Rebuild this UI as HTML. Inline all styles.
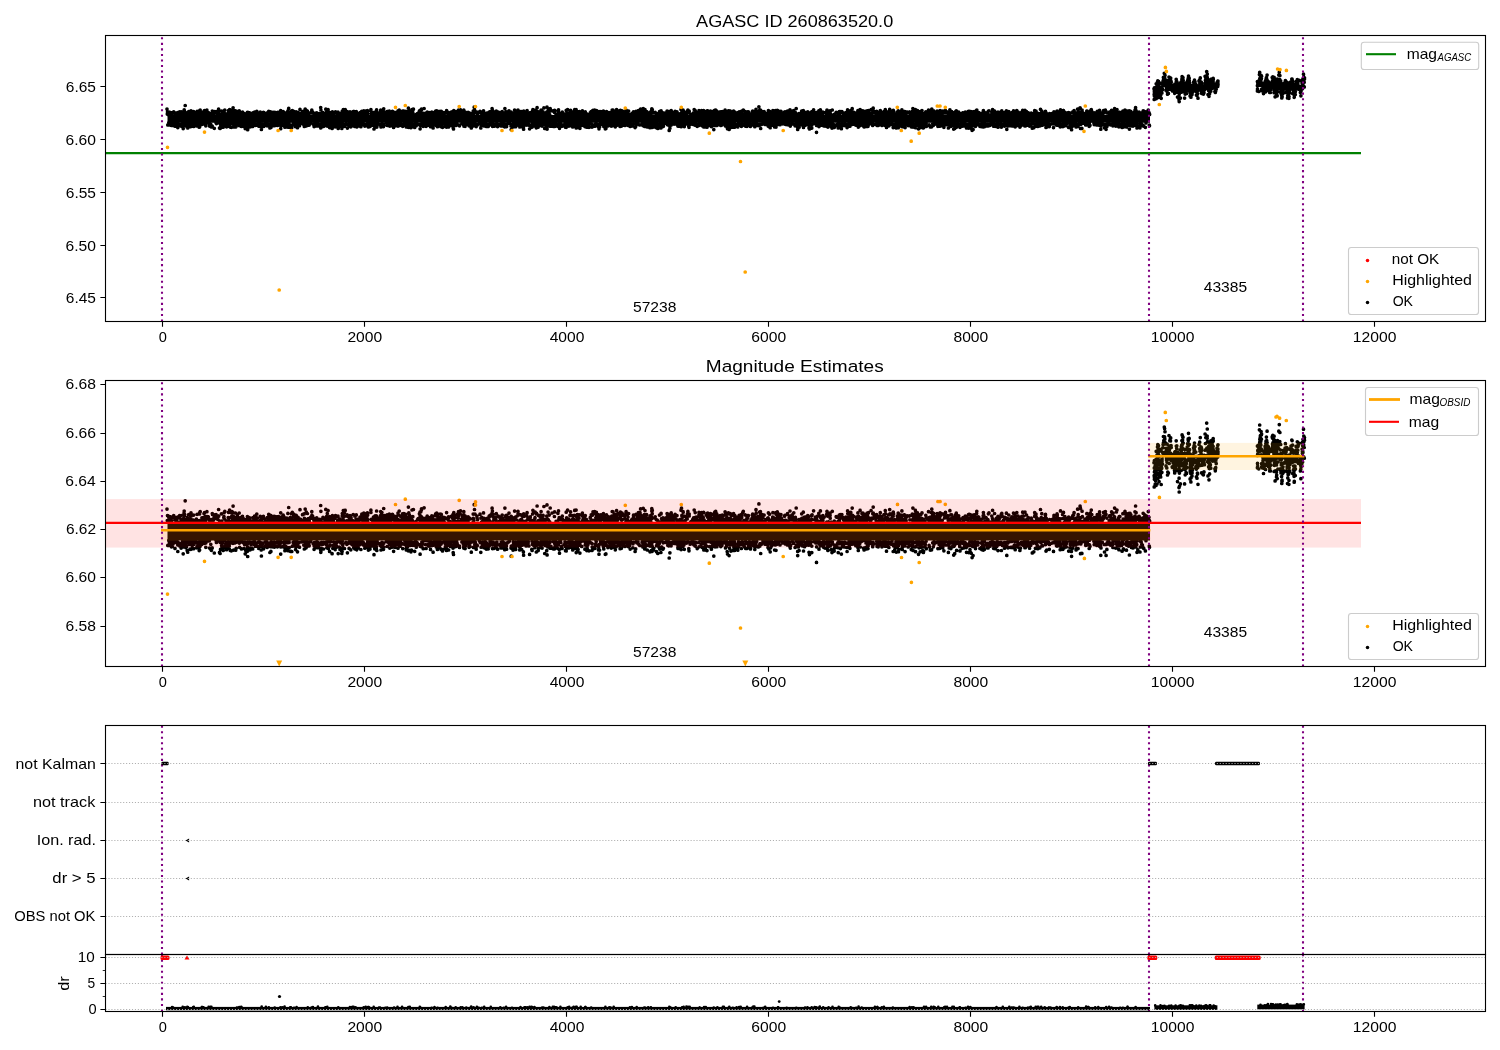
<!DOCTYPE html><html><head><meta charset="utf-8"><style>html,body{margin:0;padding:0;background:#fff;overflow:hidden}svg{display:block;will-change:transform}text{font-family:"Liberation Sans",sans-serif;fill:#000}</style></head><body>
<svg width="1500" height="1050" viewBox="0 0 1500 1050">
<rect width="1500" height="1050" fill="#fff"/>
<defs><clipPath id="c1"><rect x="105.5" y="35.5" width="1380" height="286"/></clipPath><clipPath id="c2"><rect x="105.5" y="380.5" width="1380" height="286"/></clipPath><clipPath id="c3"><rect x="105.5" y="725.5" width="1380" height="229"/></clipPath><clipPath id="c4"><rect x="105.5" y="954.5" width="1380" height="57"/></clipPath></defs>
<text x="794.64" y="26.50" font-size="17.40" text-anchor="middle" textLength="197.12" lengthAdjust="spacingAndGlyphs">AGASC ID 260863520.0</text>
<text x="794.76" y="372.00" font-size="17.40" text-anchor="middle" textLength="177.85" lengthAdjust="spacingAndGlyphs">Magnitude Estimates</text>
<g clip-path="url(#c1)">
<rect x="167.5" y="114.93" width="982.5" height="7.85" fill="#000"/>
<path d="M167.0 109.1h0m0.3 5h0m0.2-2.2h0m0.3 13h0m0.5-10.3h0m0.3-0.3h0m0.1-1.8h0m0.1 10.3h0m0 0h0m0.1-8.4h0m0.1-2.2h0m0.2 1.1h0m0 10h0m0-8.5h0m0.2 10.1h0m0-0.9h0m0.6-10.3h0m0.3 0h0m0.1-1.2h0m0.1 2.2h0m0.3-1.3h0m0.3 11.6h0m0.4 0.5h0m0.1-2.5h0m0.3-8.9h0m0 10.2h0m0 0.2h0m0.3 0.9h0m0.3-12.8h0m0 0h0m0.5 11.6h0m0.7-12.3h0m0.3 10.9h0m0.5-10.2h0m0.5 13.6h0m0.2-12.5h0m0.3 9.2h0m0.2 0.4h0m0.3-8.8h0m0 8.3h0m0.1 0.9h0m0.2-9.8h0m0.2 0.5h0m0.5 0.3h0m0.2-0.2h0m0.1 8.8h0m0-10.4h0m0.3-0.3h0m0.2 12.1h0m0 2.9h0m0.1-3.5h0m0.6-0.1h0m0.2-0.2h0m0.9-12h0m0 1.1h0m0.2 12.3h0m0.3-10.4h0m0.5-0.2h0m0.2 9.9h0m0.1-9.8h0m0-0.1h0m0.2 11.5h0m0.1-12.1h0m0 0.4h0m0.1-2.5h0m0.3 12h0m0.3-9.3h0m0 10.6h0m0.2-10.5h0m0.3-1.2h0m0.3 10.3h0m0-0.8h0m0.5 5.6h0m0.3-15.4h0m0 9.5h0m0 2.9h0m0.4-2.2h0m0.1-12.5h0m0 2.7h0m0 0.8h0m0-0.3h0m0.2 10.2h0m0-14.4h0m0 15h0m0.2-0.9h0m0.1-0.5h0m0-11.7h0m0.2-0.3h0m0 13.9h0m0.2-0.3h0m0.3-19.6h0m0.2 17.4h0m0.6-9h0m0 11h0m0.1 1h0m0.2-12.4h0m0.3 0.9h0m0 9.4h0m0 1.5h0m0.6-12.5h0m0 14.4h0m0.1-4.4h0m0 0.1h0m0.3 0.2h0m0.1 4.8h0m0.2-13.8h0m0 9.1h0m0.1-10h0m0.2 1.3h0m0.5-3h0m0.5 11.6h0m0.3 1.3h0m0.1-9.7h0m0.4 11.9h0m0.1-13.2h0m0 9.9h0m0.2-0.5h0m0.2-10.9h0m0.2 1.6h0m0.1 13.1h0m0.1-14.8h0m0.1 2.9h0m0-3.9h0m0.2 3.9h0m0-2.7h0m0.1 12.6h0m0.1-10.9h0m0.5 0.1h0m0.4 8.9h0m0 1h0m0.1 2.2h0m0.1-11.5h0m0.1 10.4h0m0.6-1.1h0m0.2-9.8h0m0.2-2.2h0m0.1 12.8h0m0 1.9h0m0.2-3.1h0m0.3 0.7h0m1.3-9.9h0m0.3 9.1h0m0.6-9.7h0m0.4 12.5h0m0.1-2.6h0m0.1 2h0m0.1-1.4h0m0-12.6h0m0.4 3.3h0m0.3 10.4h0m0.3-0.9h0m0.1 1.4h0m0.9 0.3h0m0.1-11.8h0m0 13.1h0m0.1-3h0m0.3-13h0m0 15.7h0m0.1-16.3h0m0.1 12.3h0m0.2 2.5h0m0.1-0.1h0m0.1-2.4h0m0-12.7h0m0.6 13.7h0m0.2-9.3h0m0 8.8h0m0.6-9h0m0.1 10.1h0m0.2-11.6h0m0.3 1h0m0.6 0.6h0m0.5-1.7h0m0.4 9.9h0m0-10h0m0.1 1.2h0m0.2-2.9h0m0.1 12.6h0m0.4-10.2h0m0-2.7h0m0.1 13.3h0m0.2-0.7h0m0-9.9h0m0.1 9.7h0m0.6-10.8h0m0.1 2.2h0m0.1-1.1h0m0.1 9.9h0m0 2.5h0m0-2h0m0.8-1.2h0m0.3-12.4h0m0.4 2.1h0m0 10.6h0m0.5-9.5h0m0.5-0.9h0m0.5 10.5h0m0.6-0.3h0m0.1 3.3h0m0.3-11.7h0m0.1-0.8h0m0.7 13h0m0.1-12.2h0m0.1 10.1h0m0-9.9h0m0.6 12.5h0m0.3-12.5h0m0.5 11.5h0m0.1-15h0m0.1 2.5h0m0.1-2.1h0m0.4 2.7h0m0.6-0.2h0m0.5-1h0m0.1-0.2h0m0.2 15.6h0m0-16.7h0m1.6 1.5h0m0.1-0.3h0m0 9.9h0m0-9.6h0m0.1-1.6h0m0.2 1.6h0m0.1 10h0m0 0.5h0m0.6-11.5h0m0.6 0.9h0m0.1 0.5h0m0.6-1.4h0m0.3-2.9h0m0.1 3h0m0.7 10.7h0m0.1 5.1h0m0.2-13.7h0m0.4 14.2h0m0.1-4.9h0m0.1-9.1h0m0.2 12.1h0m0.2-3.2h0m0.1-0.3h0m0.2 0.6h0m0.4-12.6h0m0 12h0m0.2 1.9h0m0.2-10.6h0m0.1 11.2h0m0-2.9h0m0.2 4h0m0.5-3.1h0m0.1 2.1h0m0-1.8h0m0.3 2.5h0m0.1-3.6h0m0.1 4.4h0m0.6-14.5h0m0.2-0.3h0m0.2-1.8h0m0 2.7h0m0.6-3.2h0m0 12.8h0m0.1 2.5h0m0.9-1h0m0.2-10.2h0m0.1 11.6h0m0.5 1h0m0.2-2.8h0m0.3 1.1h0m0.2-10.8h0m0.3 9.1h0m0 2.9h0m0.4-12.1h0m0.1 9.5h0m0.1-0.5h0m0-10.4h0m0.2 11.9h0m0.1-14.2h0m0.3 3.6h0m0.4 12.2h0m0.1-1.2h0m0.3-15.6h0m0.6 1h0m0.1 16.6h0m0.1-14.4h0m0.1 2h0m0.2 9.1h0m0.5-0.9h0m0.1 4.4h0m0.1-14.7h0m0.4-0.4h0m0.2-2h0m0.1 0.5h0m0.2-0.3h0m0.3 3.3h0m0.2-0.4h0m0.2 0.7h0m0 10h0m0.1-16.2h0m0.2 15.2h0m0.1-8.2h0m0.2-2.5h0m0 14.7h0m0-3.9h0m0.3-10.1h0m0.4 1.3h0m0.4-0.3h0m0.1-3.2h0m0 13h0m0.2-10.8h0m0.5 0.7h0m0-2.9h0m0.2 16.2h0m0.4-4.1h0m0.1 3.3h0m0.6-2.7h0m0-0.4h0m0.1-8.4h0m0 8.4h0m0.1-9.8h0m0.1-1h0m0.4-0.8h0m0.4 1.3h0m1.1 1.2h0m0.2-3.2h0m0 12.2h0m0.1 0.9h0m0.3 1.8h0m0.4-11.2h0m0.4-1.7h0m0.3 1.1h0m0 0.8h0m0.5-1h0m0 0.1h0m0.3 12.7h0m0-11.8h0m0.6 8.7h0m0.1-0.2h0m0 0.1h0m0.1-9.3h0m0.2-1.8h0m0.1 1.9h0m0.1 0.4h0m0.5-1h0m0.1 0.8h0m0.1 9.4h0m0.4-10.4h0m0.1 1.7h0m0.1-1.1h0m0.1 12.3h0m0.3-12.3h0m0.2 10.6h0m0.3-1.1h0m0 0h0m0.3 5.2h0m0.3-1.6h0m0.2-12.4h0m0.5 9.7h0m0.1 0.1h0m0.2-10.7h0m0.7 13.9h0m0.2-15.3h0m0 11.9h0m0.2 1.5h0m0.1-11.3h0m0 15.3h0m0.1-6.3h0m0.1 2.7h0m0.6-13.5h0m0.1 13.8h0m0.1-12.7h0m0.3-0.5h0m0.1 1.4h0m0.3-0.7h0m0 0.7h0m0 12.3h0m0.2-14h0m0.1 10.5h0m0.4 3.4h0m0.1-0.7h0m0.2-11.8h0m0.5 10.1h0m0.2-0.3h0m0.7-9h0m0.2 11h0m0.2-12h0m0 9.4h0m0.3-8.4h0m0.2 11.3h0m0.2-13.6h0m0.5 2h0m0.2 9.6h0m0.4-1h0m0.1 1.1h0m0.2-1.4h0m0-9.8h0m0.1 1.7h0m0.2-2.8h0m0-0.1h0m0 2.7h0m0.9 10.5h0m0.4-12h0m0.6 11.6h0m0.1-10.5h0m0-1.5h0m0.2-1.6h0m0.2 12.6h0m0.1-9.8h0m0.2-1.1h0m0.6 10.4h0m0.2 2h0m0.4 0.6h0m0.1 0.2h0m0.3-11.3h0m0.3 0h0m0.1 8.4h0m0.2 0.3h0m0.6-9.3h0m0 10.8h0m0.2-12.9h0m0.3 1.5h0m0.4 0.1h0m0.2 13.1h0m0.1-12.6h0m0.1 15.2h0m0.2-4.2h0m0.1-1.5h0m0.8 0.3h0m0.1-10.8h0m0.8-1h0m0.2 14.1h0m0.4-11.4h0m0.9 10.3h0m0.1-12h0m0 10.1h0m0.3-9.1h0m0.7 0.3h0m0.2 9.8h0m0.1-9.6h0m0 0.2h0m0.3 8.3h0m0 2h0m0.3 0.1h0m0.1-1.1h0m0-9.4h0m0.2 10.9h0m0.1-13h0m0.5 12.6h0m0.7-11.5h0m0 0.5h0m0.1 0.4h0m0.1-0.2h0m0-3.2h0m0.1 12.5h0m0.5-11.4h0m0.3-0.2h0m0.1 2.4h0m0-1.2h0m0.2 14.5h0m0.1-3h0m0.3-12.7h0m0.1-0.5h0m0.3 2.2h0m0 11.5h0m0.2 2h0m0-12.8h0m0.3-0.6h0m0 0.3h0m0.1 8.9h0m0.4-10.3h0m0.1 0.8h0m0.2 10.7h0m0.1-12.2h0m0.1 1.2h0m0.1-0.1h0m0.5-0.1h0m0.5 12.3h0m0.1-13.3h0m0.3 2.7h0m0.3 9.4h0m0.1-1.1h0m0.2 0.9h0m0 0h0m0.1 1.5h0m0.1-0.7h0m0-12.7h0m0.1 0.8h0m0.1 0h0m0 1.2h0m0.3 9.6h0m0.1-10.6h0m0.2 1.6h0m0 8.8h0m0-9.9h0m0.5-1.3h0m0 0.5h0m0.4 1.8h0m0.2-1.2h0m0.1 10h0m0.3-10.3h0m0.1 12h0m0.3-12.8h0m0.1 10.8h0m0.1 2.2h0m0.1-12.8h0m0 1.5h0m0.3 8.8h0m0.4 0.7h0m0.3-10h0m0.1-1.3h0m0.6 2h0m0.1 10.4h0m0.1-10.3h0m0.2-1.4h0m0.1 10.2h0m0.4 1h0m0.1-10.5h0m0.3 9.2h0m0.2-12.3h0m0 18h0m0.1-3.1h0m0.1-2.3h0m0.6 0.1h0m0.3-10.9h0m0 1.6h0m0.2 0.9h0m0.3-1.2h0m0 0.2h0m0.3-0.4h0m0.3-1.1h0m0.1 2.3h0m0.1 10.7h0m0.1-13.8h0m0.1 3.3h0m0.4-1.9h0m0.3-0.7h0m0.1 11.8h0m0.1-10.3h0m0.5 9.1h0m0.2 4.2h0m0.1-14.1h0m0.1 13.2h0m0-2.3h0m0.1-10.9h0m0 10.6h0m0-8.7h0m0.2 8h0m0.2 0.9h0m0.4 1.5h0m0.2-2.2h0m0.5-9.3h0m0 12.9h0m0.1-13.8h0m0.3 0.3h0m0 12.5h0m0-11.4h0m0.5-0.8h0m0.2 9.8h0m0.1-12.5h0m0 12.1h0m0-9h0m0.1 9.7h0m0.1 3.5h0m0.3-4.1h0m0 0.2h0m0.2-9.7h0m0 1.1h0m0.1-6.3h0m0.1 5.5h0m0 0.2h0m0.2 9.1h0m0.1 2.7h0m0-2.2h0m0.5-10.1h0m0.3-0.4h0m0.3-0.4h0m0.2-0.1h0m0.3 14.8h0m0.3-14.4h0m0.5-2h0m0 3.2h0m0-1.3h0m0.3 14.6h0m0.5-17.1h0m0 14.8h0m0.4-10.9h0m0.4 9.1h0m0-12.5h0m0.3 1.5h0m0.4 1.5h0m0 0.7h0m0.3 8.7h0m0 1.1h0m0.1-13h0m0.1 11.4h0m0.8-8h0m0-1.5h0m0.1 11.8h0m0.1-12.7h0m0.1 11.3h0m0.1 0h0m0.1 2.9h0m0.1-3.2h0m0.4-0.5h0m0.1-10.4h0m0-0.8h0m0.1 2.8h0m0.5-0.9h0m0 9.4h0m0 0.1h0m0.1 0.2h0m0.3-9.8h0m0.1 11.8h0m0.2 2.3h0m0.3-3.4h0m0.3-11.6h0m0.3 0.4h0m0.4 0.3h0m0.2 10.3h0m0.3-0.1h0m0.2 2.1h0m0.1-11.2h0m0.1-1h0m0.3-4.1h0m0.7 4.2h0m0.6 1.3h0m0.3 8.5h0m0.1-9.1h0m0.8-2.8h0m0.3 2.6h0m0.1 0h0m0.5 9.2h0m0-0.3h0m0.1-8.6h0m0.3 10.4h0m0.3-13.6h0m0.2 15.3h0m0.1-13.4h0m0.1 10.3h0m0.1 0.1h0m0.4-0.1h0m0.1 0.1h0m0.1-14.4h0m0 4.9h0m0 0.8h0m0.2-0.8h0m0 10.8h0m0.2-10.4h0m0.2-0.5h0m0.3 12.1h0m0.2-15.6h0m0.1 13.3h0m0.1-0.8h0m0.5 0.8h0m0.4-12.7h0m0.1 3.9h0m0.1-1.4h0m0.1 0.1h0m0.3 9.8h0m0.2 1.7h0m0.1-11.9h0m0.5 11.2h0m0.4 0.7h0m0-10.6h0m0.2-0.9h0m0.2-0.4h0m0.5 10.1h0m0.7-0.3h0m0-10.5h0m1-2.3h0m0.1 1.6h0m0.2 1.2h0m0.5-0.9h0m0.6 12.1h0m0.3-11.2h0m0.4 1.1h0m0.2 12.5h0m0.1-1.4h0m0.1-1.5h0m0.3 1.1h0m0.1-11h0m0.3-0.5h0m0.1 0.5h0m0 0.4h0m0.3-0.5h0m0 1.4h0m0-1.1h0m0.6 10.3h0m0.3-10.8h0m0.1 0.4h0m0-0.5h0m0.3-0.5h0m0.1 1.3h0m0 11.7h0m0-2.6h0m0.1 0.3h0m0.5 1.7h0m0-0.5h0m0.2 1.1h0m0.1-2.3h0m0 1.6h0m0.2-10.2h0m0.6 8.8h0m0.1 0.3h0m0.1 1.7h0m0.2-0.8h0m0.3-11.5h0m1.1 1.1h0m0.2 12.2h0m0.2-19.3h0m0.1 20.4h0m0.1-0.2h0m0-17.7h0m0.4 4.7h0m0-1.2h0m0.1 12.7h0m0.1-11.2h0m0.1 8.6h0m0 0.5h0m0.6 0.4h0m0.5-0.1h0m0.3-11.7h0m0.4 13.8h0m0.1-2.2h0m0.1-0.8h0m0.6-8.6h0m0.3-1.4h0m0.1 10.4h0m0.5-10h0m0-0.6h0m0.1 1.3h0m0.6-5.4h0m0 14.6h0m0.4-9.6h0m0.2 9.2h0m0-10.6h0m0.1-0.4h0m0.1 12.2h0m0.2 1.4h0m0.4-0.6h0m0.1-14.5h0m0.1 12.4h0m0.2-8.5h0m0.1-2.5h0m0.1 10.8h0m0.1 0.3h0m0.1-10.9h0m0.1 1.4h0m0-4.2h0m0.3 16.6h0m0.9-1h0m0.2-11h0m0-1.9h0m0.1 15.2h0m0.1-13.1h0m0.2 0.4h0m0.2 9.8h0m0.5-10.3h0m0.1-0.3h0m0.1 9.1h0m0-10.3h0m0.4 0.1h0m0.1 2h0m0.2-1.8h0m0.6 1.8h0m0 13.5h0m0.1-14.7h0m0.2 0.4h0m0-1h0m0-1.3h0m0.4 14.3h0m0.2-1.2h0m0.3-11h0m0.4 9.4h0m0-8.7h0m0.2 8.7h0m0.7 0.9h0m0.2-0.4h0m0.2-10.9h0m0.2 13.8h0m0.1-3.4h0m0.1 0.6h0m0.1 1.8h0m0-13.9h0m0.7 13h0m0.1 0.4h0m0-0.3h0m0.7-1.4h0m0.1 1.9h0m0.3-2.2h0m0 2.3h0m0.2-11.3h0m0.4-2.1h0m0 2.5h0m0.2 13.8h0m0-14.7h0m0.2 9.4h0m1 2.5h0m0-12.4h0m0.3 9.8h0m0.3 3.6h0m0-13.1h0m0.2 1.1h0m0.6 9.2h0m0-9.9h0m0.5 0.4h0m0.1 12.8h0m0.4 1.3h0m0-14.2h0m0.3 13.3h0m0.1-15.5h0m0 14.2h0m0.1-3.3h0m0-11.9h0m0.4 13.7h0m0.1-0.5h0m0 0h0m0.1 1.5h0m0.1-12.5h0m0.3-3.6h0m0.2 4.4h0m0.1 0h0m0.5 0.9h0m0-4.4h0m0.4 15.7h0m0.1-16h0m0.3 1.8h0m0.3-2.5h0m0.7 14h0m0 0.2h0m0.7-9.6h0m0.2 10.2h0m0.3-12.8h0m0.1 12.4h0m0-12.1h0m0.2 16.2h0m0.2-15.9h0m0.2 11.9h0m0.8-10h0m0.5 12.1h0m0.1-13.5h0m0 0.8h0m0.1 9.8h0m0.3-8.5h0m0.4-2.9h0m0.3 0.5h0m0.5 10.9h0m0 3.5h0m0.2-2.7h0m0.1-11.1h0m0.4 1.8h0m0.1-0.7h0m0.5 10.5h0m0.2-9.9h0m0 9.4h0m0.3-9.9h0m0.3 8.9h0m0.3-11.6h0m0.6 0.1h0m0 14.2h0m0.4-14.1h0m0.2 2.8h0m0.2-2.5h0m0.1 14.4h0m0.1-1.7h0m0.1-1.2h0m0-0.7h0m0.4-10.9h0m0 14.2h0m0.3-1h0m0.2 0.6h0m0.2-12.3h0m0.3-1.8h0m0.3 15.1h0m0.1 0.2h0m0-13.4h0m0.5 9.3h0m0.3 1.4h0m0-10.5h0m0.3 0.6h0m0.2 0.3h0m0.3 11.4h0m0-11.3h0m0 9.8h0m0.4-10.3h0m0.2 9h0m0 0.5h0m0.2-0.1h0m0.1 1.1h0m0.6-11.6h0m0.1 10h0m0.1-10.4h0m0-0.1h0m0.5 10.3h0m0.2 0.2h0m0 1.3h0m0.2 2.3h0m0.6-12.9h0m0.1 9.4h0m0.2-11.9h0m0.4 2.6h0m0.1-1.3h0m0 10.6h0m0.2-11.1h0m0.2-0.7h0m0.3 0.5h0m0.2 2.8h0m0.1-1.5h0m0.1 10.5h0m0 1h0m0.2-11.4h0m0.2-2.5h0m0.5 3h0m0.3-0.3h0m0.2 0.4h0m0 12.2h0m0.2-0.6h0m0.1-12.8h0m0.3-0.4h0m0-1.1h0m0.1 13.6h0m0.7-0.1h0m0.1-10.1h0m0-1.5h0m0.1 11.2h0m0.1-10.6h0m0.2-0.1h0m0.1-1.9h0m0.1 0.9h0m0.2 13.1h0m0.1-12.2h0m0.2-1.5h0m0-1.3h0m0 3h0m0.1 10.8h0m0-0.9h0m0.1-9h0m0.1-1h0m0-2h0m0 11.5h0m0.4-0.2h0m0 2.2h0m0-1h0m0.1 1h0m0.2 1.9h0m0.9-0.3h0m0.5-1.8h0m0.1 0.7h0m0.1-2.7h0m0 3.6h0m0.9-16.9h0m0 14.4h0m0-13.4h0m0.1 12.6h0m0.1 0.3h0m0.1-9.9h0m0.3 11.4h0m0.3 0.2h0m0.5-11.2h0m0.3-0.5h0m0.4 11h0m0.5-11.9h0m0.1 10.1h0m0.4 6.3h0m0.2-4.9h0m0-0.1h0m0.2 0.2h0m0.2 1.1h0m0-12.9h0m0 0.8h0m0.1 13.2h0m0.3-11.9h0m0.2-2.4h0m0.3 0.4h0m0.1 0.6h0m0 0.8h0m0.5 10.8h0m0.2-12.7h0m0 11.7h0m0 0.8h0m0 1h0m0 0.7h0m0.3-16.3h0m0.1 2.8h0m0.1 14.4h0m0.2-4.4h0m0-8.9h0m0.1 9.3h0m0.1-9.7h0m0.7-0.4h0m0 1.6h0m0.3-1.5h0m0.3 1.5h0m0.2 9.4h0m0.4-10.1h0m0.2 0.8h0m0.1-0.3h0m0.3 0h0m0.3 10.5h0m0.3-12.8h0m0.1 2.4h0m0-2.2h0m0.1-0.3h0m0 2.5h0m0.2-4.3h0m0.3 16.7h0m0.1-13.4h0m0.1 11.8h0m0.3-11.8h0m0 1.1h0m0-3.4h0m0.1 13.4h0m0.1-11.1h0m0.2 10.1h0m0-13h0m0.4 2h0m0.1 12.3h0m1 1.5h0m0-14h0m0 0.4h0m0.1 13.8h0m0.2-17.8h0m0 5.6h0m0.1 9.6h0m0.2 1.6h0m0.1-11.1h0m0-0.3h0m0.3-2.2h0m0.4 2.2h0m0.6-0.3h0m0-0.8h0m0.7 1.2h0m0.1-0.8h0m0.2 9.6h0m0-10.1h0m0.7-1.4h0m0.1 1.5h0m0.1-1.4h0m0.1 13.7h0m0.1-11.5h0m0.2 9.6h0m1.3 0h0m0.1-9.7h0m0.1 0.2h0m0.1-2.8h0m0.1 12.3h0m0.1-0.6h0m0.2-9.8h0m0 11h0m0 0.2h0m0.1 1.8h0m0.2-14.1h0m0.1 12.4h0m0.1-1.4h0m0-10h0m0 0.6h0m0 10.6h0m0.1-9.7h0m0.2 8.7h0m0.1-9.3h0m0.2 0.1h0m0.2 10.6h0m0-12.2h0m0.3 12.6h0m0.2-12.9h0m0.3 13.6h0m0.6-14.4h0m0.2 11.3h0m0-11.1h0m0.1 11.2h0m0.1 1.6h0m0.1-11h0m0.2 12.3h0m0.3-1.9h0m0.2 3.8h0m0.1-13.9h0m0.2-0.6h0m0.1 0.8h0m0.3 9.5h0m0.1-9.1h0m0.1 0.5h0m0.1-0.9h0m0.1 8.9h0m0-10h0m0.1-0.4h0m0 2h0m0.1 9.7h0m0.2 0.3h0m0.1 1.5h0m0.5-3h0m0.2-8.5h0m0.1-0.8h0m0.1 1h0m0.5 9.5h0m0-10h0m0-1.5h0m0.2 0.9h0m0 10.3h0m0.3-9.9h0m0.2 10.7h0m0.3-1.1h0m0.1 0.4h0m0.3 2.3h0m0-14.4h0m0-0.9h0m0.2 0.8h0m0.2 12.3h0m0.2-10.1h0m0.2 9.2h0m0.2-9.1h0m0.2-3.9h0m0.7 14.4h0m0.2 0.9h0m0.2-10.7h0m0.3-2.4h0m0.3 10.5h0m0.3 1.6h0m0-0.3h0m0.1-10.2h0m0.2 0.2h0m0.2-0.1h0m0.7-0.6h0m0.1-2.1h0m0.1 0.9h0m0.1 14.2h0m0.2-13.3h0m0.1-0.6h0m0.1 11.9h0m0.3-10.2h0m0.4-0.3h0m0.1 0.8h0m0-3.5h0m0.1 3.7h0m0.2-2.9h0m0.5 10.8h0m0.1-8.1h0m0.1-0.6h0m0-0.2h0m0.1 10.7h0m0-1.5h0m0.2 0.6h0m0-0.5h0m0.3-9.7h0m0.2 1h0m0.1-3.1h0m0.3 1.8h0m0 11.2h0m0.1 2.1h0m0.1-13.6h0m0 14.1h0m0.2-1.4h0m0.2-0.6h0m0.3-12.3h0m0.3 1.3h0m0 0.2h0m0.1 11.5h0m0.5-2.4h0m0-9.2h0m0 9.8h0m0.2-9.5h0m0.2 13h0m0.1-12.5h0m0-6.6h0m0.3 16.6h0m0.1-14.1h0m0 3.1h0m0.2 0.3h0m0.1 10.2h0m0 2.8h0m0-2.3h0m0.1-2.1h0m0.1-9.2h0m0.1-1.6h0m0.1-0.2h0m0.5 12.4h0m0 0.9h0m0.1-12.8h0m0.1 2.1h0m0.3 8.7h0m0.1-0.2h0m0-8.9h0m0.3 10.4h0m0.1 3.4h0m0.2-0.2h0m0.2-4.1h0m0.1 3.5h0m0.1-13.3h0m0.1 10.7h0m0.1-0.9h0m0.2-13.9h0m0 15.3h0m0.3-1.2h0m0-9.6h0m0.5-1.6h0m0.2 12.5h0m0.4-15.7h0m0.4 15.5h0m0.4-0.6h0m0.3 0h0m0.1-0.6h0m0.1 4h0m0.6-12.7h0m0.1 8.1h0m0.2 1.3h0m0.2-9.6h0m0 10.4h0m0.4 0.7h0m0-10.8h0m0.1 10h0m0.2-0.1h0m0.3-1.3h0m0.4 0.4h0m0.3-10.3h0m0.7-0.3h0m0.9 11.3h0m0.3-13.5h0m0.4 2.3h0m0.2-3h0m0.1 18.4h0m0-16.2h0m0.1 12.7h0m0-13.4h0m0 2.8h0m0 9.9h0m0.1-11.7h0m0.1 1.9h0m0.1-2.3h0m0.3-2.3h0m0.4 15.3h0m0.3-13h0m0-3.5h0m0 0.4h0m0.2 5.1h0m0.1 9h0m0.2 1.6h0m0.1-11.5h0m0.4 10.7h0m0.2-11.3h0m0 0h0m0.4 9.9h0m0.1 3.4h0m0.3-3.3h0m0.6-14.5h0m0.3 6.4h0m0.9-1.2h0m0.2 10.9h0m0.2-11.5h0m0.4 13.2h0m0.5-3.4h0m0.6-10.7h0m0 2.2h0m0.1-0.4h0m0.2-1h0m0.3 0.8h0m0.1 10.7h0m0.1 0.4h0m0.5-1.9h0m0.2-9.8h0m0 0.9h0m0.2 11.1h0m0.3-12.5h0m0.3 0.8h0m0.1 0.1h0m0.3 10.7h0m0.1-9.6h0m0 8h0m0.1 2.3h0m0.1-1.9h0m0.3-0.3h0m0 3.9h0m0.3-14h0m0.2 11h0m0.5 0.1h0m0.3-11.8h0m0 0.9h0m0.1 12.1h0m0.1-11.5h0m0.2 1.3h0m0.2-0.7h0m0.1-0.9h0m0 1.6h0m0.1-0.1h0m0.5 13.2h0m0-3.2h0m0.1-10.2h0m0.4 8.9h0m0 1.4h0m0.1-10.7h0m0.3 0.4h0m0.2 8.4h0m0.1 0.9h0m0 0.3h0m0.5-1.2h0m0.1-10.9h0m0.2 1.8h0m0.6-2.7h0m0.4 0.3h0m0 3.3h0m0.2 10.9h0m0.3-1.4h0m0.1-13.4h0m0.1 12.6h0m0.1-9.1h0m0.5 9.9h0m0 2.5h0m0.1-3.6h0m0-9.4h0m0 10.8h0m0.3-13.1h0m0 1.2h0m0.1 11.1h0m0.1-0.1h0m0.2-0.8h0m0.1 0.2h0m0.1-10.3h0m0.1 10.3h0m0.2-8.4h0m0.1 10.6h0m0.1-12.3h0m0.1 10.8h0m0.6-9.8h0m0.1 11.9h0m0.1-2.9h0m0.1-10.1h0m0.2 10.3h0m0-11.8h0m0.2 3.3h0m0.8 9.7h0m0 2.4h0m0.2-15.3h0m0.4 3.2h0m0.1 12h0m0.1-13.4h0m0.1 0.3h0m0.5 13.8h0m0-13.4h0m0-1h0m0.5 10.5h0m0.1-10.3h0m0.2 0h0m0-0.4h0m0 1.5h0m0.1-0.8h0m0.1-0.5h0m0.3 1.4h0m0.2-0.6h0m0.1 0.9h0m0.4-1.7h0m0.1 9.8h0m0.3 3.7h0m0.3-2.2h0m0.2 1.2h0m0.3-2.3h0m0.2 1.3h0m0.3 1.3h0m0 0h0m0.1-1.9h0m0.2 3.3h0m0.1-16.5h0m0.3 13.8h0m0.2-1.7h0m0-9.7h0m0.1 0.1h0m0.2-0.1h0m0.1 13.8h0m0.1-1.8h0m0.5-11.1h0m0.1 9.4h0m0.1 0.2h0m0.2-11h0m0.1 14.4h0m0.1-3.5h0m0-0.3h0m0-10.2h0m1 10.8h0m0.5-9.1h0m0.2 10.8h0m0.3-1h0m0.5-12.2h0m0.1 12.7h0m0.5-1.8h0m0.6-0.3h0m0.1 2.5h0m0.3-12.1h0m0.2 12.9h0m0.1-14.7h0m0 2.7h0m0.1 14h0m0.1-14.2h0m0.1 8.8h0m0.1 6.2h0m0.3-4.3h0m0-14h0m0.1 12.8h0m0.1-10.7h0m0.1 11.8h0m0.1-11.2h0m0 12.3h0m0.1-2.8h0m0.2-0.1h0m0.4 2.3h0m0-12.1h0m0 11.8h0m0.3-1.4h0m0.3-8.8h0m0.5 10.9h0m0.2-13.7h0m0.2 11.9h0m0.2-0.6h0m0.4-8.4h0m0.1 9.8h0m0-0.4h0m0.3 0.6h0m0.1-13.3h0m0.3 3.2h0m0.3-1.6h0m0.1 1.6h0m0.3-4.3h0m0.1 2h0m0 2.5h0m0.9 11.1h0m0-0.6h0m0.2-10.7h0m0.4 0.3h0m0-3.7h0m0.4-1.2h0m0.8 3.6h0m0.2 0.6h0m0.4 9.3h0m0.5-11.7h0m0.1 0.7h0m0.3 1.2h0m0.1 0.3h0m0.2 9.3h0m0-0.5h0m0.2-8.4h0m0-2h0m0 12.1h0m0.1-10.3h0m0 8.7h0m0.2 0.3h0m0.1 2.5h0m0.1-14.2h0m0-1.2h0m0 15.9h0m0.7-14h0m0.1 2.5h0m0.1-0.9h0m0 10h0m0.1-10.8h0m0 1.9h0m0.1-0.9h0m0.2 12.4h0m0.1-12.8h0m0-1.4h0m0.1 12.8h0m0.2-10.5h0m0.1 8.7h0m0.2 1.9h0m0.1-1.8h0m0.2-10.3h0m0.5 1.5h0m0.2 9.5h0m0.1-0.9h0m0 0h0m0 1.2h0m1.1-9.8h0m0.1 8.4h0m0-10.4h0m0 0.7h0m0.4 10.6h0m0.3 0.3h0m0.3-11.1h0m0 12.9h0m0.5-12.7h0m0 12h0m0.1-0.8h0m0.4 1.1h0m0-1.6h0m0.1-10.4h0m0.8 9.4h0m0.3 5.1h0m0.9-4.5h0m0.7-0.2h0m0.3-12h0m0.1 3.3h0m0-1.4h0m0.2 12.7h0m0.3-11.7h0m0 8.7h0m0.2 2.7h0m0.2-18.3h0m0.3 2.1h0m0.3 13.9h0m0 1.4h0m0.2-13.3h0m0.3 12.2h0m0.9 3.1h0m0.7-14.5h0m0.1 0.7h0m0.1 12.3h0m0-0.3h0m0.2 0.1h0m0.2-11.2h0m1.8 9.2h0m0.7 0.6h0m0-12.2h0m0.5 12.5h0m0.3 4.1h0m0.1-14.9h0m0.2 12.7h0m0.5-12.8h0m0 1.8h0m0.1-2h0m0.6 10.7h0m0-8.8h0m0.1 9.7h0m0.2 0.1h0m0.5-9.4h0m0.4-4.2h0m0.1 3h0m0.4 11.2h0m0.1 0.9h0m0-12.8h0m0.7 0.8h0m0.2 9.1h0m0 0.1h0m0.4 3h0m0.4-2.1h0m0.4-0.3h0m0-10.3h0m0.1 13.1h0m0.1-2.6h0m0.7 0.9h0m0-9.7h0m0-1.1h0m0.1-0.9h0m0 0.2h0m0.4 12.4h0m0.4-0.8h0m0.1-10.1h0m0.2 11.6h0m0-1.4h0m0.2-0.5h0m0.2-9.9h0m0 10.8h0m0.5-11.4h0m0-1.9h0m0 13h0m0.1-12.6h0m0.6 2.4h0m0.1 8.2h0m0-11.3h0m0.7 12.8h0m0.2-9.8h0m0.2 9.6h0m0.2-1.1h0m0.5-11.3h0m0.2-1h0m0.1-2.3h0m0.3 16h0m0-14.7h0m0 4.6h0m0.1 11.7h0m0.3-11.4h0m0.2-3.5h0m0.1 12.1h0m0.1-11.1h0m0.3 12.2h0m0.4-10.9h0m0.3 12.5h0m0.3-13.7h0m0.7 13.3h0m0.2-1.3h0m0.2-11.8h0m0.3 11.1h0m0.2-9.8h0m0.2-2.9h0m0.3 14h0m0-1.1h0m0.3-0.6h0m0 1.4h0m0.7 1.8h0m0.7-14.4h0m0.4 0.3h0m0.4 2.5h0m0.2 9.7h0m0.3-10.4h0m0.2 0.1h0m0 0.5h0m0.9-1.2h0m0 11.6h0m0.2-10.3h0m0.1-2.6h0m0 13.6h0m0.2-2.5h0m0.1-11.1h0m0 1.1h0m0.1 10.7h0m0.1-9h0m0.4-2.6h0m0.3-0.9h0m0.3 11.9h0m0.2-9.3h0m0-1.1h0m0 10.1h0m0.1 2h0m0.6 0.8h0m0.3-12h0m0 11.1h0m0.7-1.1h0m0.1-9.8h0m0.1 9.6h0m0.1 2.9h0m0.2-18.2h0m0.5 5.9h0m0.1-1.9h0m0.1 1.4h0m0.2-2.1h0m0.4 0.4h0m0.2 12.9h0m0.2-11h0m0 12.4h0m0.1-14.8h0m0.1 0.3h0m0.2 2.6h0m0.2 9.1h0m0.9-0.3h0m0.1-10.3h0m0.2 0.3h0m0.4 9.7h0m0-10.4h0m0.2-2h0m0.4 12.2h0m0.1-8.6h0m0-0.9h0m0.3 0.9h0m0.2-1.3h0m0.3 1.2h0m0.3 0.1h0m0.1-0.9h0m0.1 0.4h0m0.2 12.2h0m0.2 3.5h0m0-17.4h0m0.1 13h0m0.4 0.3h0m0.9-11.6h0m0.4 13.1h0m0-13.6h0m0.3 9.9h0m0 2.8h0m0.1-1.6h0m0.2-0.8h0m0.1-8.6h0m0-0.6h0m0.1 11.3h0m0.1-12.9h0m0.1 10.6h0m0.6-13.5h0m0.2 3.9h0m0.3 10.3h0m0.4 0.5h0m0 0.7h0m0.1-11.6h0m0.1 12.9h0m0.1-3.3h0m0-11h0m0.2 12.2h0m0.4-1.1h0m0-9.7h0m0.9-1.8h0m0 12.6h0m0.6-0.9h0m0.1-13.6h0m0.1 0.9h0m0.4 12.2h0m0.2 0.4h0m0.3-9h0m0.1 10.8h0m0.2-1.9h0m0.1-12h0m0.3 15.4h0m0.2-1.1h0m0 0.1h0m0.2-12h0m0.4-2.3h0m0.3 13.1h0m0.2-1.7h0m0.1 1h0m0.1 0.9h0m0.1-11.1h0m0.1 10.2h0m0-12.3h0m0 1.9h0m0.2 10.9h0m0.1 2.2h0m0.2-3.7h0m0.1-9h0m0.4 0.5h0m0 9.6h0m0 0.7h0m0.1-1.6h0m0.4-11h0m0.5 0.1h0m0 15.4h0m0.2 1.5h0m0.1-18.1h0m0.2 1.1h0m0.3 12h0m0.1-9.6h0m0.3 8.6h0m0.6 1.5h0m0.7-1.3h0m0.1 0.1h0m0-9.2h0m0.1 10.8h0m0.1-1h0m0.2 0.9h0m0.1-1.2h0m0.1-11.9h0m0.2 0.2h0m0.3-1.4h0m0 13.1h0m0 0.8h0m0.3-1.7h0m0.3 0.4h0m0.1-9.9h0m0.3 0.1h0m0 9.5h0m0 1.2h0m0.1-1.1h0m0 0.4h0m0.3-10.5h0m0.4 12.2h0m0.7 3.6h0m0.3-15.7h0m0.1 1.8h0m0.3-2.4h0m0.4 1.4h0m1.1 12.8h0m0.2-3.6h0m0.1 4h0m0.2-12.9h0m0 10.2h0m0.3-13.2h0m0.3-1.6h0m0.1 13.8h0m0.4-8.6h0m0.1-0.8h0m0-3.5h0m0.4 14.5h0m0.3-10.9h0m0.7 11.8h0m0-12.7h0m0 11.7h0m0.1-12.1h0m0.2-2.4h0m0.1 12.9h0m0.1 1.4h0m0.8-10h0m0 8.3h0m0.1 4.8h0m0-2.8h0m0.1-13.8h0m0.1-0.2h0m0.4 12.2h0m0.2-15.5h0m1.1 19.5h0m0-13h0m0.1 9.9h0m0.2 2.3h0m0-12.3h0m0 0.3h0m0.1-2.6h0m0.1 12h0m0.2 2.2h0m0.6-1.4h0m0.1-9.9h0m0-0.5h0m0.6-1.7h0m0.1 11.2h0m0.2 0.7h0m0.1-12.7h0m0.2 1.9h0m0.2-1h0m0 0.8h0m0.1-3.3h0m0.1 12.9h0m0.2 1.9h0m0.2-12.9h0m0 12.5h0m0.1-0.4h0m0.1-0.8h0m0-8.3h0m0.3-1.5h0m0 12.6h0m0-2.1h0m0-0.1h0m0.1-11.2h0m0.1 10.9h0m0.1-9.5h0m0.2 0.3h0m0 8.9h0m0.2-0.3h0m0 0h0m0.3-11.2h0m0.5 12.7h0m0.1-1.7h0m0.2-14.9h0m0 6.6h0m0.4-0.9h0m0.3 11.2h0m0-0.5h0m0.1 4.2h0m0.1-4.3h0m0.2 0.1h0m0.3-0.9h0m0 1.6h0m0.1-11.2h0m0.3 10.9h0m0.2-0.7h0m0.1-10.1h0m0.7-1.8h0m0 15.1h0m0.2-3.9h0m0.1-16.1h0m0 15.9h0m0.1 6h0m0-15.9h0m0.3 0.5h0m0.3-0.2h0m0.1 12.1h0m0-1.1h0m0.2 0.6h0m0.1-14.7h0m0.3 3.4h0m0.8-2.1h0m0.3 11.8h0m0.2 1.7h0m0-10.5h0m0.1 9h0m0-0.4h0m0.1 0.1h0m0.1 2.8h0m0.2-17.6h0m0.8 16.7h0m1.1-14.5h0m0.5 15.4h0m0.4-3.1h0m0.1 3.2h0m0.4 0.2h0m0.9-2.6h0m0-11.6h0m0.1 13.6h0m0.1-2.9h0m0 3.4h0m0-16.1h0m0.3 13.7h0m0.2 0.6h0m0.8-1.4h0m0.2-8.8h0m0 10.5h0m0.1 0.4h0m0.2-1.6h0m0.4 1.1h0m0.5 1.3h0m0.4-11.4h0m0.1-0.4h0m0.1-3.4h0m0.3 13.7h0m0.3-14.7h0m0.4 3.5h0m0.3 13.4h0m0-14h0m0.2 10.4h0m0.1 5.1h0m0.8-5.4h0m0.5 0.7h0m0.2-10h0m0.2-0.2h0m0.1 12.1h0m0 0.2h0m0-11.9h0m0.2-0.5h0m0.1 12.1h0m0.5 0.8h0m0.2-14h0m0.2 1.3h0m0.3 0.2h0m0.1 0.2h0m1 0.7h0m0 0h0m0.1 0.2h0m0.1 9.8h0m0.5-10.4h0m0.1 10.3h0m0.3-1.1h0m0.5 3.8h0m0-1.7h0m0.5-11.2h0m0.2-3.9h0m0 16.9h0m0.1-13.1h0m0.2 11h0m0 0.8h0m0.1-13.1h0m0.1 12.3h0m0.1-11.6h0m0 11.9h0m0.7-1.8h0m0.1-14.2h0m0.2 4.2h0m0.6 10h0m0.3-10.2h0m0.1 12.6h0m0-11.2h0m0.3 8.1h0m0.5-8.9h0m0.3 10.5h0m0.1 0.8h0m0-13.6h0m0.3 13.9h0m0.2-11.6h0m0 9.9h0m0.1-13.7h0m0.6 14.8h0m0.2-2h0m0.1-0.1h0m0 0h0m0.6-11.1h0m0.6 1.5h0m0 13.5h0m0.3-3.1h0m0.2 2.4h0m0-2.7h0m0.3-8.5h0m0-0.9h0m0.1-2h0m0 11.5h0m0.1 1h0m0.4 1.3h0m0.1-14.1h0m0.1 12h0m0.3-10h0m0.1-4.1h0m0.3 14h0m0.9 2.6h0m0.2-16.8h0m0.1 18.5h0m0.3-5.1h0m0 1.5h0m0.1-12.1h0m0 1.9h0m0.1-0.8h0m0 11.6h0m0.6-10.1h0m0-3.4h0m0.2 14h0m0.2-12.1h0m0 14h0m0-3.4h0m0.2-9.2h0m0.2 11.9h0m0.1-12.5h0m0.2 9.7h0m0.3 0.4h0m0.3-11.3h0m0.4-1.4h0m0.2 11.5h0m0.3 1.2h0m0-1h0m0 5h0m0.2-3.5h0m0.2-9.9h0m1.1 8.2h0m0.3 2.3h0m0.1-2.4h0m0.5-8.7h0m0.1-3.4h0m0.1 1.1h0m0.5 1.6h0m0.3 9.3h0m0.2-10.4h0m0.2 2h0m0.7-0.7h0m0.2 1.1h0m0.1-2.3h0m0.2 14h0m0.3-1.9h0m0.1-12.8h0m0.2 12.5h0m0-0.9h0m0.1 1.1h0m0.4-1.3h0m0.2-0.1h0m0.1-9.7h0m0.4 0.6h0m0 9.1h0m0 0.2h0m0.1-9h0m0 12.8h0m0.1-12.7h0m0 10.7h0m0.2-2.1h0m0 0.5h0m0.1 2.5h0m0.5-11.3h0m0.1-0.3h0m0 10.3h0m0.9-1.3h0m0.3 3.8h0m0.1-4.4h0m0.4-8.2h0m0.5 9.1h0m0.2-10.8h0m0.1-0.3h0m0.7 11.1h0m0.1-9.7h0m0.1-2.5h0m0.6 2.5h0m0.2 10h0m0 3h0m0.2-1.4h0m0.1-11.7h0m0-2.3h0m0.5 14.8h0m0.2-16.2h0m0.1 3.6h0m1.2 1h0m0.3-4.7h0m0 3.9h0m0.4 12.1h0m0.4-15.2h0m0 14h0m0-0.7h0m0.4-11.4h0m0.2 9.9h0m0-8.4h0m0.2 8.9h0m0.1-11.6h0m0.1-1.2h0m0 14.3h0m1.3-13.3h0m0.3 2.1h0m0-1.9h0m0.4 1.3h0m0.1 13.9h0m0.1-14.6h0m0 0.5h0m0.1 12.8h0m0-0.7h0m0.2-0.3h0m0.1 4.2h0m0.1-17.1h0m0.4 2.9h0m0.1 12.4h0m0.1-14.2h0m0.5 0.8h0m0.1 0.7h0m0.1 8.5h0m0.2 0.5h0m0-10.3h0m0.2-1.4h0m0.1 11.5h0m0.2-10.8h0m0.1-0.2h0m0.1 12.1h0m0-1h0m0.1-10.2h0m0.3-0.2h0m0 10.2h0m0.1-9.3h0m0.5 9.1h0m0.4-9.8h0m0.3 10.8h0m0.2-0.8h0m0.1-9.6h0m0 11.9h0m0.1-14.3h0m0.1 14.6h0m0.1-11.9h0m0.1-1.8h0m0.1 12.5h0m0-1h0m0 3h0m0.6-2h0m0.1-10.3h0m0.1-1.1h0m0.2-0.2h0m0.1 1.4h0m0.2 9.5h0m0-9.4h0m0.2 14.5h0m0.6-0.2h0m0.3-14.1h0m0.1-1.2h0m0.1 11.6h0m0.1-13.3h0m0.3 3h0m0.2-1.1h0m0 10h0m0.5-0.2h0m0.4 2.6h0m0-12.5h0m0.1 1h0m0.3-1.9h0m0.1 2.1h0m0.1-0.7h0m0 8.8h0m0.6 0.7h0m0.4-9.9h0m0 10h0m0.1 1.6h0m0.1-11.7h0m0.1 10.7h0m0.1-11.5h0m0.8 10.9h0m0.1-8.8h0m0.2-0.7h0m0.1 10.9h0m0.1 0.7h0m0-13h0m0.1 13.5h0m0.3-3h0m0.1 2.8h0m0.1-13.7h0m0.3 12.8h0m0-0.4h0m0.1-14.5h0m0.4 13.2h0m0.3-9.6h0m0.1-3.5h0m0.2 1.8h0m0.2 12.6h0m0-10h0m0.1 0h0m0.4 10h0m0.1-12.9h0m0.2 2h0m0 0.3h0m0-0.8h0m0.4 0.4h0m0-0.7h0m0.1 12.9h0m0.3-2.9h0m0.1-10.8h0m0.1 11.4h0m0-9.2h0m0.1-2.9h0m0 15.4h0m0.1-3.4h0m0.4-10.1h0m0.3 1.3h0m0.2 10.9h0m0.3-15.8h0m0.2 15.4h0m0.1-2.5h0m0.3-10.8h0m0.1-0.4h0m0 12.2h0m0.2-1h0m0.1-8.6h0m0-0.1h0m0.3-0.8h0m0.1 10.1h0m0 1.1h0m0.1-13.4h0m0.2 2.3h0m0.1-0.2h0m0.3 10.2h0m0.1 1.2h0m0.7 0.5h0m0.6 1.5h0m0.1-13.2h0m0.2-2.8h0m0.2 1.2h0m0 12.2h0m0.1-10.9h0m0-0.5h0m0.4 11.6h0m0 0.4h0m0.3 1.7h0m0.2-14.2h0m0.1 2h0m0.2 9.1h0m0.2-12.1h0m0.2 2.7h0m0.4-2.2h0m0.1 12.1h0m0.5 1.6h0m0.2-0.6h0m0.2-0.1h0m0.8-12.4h0m0.1 1.3h0m0.2 9.5h0m0.2 2.6h0m0.1-2.5h0m0.6 0.3h0m0.3-12.6h0m0 3.9h0m0-3.3h0m0.1-1h0m0.7 12.5h0m0.2-8.3h0m0.1 9.8h0m0.2-10.6h0m0 9.7h0m0-11.8h0m0 11.5h0m0.1 0h0m0.4 1.7h0m0-1.1h0m0.2-11.1h0m0.2 2h0m0.1 10.9h0m0.3-14.4h0m0.2 3.4h0m0.1 9.5h0m0.1 1.2h0m0.6-0.2h0m0.3-1.6h0m0.2 0.4h0m0.1-0.7h0m0 3.5h0m0.1-3.6h0m1.1-8.9h0m0.3 0h0m0.4-0.6h0m0.7 0.7h0m0.1 11.9h0m0.1-1.8h0m0-10.5h0m0.4 9.9h0m0.1-11.8h0m0.1 0.6h0m0.1 2.1h0m0-0.4h0m0.2 0.4h0m0.2-0.2h0m0.9-0.1h0m0.1 13.4h0m0.1-14.1h0m0.2 1.1h0m0.3-0.4h0m0 12.3h0m0.3-15.1h0m0.2 11.9h0m0.1-11.7h0m0.5 12.2h0m0.8-11.1h0m0.1 11.2h0m0.1-9.8h0m0.1 0h0m0.1 9.3h0m0.4-10.1h0m0-2.7h0m0.2 1.9h0m0-0.8h0m0.3 12.8h0m0-12.4h0m0.7 2.5h0m0.1 10.4h0m0.2-13.2h0m0.1-1.2h0m0.6-1.6h0m0.1 2.6h0m0 1.4h0m0.6 0.4h0m0.7 0.3h0m0.1 0.5h0m0 9.3h0m0.1-10.6h0m0.3 0.7h0m0.1 11.4h0m0.1 0h0m0-1.9h0m0.2 2.5h0m0.3-16.9h0m0.3 16.9h0m0.1-13.7h0m0.3 11.1h0m0.1 0.9h0m0.2-11h0m0.2-1.5h0m0 1.5h0m0.2-0.3h0m0.1 13.9h0m0.1-12.7h0m0.1 9.9h0m0.1 1.6h0m0-15.6h0m0.1 16.1h0m0-11.6h0m0.2 10.1h0m0.2-1.4h0m0.1-8.2h0m0-1.9h0m0.3 0.8h0m0.2-0.3h0m0.5-1.8h0m0 11.3h0m0.4-9.8h0m0 0.5h0m0 0.9h0m0.3 12.5h0m0.4-13.8h0m0.2-0.1h0m0.3 11.9h0m0.6-11.5h0m0.2 0.4h0m0 10.5h0m0.1-1.2h0m0.1-8.5h0m0.8 13.1h0m0.1-15.6h0m0 13.1h0m0.2-10.9h0m0.3 10.7h0m0.1-1.8h0m0-8.8h0m0.4 9h0m0.1 3.9h0m0.1-4.2h0m0.1-10.7h0m0.1 11h0m0.1-10.3h0m0.1 11h0m0.1-15.2h0m0 1.1h0m0 3.2h0m0.2 14.3h0m0.1-2.4h0m0-15.2h0m0.1 1.2h0m0.1-1.5h0m0.6 13.4h0m0.2 3.2h0m0.5 0.7h0m0.2-3.8h0m0 3.1h0m0.6-13.3h0m0.8-0.5h0m0.4 10.5h0m0.7 0.4h0m0-9.7h0m0.2 11.5h0m0-1.7h0m0 4.3h0m0.1-4.6h0m0.2 0h0m0.4-9.2h0m0.1 10.8h0m0.5 3.7h0m0-14.3h0m0.2 11h0m0.7-0.4h0m0.3 1.1h0m0.3-1.8h0m0.2-12.3h0m0 11.9h0m0.2 2.9h0m0.1-0.6h0m0.2 0.3h0m0.2-3.3h0m0.7 5.1h0m0.1-13.3h0m0-3.5h0m0.1-0.3h0m0.5 2.3h0m0.1 12.5h0m0.1-2.9h0m0 2.9h0m0.2 0.5h0m0.4-11.9h0m0.4 12.3h0m0-12.1h0m0-1.2h0m0.2-0.4h0m0.2 10.9h0m0.2 2.4h0m0.2-12.5h0m0.1 0.4h0m0.5 9.5h0m0.4-8.8h0m0.2-0.6h0m0.1-1.1h0m0.1 1.5h0m0.5-1.2h0m0.2 0.5h0m0 0.4h0m0.4-1.2h0m0 1.5h0m0.5-0.6h0m0.1 9.4h0m0-0.3h0m0.2-8.3h0m0-1.3h0m0-0.9h0m0.2 0.6h0m0 10.4h0m0-12.5h0m0.4 13.3h0m0-13.1h0m0.2 2.2h0m0.1 11.4h0m0.5-12.5h0m0 10.7h0m0.1-8.7h0m0.2 10.7h0m0.4-13.6h0m0 3.3h0m0.2 15.6h0m0.1-15.7h0m0 0h0m0.1-0.1h0m0 9.9h0m0-11.7h0m0.1 1.6h0m0.4 13.8h0m0.4-15.8h0m0.1-1h0m0.1 1.8h0m0.1 1.3h0m0.2 9.7h0m0.1-12.5h0m0.2 1.2h0m0 12.2h0m0.1-14.4h0m0.1 13h0m0.3-12h0m0.1 0.5h0m0.5 0.2h0m0.3 1.1h0m1.1-0.6h0m0 1.6h0m0.3 9.2h0m0-0.8h0m0.2 1.2h0m0.4-10.7h0m0 0h0m0.2-0.9h0m0.3-0.1h0m0.1-1h0m0.5 12.6h0m0.2-10.6h0m0.1 9.8h0m1.1-11.3h0m0.1 12.4h0m0-10.2h0m0.4 0.2h0m0.3 9h0m0.1-9.3h0m0 11.9h0m0-1.4h0m0 0.5h0m0-0.8h0m0.1-9.5h0m0 11.5h0m0.2-12.3h0m0.4 0.6h0m0.2 8.6h0m0.2-0.3h0m0.3-8.4h0m0.2 0.3h0m0 8.5h0m0.2 1.1h0m0.3 0.8h0m0.5-11h0m0.1-0.6h0m0.1 13h0m0.1-12.8h0m0.2-4.2h0m0.1 17.2h0m0.4-18h0m0.1 6.1h0m0.2 7.9h0m0.1-10.6h0m0-0.3h0m0.3 1.3h0m0.1 10.9h0m0 1.1h0m0.4 0.1h0m0-12.9h0m0 11.7h0m0.4-9.5h0m0-4.3h0m0.1 0.2h0m0 14.8h0m0.2-0.5h0m0.5 0h0m0.1-12.5h0m0.3 10.9h0m0 3.5h0m0.9-12.5h0m0.4-1.7h0m0-0.1h0m0.7 0.5h0m0.2 11.1h0m0.7-10.5h0m0.3 9.8h0m0-12.1h0m0.4-1h0m0.5 13.3h0m0.4 3h0m0.2 0.9h0m0.2-15.2h0m0-0.9h0m0.9 13.2h0m0.5-0.8h0m0.2-9h0m0.3 9.3h0m0.1-0.6h0m0.4-8.8h0m0.3 0.1h0m0.6-0.3h0m0 0.4h0m0.1 8.1h0m0.1-9h0m0.1-0.2h0m0.3 10.1h0m0-9.4h0m0.3 10.1h0m0.2-11.5h0m0.6 11.8h0m0-15.2h0m0.7 5.2h0m0 8.8h0m0 1.6h0m0.1-1.4h0m0.1 1.2h0m0.1 0.3h0m0-12.3h0m0-2.3h0m0.1 14.5h0m0.2-12.4h0m0.3 1.5h0m0.4 0.5h0m0 9h0m0.2-10.6h0m0.2-0.5h0m0.6 13.7h0m1.2-11.8h0m0.5 9.2h0m0.1-12.3h0m0-0.9h0m0 15h0m0-13.6h0m0.4 0.3h0m0.1 1.4h0m0.4 0.6h0m0.3 8.6h0m0.2-10.9h0m0.5 1.5h0m0.3 11.1h0m0.4-13.9h0m0.4 1.3h0m0.2 1.3h0m0 1.1h0m0.1 11.5h0m0.5-2.9h0m0.1 1h0m0.1 0.1h0m0.2-11.2h0m0 1.7h0m0.4-4h0m0.1 12.4h0m0.1 4h0m0.3-1.1h0m0-12h0m0.4 13.1h0m0.4-1.3h0m0.1-1.9h0m0.2 0.6h0m0.2 2.1h0m0.1-3.2h0m0.6-11.5h0m0.1 3h0m0.5 10.5h0m0-13.7h0m0.3 15.7h0m0.1-12.7h0m0-3.6h0m0.4 1.7h0m0.1 10.4h0m0.1-12.2h0m0 12.5h0m0.9-12h0m0.2 2h0m0.2 9.6h0m0.2-9.6h0m0-1.7h0m0.5 11.5h0m0 2.4h0m0-11.9h0m0-1.7h0m0.1 11.4h0m0-9.8h0m0.3 0h0m0.1-1.2h0m0.2 2h0m0.1-3.2h0m0.1 12.3h0m0.1-10.4h0m0 9.9h0m0.3-11.6h0m0.4 15.3h0m0-13.4h0m0.1 10.2h0m0.2 0.4h0m0.5-0.4h0m0.1-9.9h0m0.2 0.3h0m0.1 11.3h0m0.6-11.9h0m0-1.9h0m0.2 13.4h0m0-0.7h0m0.1-12.6h0m0.1 11.5h0m0.1-0.1h0m0.1 6.8h0m0.1-5.5h0m0 1.3h0m0.2-13.2h0m0.1 1.5h0m0 9.6h0m0.1-9.7h0m0.5-3.3h0m0.2 14.8h0m0.1-1.4h0m0 1.8h0m0-10.8h0m0.1 9.7h0m0-10.7h0m0.3 10.4h0m0.1-11.8h0m0 2.3h0m0.1-4.5h0m0.5 1.1h0m0.2 0.9h0m0.1 1h0m0.1 1.3h0m0 9.8h0m0.1-13.1h0m0.1 1.8h0m0.1 12.6h0m0-13.8h0m0 2.5h0m0.2 8.9h0m0.3-11.2h0m0.1 11.7h0m0.8-10.6h0m0.2 11.3h0m0.1-11.5h0m0 1.9h0m0.2 8.2h0m0.1 1.3h0m0.8-11.3h0m0.1 10.7h0m0-10.3h0m0.1 11.3h0m0.1-9.7h0m0.1-0.6h0m0 9.6h0m0-1h0m0.1-11h0m0.2 2.7h0m0.4 10.8h0m0-2.2h0m0.3-11h0m0 12.1h0m0-10.3h0m0.1 9.2h0m0.1 0.4h0m0-0.2h0m0.4 1h0m0.1-12.5h0m0.1 13h0m0.4-13.2h0m0.1 3h0m0.1 8.6h0m0.2-10h0m0.3 10.4h0m0.1-9h0m0-1.4h0m0.1-1.4h0m0.1 12h0m0.3-10.2h0m0.2-0.1h0m1.1 0.3h0m0.1 9.1h0m0.1-12.8h0m0 13.6h0m0.1-12.2h0m0.3 14.4h0m0.9-1.7h0m0-11h0m0 1.4h0m0 9h0m0.3 1.4h0m0-2h0m0 1.9h0m0.2-12.3h0m0.2-1.4h0m0.1 16.3h0m0.3 1.1h0m0-4.2h0m0.1-0.5h0m0.8-13.2h0m0.2 4h0m0.3-3.8h0m0.1 3.4h0m0-0.2h0m0.1 15.2h0m0.1-18.4h0m0.1 12.7h0m0.2-10.6h0m0.1 13.1h0m0.3-11.1h0m0.1-4h0m0 0.2h0m0.1 13.5h0m0.2-13.8h0m0.2 2.4h0m0 10.6h0m0.1-0.9h0m0.3 4.3h0m0.6-15.5h0m0.2 2.4h0m0-0.1h0m0.5 0.5h0m0-0.7h0m0.6 13.1h0m0.1-2.4h0m0.1-10.9h0m0.2 9.4h0m0.4-12.2h0m0 0.2h0m0.2 14.3h0m0.1-13.5h0m0 13.8h0m0.4-2.7h0m0.1-9.1h0m0.1 13.2h0m0.2-3.5h0m0.1-11.3h0m0.1-0.4h0m0.1 13.3h0m0 0.7h0m0.2-1.6h0m0-10.7h0m0.1 1.1h0m0.6 11.3h0m1.1-0.1h0m0.3-11.9h0m0-0.3h0m0.1 11.9h0m0.2-10.5h0m0 11.6h0m0.2 0.2h0m0.2-13.9h0m0.1-0.6h0m0.2 13h0m0.1-10.7h0m0 9.4h0m0.1-0.9h0m0.2-9.2h0m0.1-1.2h0m0.4-1.1h0m0.2 0.5h0m0.1 12.5h0m0-10.7h0m0 10.4h0m0.3-10.9h0m0.3 0.1h0m0.3 10.4h0m0.4 0.3h0m0.5-13h0m0.1 12.2h0m0 2.7h0m0-2h0m0.2 0h0m0.1-12.2h0m0 0.7h0m0.3 2.1h0m0.2 8.7h0m0.1-0.3h0m0.4-12.7h0m0.1 14h0m0.5-14.5h0m0 14.7h0m0.1-9.8h0m0.6-0.9h0m0.7 11.5h0m0.2-1.3h0m0.2-10.3h0m0.1-2.4h0m0.4 11.5h0m0.1 3.1h0m0.1-11h0m0.6 8.2h0m0.3 0.6h0m0.1-9.7h0m0.1-1.2h0m0 1.2h0m0.1 12h0m0.1-13.8h0m0 11.5h0m0.1-10.8h0m0.4-1.3h0m0.2 1h0m0.6-1h0m0.3 13.3h0m0.7-2h0m0.1 1.2h0m0.1-1.1h0m0.4-8.5h0m0-0.2h0m0.5 11.8h0m0-0.4h0m0.1 0.2h0m0.2-2.4h0m0.3-9.4h0m0.1-0.6h0m0.2 10.7h0m0.6-11.4h0m0.3-1.4h0m0.1 12.2h0m0.3-12.7h0m0.1 12.1h0m0.1 1.1h0m0-11.6h0m0.2 1.8h0m0.1-0.1h0m0.1 10.5h0m0.3-11.9h0m0.2 1.6h0m0 8.5h0m0.1-8.3h0m0-2.3h0m0.2 0h0m0.2-0.5h0m0.1 12.4h0m0.4 2.2h0m0.1-1h0m0-0.5h0m0.2-11.2h0m0 10.7h0m0.1-0.4h0m0.2 0.9h0m0.3-12.6h0m0.2 1h0m0.1-4.3h0m0 15h0m0.2-13.4h0m0.5 12.2h0m0.4-10.3h0m0.5-0.3h0m0 12.9h0m0-13.1h0m0 2.8h0m0.3-1.3h0m0-0.5h0m0.4 0.1h0m0 12.2h0m0.1-12.5h0m0.5-6.3h0m0.2 7.6h0m0.3-0.1h0m0.2-3.9h0m0.2 14h0m0.1 0.8h0m0.1-12.8h0m0 1.6h0m0.2 10.1h0m0.2-12.7h0m0-1.3h0m0.3 18.4h0m0-4h0m0.5-10.3h0m0-0.6h0m0.2 10.8h0m0.3-10.2h0m0-0.2h0m0.4-2.4h0m0.2-0.1h0m0.2 3h0m0.2-1.5h0m0.2 10h0m0.1-10h0m0.3 1.6h0m0 8.9h0m0.2 0.2h0m0.5-0.2h0m0.1-11.8h0m0.9 12.7h0m0.6-9.3h0m0.2 8.1h0m0.2-9.5h0m0.4 9.7h0m0.6 1.2h0m0.6 0h0m0.1-11.5h0m0.1 10.3h0m0.1 0.2h0m0.1 2.2h0m0.1-12.9h0m0.3-2.2h0m0.1 2.9h0m0.3 9.5h0m0 3.4h0m0.1-3.2h0m0.1 3h0m0.1-11.4h0m0.4-3.6h0m0.7 16.4h0m0.3-3.4h0m0.1 1.7h0m0.5-12.1h0m0.1 9.6h0m0.4 1.7h0m0-10.7h0m0 8.7h0m0.2-8.7h0m0.1 10.4h0m0.4-10.1h0m0.4-2.2h0m0.2 0.5h0m0-2.5h0m0.3 3.7h0m0.1-1.3h0m0.1 10.9h0m0.4-10h0m0.1-1h0m0.4 0.4h0m0 10.7h0m0.2-10.5h0m0.1 13.4h0m0.1-13.8h0m0.1 10.9h0m0.5 0.7h0m0.1-14h0m0.1 12.2h0m0.2-9.4h0m0 9.5h0m0.3 4.1h0m0-4h0m0.1-11.8h0m0.2 2.1h0m0 10.2h0m0-9.8h0m0.1 10.7h0m0-10.1h0m0-3.5h0m0.4 2.6h0m0.1 9.5h0m0-11.9h0m0.1 12.2h0m0.3-13h0m0.2 2.3h0m0.5 10.4h0m0-10.2h0m0.4-0.4h0m0.2 1.7h0m0.3-2.8h0m0 3.1h0m0.2 10h0m0.1-10.9h0m0 1.4h0m0.1-1h0m0.1 0.6h0m0.1 8.3h0m0.3-8.1h0m0.2-3h0m0 13h0m0.2-1.8h0m0.1-8.8h0m0.1-0.9h0m0.1 0.2h0m0.3-0.6h0m0.2-1.4h0m0.2 11.4h0m0.2-9.7h0m0 0.9h0m0.1 9h0m0.1-8.1h0m1.2 8.9h0m0.1-9.8h0m0.5 9.7h0m0.3-9.3h0m0.1 0.4h0m0.5 9h0m0.1-0.2h0m0.1-11.4h0m0.3 10.9h0m0.1-0.2h0m0-11.1h0m0.1 12h0m0.1-9.8h0m0.3 9.6h0m0 0.7h0m0.2-1.4h0m0.1-8.9h0m0.2 8.9h0m0.1-8.5h0m0.4 9.7h0m0.4-9.8h0m0.2-2.9h0m0.2 11.7h0m0.2 1.6h0m0.1-13.6h0m0.3 11.9h0m0.4-8.7h0m0.7 10.1h0m0.3-11.6h0m0.3 10.7h0m0.1 0.4h0m0.3-11.7h0m0.1 13.4h0m0-15.7h0m0.1 3.4h0m0.2 12.8h0m0.2-13.5h0m0.1 0.8h0m0 0.4h0m0 11.2h0m1.4-13.4h0m0.1 1.1h0m0.1-1.1h0m0.1 11.4h0m0.2-10.1h0m0.4-0.3h0m0.1 1.2h0m0.3 10.2h0m0.5-13.3h0m0.7 3.9h0m0.1-0.8h0m0.5 12h0m0.3-13.1h0m0.4 1h0m0.2 9.3h0m0.2 1.9h0m0-16.3h0m0.3 16.1h0m0.4-1.6h0m0.6-8.2h0m0.2 12.7h0m0 1.8h0m0.4-5.1h0m0.3 1.3h0m0.1-2.5h0m0.4-9.4h0m0.2 13.5h0m0.4-13.3h0m0.2-0.2h0m0.1 10.1h0m0.3-8.9h0m0.1 9.8h0m0.3-1.8h0m0.1-8.1h0m0.3-1.1h0m0.1 0h0m0 9.9h0m0.2-0.8h0m0.5-11.7h0m0 13.1h0m0.1-11h0m0.6 1h0m0.2 11h0m0.4-2.1h0m0.3-12.6h0m0.2 16.9h0m0-4.3h0m0.5-10.4h0m0.1 1.2h0m0.1 9.5h0m0.3 1.6h0m0.1 0.5h0m0.5-12.9h0m0 0.7h0m0.3 11.6h0m0.2-12.3h0m0.1 2.2h0m0 9.3h0m0.1 0.8h0m0.5-10.8h0m0.4-1h0m0.1 0.3h0m0.2-0.1h0m0.5-1.1h0m0 11h0m0.3-11.3h0m0.3 2.3h0m0.3-1.5h0m0.3 12.2h0m0-1h0m0.3-10.1h0m0 14.1h0m0.5 1h0m0.1-14.1h0m0.6 8.1h0m0.3 0.9h0m0.5-8.8h0m0.4-3h0m0.2 1.6h0m0.1-1.7h0m0.1 16.2h0m0-2.9h0m0.3-13.6h0m1.5-1.8h0m0.1 13.4h0m0.9-9.5h0m0 9.3h0m0.3 0.4h0m0.4-10.8h0m0.5 11.3h0m0.3-0.2h0m0.2-9h0m0.2 17.6h0m0-18.8h0m0.1 12h0m0-2.4h0m0.1-9.6h0m0.1 10.3h0m0.4-8.8h0m0.5-2.9h0m0.3 2.4h0m0.5 8.8h0m0.3-12.4h0m0.2 12.3h0m0 3.4h0m0.6-12.1h0m0.2 10h0m0.2 0.3h0m0.2-0.8h0m0.1 1.1h0m0.1-15.2h0m0.3 2.8h0m0-0.5h0m0.1 11.5h0m0.3-9.3h0m0.1-0.4h0m0.3 11.1h0m0-10.9h0m0.2-1.2h0m0.7 11.2h0m0.5-12.2h0m0 2.2h0m0.4 10.3h0m0.1-11.6h0m0.2 10.3h0m0.1 2.6h0m0.1-1.1h0m0.4-12.2h0m0.9 13.6h0m0.5-2.3h0m0.6-0.5h0m0.3 0.5h0m0.1-0.2h0m0.1-12.2h0m0.1 3.3h0m0 0.2h0m0.2-4.8h0m0.2 14.3h0m0.2-1.3h0m0.2 3.6h0m0-14.6h0m0.2 13.3h0m0.1-2.5h0m0 4.2h0m0.2-15.9h0m0.1 12.7h0m0.1 0.3h0m0.1-9.3h0m0 10.5h0m0.1-10.8h0m0.7 10.2h0m0-12.8h0m0.3 11.4h0m0-0.1h0m0.1-11.5h0m0.4-0.9h0m0.1 0.8h0m0.1 13.5h0m0-12.2h0m0.9 10.1h0m0-8.4h0m0.2 12.1h0m0.1-3.3h0m0.6 4.6h0m0.3-18.1h0m0.1 13.4h0m0.1 0.9h0m1.7 3.1h0m0.1-13.1h0m0 10.5h0m0.1 1.4h0m1.8-13.8h0m0.4 0.2h0m0.1 12.2h0m0.2 0.9h0m0.2-1.1h0m0.1-0.2h0m0.3 1.5h0m0.3-2h0m0.1-9.4h0m0 9.2h0m0.3 4.3h0m0.5-4.2h0m0.2-0.9h0m0.1 1.3h0m0.2-11.4h0m0.1 0.8h0m0-1.9h0m0.2 2h0m0.1 1.1h0m0.2-2.4h0m0.1 13.7h0m0.2-2.3h0m0.1-12.3h0m0 12.7h0m0.2 2.1h0m0.4-13.5h0m0.6 15.9h0m0.5-5.2h0m0-12h0m0.7 14h0m0.3 0h0m0.1-0.8h0m0-11.9h0m0.5 0.9h0m0.2 0.2h0m0.3 10.4h0m0.1 1.3h0m0-1.6h0m0.6 0.1h0m0-0.7h0m0.6-8.7h0m0.4-1.1h0m0.2-1h0m0.8 2h0m0.1 11.2h0m0.3 1.8h0m0-3.6h0m0.2-10.4h0m0.3-3.7h0m0.2 2.6h0m0-1.6h0m0.2 1.8h0m0 11.5h0m0.1-11.4h0m0.4 0.8h0m0.7 9.3h0m0.2-10.3h0m0 12.6h0m0.3-0.6h0m0.1-11.9h0m0.1 13.5h0m0.2-11.6h0m0.2-3.4h0m0.3 1.4h0m0.2-1.5h0m0-0.6h0m0.1 3.2h0m0.1 0.9h0m0.2 0h0m0 9h0m0.1-10.2h0m0.4 0.2h0m0.3 10.8h0m0.1-1.5h0m0.1-14.2h0m0.3 3.1h0m0.1 11.4h0m0.1-9.8h0m0.1-1.5h0m0.1 2.7h0m0.3-0.4h0m0.4 9.2h0m0.3-11.1h0m0.4 2.4h0m0.3 9.6h0m1-0.8h0m0 0.3h0m0.1-9.4h0m0 8.5h0m0.1 2.2h0m0.9-11.9h0m0.2 0.6h0m0.2-1.3h0m0.6 1.3h0m0.1-0.6h0m0.1 12.6h0m0-15.1h0m0 12.5h0m0.4 1.2h0m0 2.7h0m0-4.1h0m0 1.7h0m0-0.9h0m0.3-10.2h0m0.1-1.3h0m1 10.7h0m0 0.1h0m0-10.5h0m0.1 11.5h0m0-10h0m0.3-4.5h0m0.2 5h0m0-0.6h0m0 11.6h0m0.6-12.1h0m0.2-0.6h0m0.2 10h0m0 0.3h0m0.3-9.2h0m0.4-3h0m0.5 3.6h0m0.2 8.3h0m0.2-12.1h0m0.2 1.1h0m0.2-0.7h0m0 3.1h0m0.3 11.8h0m0.1-13.5h0m0.1 13.8h0m0.3 0.5h0m0-14h0m0.1 9.6h0m0.1-8.8h0m0.1-1.1h0m0.3 10h0m0.1-9h0m0.1-1.2h0m0.8-1.1h0m0.1 14.4h0m0.2-1.8h0m0.2-10.9h0m0.1 1.4h0m0.2-1.4h0m0 13.5h0m0.1-11.9h0m0.5-0.8h0m0.1-1.1h0m0-1.9h0m0.2 1.2h0m0 11h0m0.3-11.5h0m0.1 13.3h0m0.2-12.2h0m0 13.7h0m0.1-12.5h0m0.2 11.2h0m0.1-1.9h0m0.1-12.5h0m0.5 13.5h0m0.4-11.1h0m0.4 0.6h0m0.6 9.7h0m0.2 0.1h0m0.1-9.1h0m0.4-4.6h0m0.8 3.7h0m0.1-0.4h0m0.1 11.3h0m0.5-11.1h0m0.1 12.3h0m0.1-14.4h0m0.3 12.4h0m0.1-15.3h0m0.1 2.7h0m0.4 0.4h0m0.2 13h0m0.1 0h0m0.1-11.4h0m0.4-0.8h0m1.4 1.2h0m0.2 0.7h0m0.5-2.6h0m0.2 11.8h0m0-0.1h0m0.1-8.6h0m0.1-2.6h0m0.1 13.5h0m0.1-1.4h0m0.1 1.4h0m0.2-12.6h0m0.3 10.4h0m0.4 2.3h0m0-1.3h0m0.2 0.5h0m0.7-12.2h0m0.4 0.6h0m0.2 9.7h0m0-9h0m0.1 0.7h0m0.2-1.5h0m0-0.9h0m0.1 11.9h0m0.2-13.3h0m0.1 2.9h0m0.1 9.8h0m0.6 1.1h0m0.1-0.9h0m0.4 1.2h0m0.3-10.5h0m0 11.2h0m0.1-13.2h0m0.2 11.2h0m0-10.3h0m0.3 10.6h0m0.1-10h0m0.4 10h0m0.2-0.1h0m0-9.2h0m0.7 9.4h0m0.1-12.4h0m0.2 11.3h0m0.1 1.4h0m0.1-1.1h0m0.3-9.4h0m0.3 9.1h0m0 2.5h0m0.3-15.6h0m0.1 3.3h0m0.1-1.9h0m0.4 1.6h0m0.2 11.7h0m0-0.8h0m0.2-9.7h0m0.1-0.1h0m0 10.3h0m0.1 3.4h0m0.4-14.3h0m0.3 10.3h0m0.5-9.1h0m0 10.8h0m0.2-12h0m0.1 1.4h0m0.4 9.8h0m0.1-1.1h0m0.2-11.7h0m0.1 2.9h0m0.1 11.3h0m0.7-2h0m0.1-14.5h0m0.2 1.9h0m0 3.3h0m0.1-0.3h0m0.2 0.1h0m0.3-0.8h0m0.7 10.9h0m0.3-11.2h0m0.2-1.7h0m0.1 3.1h0m0.1-3.5h0m0.1 3.4h0m0 8.5h0m0.1-11.6h0m0.1 13.1h0m0.2-12.2h0m0.3 12.2h0m0.5 3.1h0m0-13.4h0m0-2.1h0m0.1-1.7h0m0.2 14.7h0m0.1-13.9h0m0 3.4h0m0.8 9.7h0m0.1-10.7h0m0.2 11.3h0m0.1 1.8h0m0.7-0.8h0m0-12h0m0.1 10.9h0m0.2 0h0m0.2-1.6h0m0.3 4.7h0m0.3-4.6h0m0.4 2.5h0m0.1-2.7h0m0.2-11h0m0.2 1.3h0m0.5 0.7h0m0.2-3.3h0m0.1 3.6h0m0.2 13.3h0m0.1-3.1h0m0-1.5h0m0.2 1.1h0m0 0.7h0m0-13.6h0m0.1 15.4h0m0-0.1h0m0.5-12.6h0m0.1 9.6h0m0-10.8h0m0.5 2h0m0.3 9h0m0.1-10.2h0m0-0.8h0m0.2 0.9h0m0.3-2h0m0.1 0.5h0m0.4 11.1h0m0-10.4h0m0.3 11.1h0m0.1-1h0m0.1 0.8h0m0-13.9h0m0.2 16.2h0m0-14.3h0m0.2 14.9h0m0.4-1.6h0m0.1-1.9h0m0.1 0.4h0m0-8.8h0m0.3-1h0m0 10.8h0m0.1-10.7h0m0.2 10.7h0m0.4-10.9h0m0.2 9.9h0m0.1-12h0m0.3 12.9h0m0-10.6h0m0.3 9.6h0m0-11.6h0m0 13.3h0m0.1-13.5h0m0 1.6h0m0.1 9.6h0m0.1 4.7h0m0.3-12.8h0m0.1 8.2h0m0.4-10h0m0.1 10.1h0m0.1-9h0m0 0.2h0m0.2 8.8h0m0.2 0.3h0m0-11h0m0.5 11.7h0m0.5-0.8h0m0-11.3h0m0.7 13.6h0m0.5-1.4h0m0.1-0.7h0m0.3 0.4h0m0-0.7h0m0.3-11.1h0m0.2-0.1h0m0.3 1.8h0m0.1 9.4h0m0.5 1.9h0m0.5-1.7h0m0.2 0h0m0.1 3.4h0m0-3.7h0m0.3 2h0m0.1-2.3h0m0.1 0.4h0m0.4-0.1h0m0-11.3h0m0.1-0.5h0m0.2 11.7h0m0 2.3h0m0-2.3h0m0-11.1h0m0.3 2.2h0m0.1 10.2h0m0-15.7h0m0.1 4.9h0m0.1 0.6h0m0 13h0m0.1-3.5h0m0.2-9.9h0m0.6-0.5h0m0.3 1.1h0m0.1 11.2h0m0.1-13.6h0m0 2.3h0m0-1.8h0m0.2 2.3h0m0.7-2.5h0m0-1.1h0m0-1.5h0m0.1 4h0m0 9.9h0m0.1 4.2h0m0-2.2h0m0.1-11.6h0m0.3 11.6h0m0.3-11.8h0m0.2 10h0m0.2-8.8h0m0.2 8.4h0m0.1-8.8h0m0 9.8h0m0.4-10.1h0m0.1-3.5h0m0 13.2h0m0.1-10.5h0m0 10.3h0m0.1 0.6h0m0.2-9.9h0m0.1 10h0m0.2 0h0m0.2-12.1h0m0.1 16.5h0m0-16.1h0m0.1-1.2h0m0.3 11.7h0m0.2 2.7h0m0.1-2.4h0m0.4 0.5h0m0.1-9.7h0m0.4 11.1h0m0.1 2.3h0m0.2-13.4h0m0-0.5h0m0-0.9h0m0.2 10.7h0m0.1-9.6h0m0.3-2.6h0m0 13.5h0m0.2 0.8h0m0.2-11.1h0m0-1.4h0m0.6-2.5h0m0.1 2.6h0m0.1 9.8h0m0-8.3h0m0 9.1h0m0.1-10.6h0m0.1 10h0m0.2 3.9h0m0.1-12.7h0m0.7 13.5h0m0.1-2.5h0m0-12h0m0.1 0.7h0m0 13.3h0m0.2-3.6h0m0.1-9.3h0m0.5 9.5h0m0.6-9.7h0m0.1 10.7h0m0.2-0.6h0m0-0.8h0m0.5-11.9h0m0.3 11.3h0m0.2 3.3h0m0-13.6h0m1.1 0.5h0m1.1-3.1h0m0.3 3.7h0m0.2 1h0m0.1-0.1h0m0 10.1h0m0.1-12.1h0m0.1 1.5h0m0.1 11.2h0m0.3-12.3h0m0.3 1.3h0m0.1-0.1h0m0.2 12.6h0m0.3-12.3h0m0-1.3h0m0.1-0.8h0m0.1 1.7h0m0.6-3.7h0m0.2 16.2h0m0.2-17.7h0m0 0h0m0.1 5.4h0m0-1.1h0m0.4-0.4h0m0.1-2.5h0m0 3.2h0m0.3 10.1h0m0.1-12.2h0m0.2 1.9h0m0.1-1.7h0m0.2 13.7h0m0.1-13.4h0m0.1-0.9h0m0.1-0.3h0m0.4 13.5h0m0-1.1h0m0-9.1h0m0.1-1.6h0m1.1 1.3h0m0.5 9.9h0m0.2-0.1h0m0.4-11.3h0m0.3 2.4h0m0.1-1.4h0m0.4-2.4h0m0.1 3.5h0m0.2-2.4h0m0.1 11.2h0m0.1-11.8h0m0.1 11.8h0m0-10.5h0m0.2 13.5h0m0.3-12.6h0m0.1 0.2h0m0.3 0.5h0m0.5 10.2h0m0.3-0.2h0m0-1.5h0m0.1-8.3h0m0-0.7h0m0.2-0.3h0m0-1h0m0.1 13.6h0m0.3-15.5h0m0.1 13.7h0m0.3-10.6h0m0 0.8h0m0.2 10.5h0m0-1.6h0m0.2-11.7h0m0.1 13.5h0m0.3-14.2h0m0.1 11.9h0m0.1 1.7h0m0.2 0h0m0.5-10.7h0m0.5 11.1h0m0.1 0.9h0m0.3-14.8h0m0.2 13.1h0m0.4-1.3h0m0.2 4.3h0m0-3.5h0m0.3 0h0m0.4-10.9h0m0.3-0.9h0m0 0.1h0m0.1 12.6h0m0.5-14.2h0m0.1 12.6h0m1.3-10.2h0m0.7 11.8h0m0-12.7h0m0.1 0.4h0m0.4 11.1h0m0.1 0h0m0.1-9.5h0m0.1 14h0m0.4-14.3h0m0 11.2h0m0.1-1.7h0m0.1 0.3h0m0.2 2.5h0m0.6-2.2h0m0.1-14h0m0.1 13.7h0m0.4 2.4h0m0.1-12.6h0m0.2 9.5h0m0.1-11.2h0m0.1 14.7h0m0-12.4h0m0.3-0.3h0m0.4 10.3h0m0.1-12.3h0m0.3 2.4h0m0.2 0.2h0m0.1 11.3h0m0.5-2h0m0.1-0.4h0m0.1-0.2h0m0.1-10.4h0m0 11.3h0m0.3-10.1h0m0.3 15.4h0m0.2-3.8h0m0.2-10.7h0m0.2 10.5h0m0.1-11.3h0m0.3 14.7h0m0-5.4h0m0-0.1h0m0.2 0h0m0.1-9.4h0m0-1.1h0m0.4 11.8h0m0.2-12.7h0m0.1 0.3h0m0 0.2h0m0.6-1.2h0m0.3 16.2h0m0.1-14.9h0m0 0.8h0m0.6 10.9h0m0.1-10h0m0.1 0.5h0m0.6 8.7h0m0.6-11.1h0m0.3 1h0m0.2 1h0m0.1 10h0m0.1-10.6h0m0.1 11.2h0m0.3 0.7h0m0 0.2h0m0-10.8h0m0.2 12.6h0m1.5-4.1h0m0.4 0.5h0m0.2 0.2h0m0.1 2.3h0m0.2-13h0m0.1 0h0m0.3 1.3h0m0.3-1.7h0m0.1 10.5h0m0.3-8.4h0m0.1-1.2h0m0 12.3h0m0.1-12.9h0m0.4 0.6h0m0.4 11.1h0m0-0.8h0m0.6-0.3h0m0.2-11.5h0m1 13.7h0m0.2 2h0m0-14.3h0m0.1 11.6h0m0.2-11.5h0m0-0.8h0m0 12.4h0m0-12.9h0m0.1 12.9h0m0-0.7h0m0.2-11.3h0m0.6-0.4h0m0.8-1.5h0m0.2 2.8h0m0 13.9h0m0.2-14.9h0m0 10.9h0m0.5-12.7h0m0.2 1.6h0m0.1 11.9h0m0-10.3h0m0.2 8.7h0m0.1-0.1h0m0 3.6h0m0.4 1.1h0m0-4.5h0m0.1-10.4h0m0.4-1.3h0m0.1 2.9h0m0.2 13.7h0m0.6-5.1h0m0.1-9h0m0-2.4h0m0.1 11.3h0m0.1 7.2h0m0.2-6.7h0m0.2-11.1h0m0.2 12.9h0m0.1-12.7h0m0.3 16.7h0m0-4.8h0m0.1 0h0m0.2-0.5h0m0.4-0.3h0m0.2-9.2h0m0-0.1h0m0.1 9.2h0m0-12.1h0m0.6 13.8h0m0-11.9h0m0.3-1.8h0m0.1 0.9h0m0 10.6h0m0.1 2.3h0m0.2-10.5h0m0-0.2h0m0.1 11.5h0m0.2-13h0m0.7 11.2h0m0.2-13.6h0m0.1 2.5h0m0.1-3.3h0m0.4 3.9h0m0.5 9.9h0m0-9.3h0m0.1 10.1h0m0-1.2h0m0.2-10.3h0m0.1 1.3h0m0.1-2h0m0 11.2h0m0.6-11.1h0m0.1 1.1h0m1 12.6h0m0.6-11.5h0m0.4-1.2h0m0.4 10.3h0m0.1 1.9h0m0.4 0.9h0m0.3-3.4h0m0 0.2h0m0.6 1.4h0m0.2 1.9h0m0.2-13.8h0m0 11.4h0m0.1 0.5h0m0-10.2h0m0-2.8h0m0.1 15.1h0m0.1-16.4h0m0.1 15.5h0m0.1-14.1h0m0 13.9h0m0.1-14.2h0m0 0.8h0m0.5 0.1h0m0.1 14.1h0m0.1-1.9h0m0.1-9.8h0m0 8.1h0m0.7-8.7h0m0.8-1.6h0m0.1 11.9h0m0.8-0.5h0m0.4 1.8h0m0.1-1.9h0m0.4-10.4h0m0.2 0.1h0m0 1.2h0m0.1 11h0m0.1-11.6h0m0.1 0.4h0m0 0.2h0m0.1 9.4h0m0-13.3h0m0.2 13.8h0m0-10.1h0m0.3 10.5h0m0.1-14.5h0m1.1 13h0m0 1.5h0m0.1-10.1h0m0.1 9.1h0m0.9-0.6h0m0.3-9.1h0m0.3-2.5h0m0.1 2.9h0m0.3 8.1h0m0.3-9.9h0m0 11.1h0m0-0.4h0m0.1-14.3h0m1 15.4h0m0 1.2h0m0.1-11.7h0m0.6 9.2h0m0 1h0m0.3-13.7h0m0.1 3.2h0m0 9.7h0m0.2 1.9h0m0.1-1.5h0m0.2 2h0m0.2-11.2h0m0.8-1.8h0m0.1 1.6h0m0.4-1.9h0m0 12.5h0m0.1-11.6h0m0.3-0.8h0m0 1.5h0m0.2 8.7h0m0.1-9.9h0m0.2-0.7h0m0 1.9h0m0.1 0.1h0m0.3 12.5h0m0-15h0m0 12.6h0m0.4-0.9h0m0.2-0.2h0m0.3 0.4h0m0.4-10.8h0m0.7 11h0m0.1 0.1h0m0-9.7h0m0.4 0.1h0m0.5 8.8h0m0.2-12.1h0m0 12.2h0m0.2 3.4h0m0-14.8h0m0.2 11.9h0m0.2-13.3h0m0.3 1.1h0m0.3 12.9h0m0.8-10.7h0m0.4 0.6h0m0-0.9h0m0.4 11.3h0m0.4-1.6h0m0.1 2.5h0m0.1-13.4h0m0.1 0.5h0m0.5 10.6h0m0.1 0.1h0m0.1-11.2h0m0 12.3h0m0.5-11.9h0m0.3 0h0m0.2-2.2h0m0.2 2.5h0m0.2 15.9h0m0.2-14.3h0m0.1 8.8h0m0.1 1.7h0m0.1-2h0m0.3-10.3h0m0.1 10.2h0m0.1 0.5h0m0-9.9h0m0.2 12h0m0.7-12.3h0m0.1-2h0m0.4 2.8h0m0.1-0.1h0m0.6 8.8h0m0.2-9.3h0m0.3 0.7h0m0 11.1h0m0.3-11.1h0m0.3-1.6h0m0.6 1.3h0m0.3 8.9h0m0.1-10.7h0m0.1 13.4h0m0-0.2h0m0.7-12.1h0m0.1 9.4h0m0-9.9h0m0.6-2.3h0m0.3 12.1h0m0.1-11.8h0m0.1 2.7h0m0.3 11.6h0m0.1-0.6h0m0 1.2h0m0.1-0.1h0m0-11.9h0m0.1-1h0m0.1 1.6h0m0.1-2.3h0m0.3 13.3h0m0-10.9h0m0.1 12.1h0m0-14.7h0m0.2 11.2h0m0.1-11.2h0m0.6 13h0m0.1-2.1h0m0.6-12.4h0m0.2 2.9h0m0.6 9.3h0m0.1 2.2h0m0.2-11h0m0 10.3h0m0 1.1h0m0.2-13.3h0m0.2 12.4h0m0.5 1.3h0m0.2-12.6h0m0 1.1h0m0.7-0.5h0m0 10.4h0m0.2 2.9h0m0-2.8h0m0.1-0.2h0m0.4-0.1h0m0.1 2.1h0m0.2-13.3h0m0.3 0.9h0m0.1-0.2h0m0.2 10.4h0m0.2 0.2h0m0-0.5h0m0.1-9.6h0m0.2-1.8h0m0.5 12.3h0m0.4-14.1h0m0.2 13.2h0m0.1-9.1h0m0.2-3.9h0m0.2 3.8h0m0 10.5h0m0-11.2h0m0.2-1.6h0m0.2 12.5h0m0.4-10.3h0m0.1 9h0m0.1-0.3h0m0 0.3h0m0.1 0.7h0m0-0.8h0m0.1-8.5h0m0.3 11.2h0m0.1-15.6h0m0 15.4h0m0.2-11.6h0m0.1 11.8h0m0.2-2.7h0m0.4 2h0m0.1-2h0m0.5-11.6h0m0.5 1.9h0m0.1 9.4h0m0.1-9.2h0m0.4 9.2h0m0.1 1.7h0m0.1-0.5h0m0.2-10h0m0.1-0.8h0m0.2-0.5h0m0.2 12.4h0m1.1 0.9h0m0.2-1.4h0m0.3-10.1h0m0 9.2h0m0.7 1.1h0m0-0.8h0m0.5-9.4h0m0-0.3h0m0-1.4h0m0.1 0.3h0m0.2 0.2h0m0.3 10h0m0.1-9.3h0m0.2 9.5h0m0.1-9.4h0m0 13.9h0m0.2-5.2h0m0.8 0.1h0m0.2 0.8h0m0.3 3.8h0m0.5-12.9h0m0.4-4.2h0m0 1.7h0m0.2-0.5h0m0.3 3h0m0.1-0.4h0m0.1 11.8h0m0.3-13.9h0m0.3-1.1h0m0.2 1.3h0m0 1.8h0m0.2-1.4h0m0.2 11.3h0m0.1-1h0m0.5 1.7h0m0.4-10.6h0m0.1 12.1h0m0-12.4h0m0.4-0.5h0m0.6 9.7h0m0.1-9.7h0m0 9.3h0m0.3-8.8h0m0.8 11.9h0m0.2-0.2h0m0.1-2.7h0m0.1-0.1h0m0.2-13.6h0m0.2 4.6h0m0.1-0.2h0m0.2 10h0m0.3-10.9h0m0.2 10.4h0m0.3-12.1h0m0.4 14h0m0.4 0h0m0.5-11.2h0m0.1 0.7h0m0.2 8.6h0m0.6-10h0m0.4 0.1h0m0.2 9.9h0m0.8-11.4h0m0.1-0.4h0m0 13.2h0m0.1-11.1h0m0.2 0.8h0m0.2 8.7h0m0 4.4h0m0.2-13.9h0m0.1-0.3h0m0.2 10.8h0m0.2 3h0m0.2-3.9h0m0.1-8.5h0m0.2 9.1h0m0.6 0.3h0m0.6-0.6h0m0.9 3.2h0m0.2-2.1h0m0.1-10.9h0m2.2 10.3h0m0.1-10.2h0m0 1.1h0m0.5-1h0m0.5 0.2h0m0.3-0.7h0m0.3 14.3h0m0.3-4.1h0m0.2-11.7h0m0 0.5h0m0.3 0.8h0m0.2 10.7h0m0.6-9.2h0m0.1 8.4h0m0.7 1h0m0.5-10.1h0m0 0.7h0m0.1 10.5h0m0.5 0.1h0m0.1-14h0m0.1 2.9h0m0.1-2.5h0m0.1 1.1h0m0.2 10.1h0m0.1-9.2h0m0.1 9.6h0m0.3-8.9h0m0.2 10.2h0m0.2-10.3h0m0.2 0.5h0m0-1.5h0m0 1.5h0m0.6 9.1h0m0.1-0.5h0m0.2 1.8h0m0-2.2h0m0 1h0m0.3-9h0m0.3-1.5h0m0 13.4h0m0.3-16.9h0m0.4 15.6h0m0.8-1.2h0m0.9-12.9h0m0 1.8h0m0.2 13.2h0m0.1-0.3h0m0 0.5h0m0.2-3.7h0m0.1-12.2h0m0.2 12.6h0m0.1-12.8h0m0.4 12.7h0m0.1 2.9h0m0.3-11.2h0m0.2 9.1h0m0.2-11h0m0 11.8h0m0.2-12.4h0m0 0.5h0m0 12.1h0m0.4-1.9h0m0-9.5h0m0.1 11.1h0m0-10.3h0m0.2 0.3h0m0-1.6h0m0.1 10.2h0m0 1.6h0m0.2-10.6h0m0.2-0.6h0m0.2 11.9h0m0.2-11.6h0m0.1 10h0m0.1-9.3h0m0.1 8.7h0m0.5-9.2h0m0-1h0m0.7 1.6h0m0.2-1.5h0m0.5-0.7h0m0 14.8h0m0.4-14.2h0m0.5 0.7h0m0.3 9.2h0m0-9.8h0m0 12.6h0m0.4-1.4h0m0.4-11.5h0m0.6 0h0m0.1 10.5h0m0 4h0m0.2 2.2h0m0.2-3.5h0m0-2.9h0m0.1 1.1h0m0 2h0m0.2-2h0m0.5 1.7h0m0.2-14.2h0m0 14.1h0m0.3-2.6h0m0.3-10.2h0m0.2-1.6h0m0.1 11.8h0m0.4-12.8h0m0.2 4.2h0m0.2-1.4h0m0.1 11.4h0m0.1-0.9h0m0-1h0m0.3 0.2h0m0.6-0.1h0m0.1 1.7h0m0.2-11.6h0m0 1.2h0m0-0.6h0m0.2 13.2h0m0.6-0.7h0m0.1-11.7h0m0.1 9.6h0m0.2-9.9h0m0.5-5.1h0m0.2 15.2h0m0.3-9.6h0m0 11.6h0m0-14.1h0m0.1-0.8h0m0.1 2.5h0m0.1 10.1h0m0.2-9.9h0m0.4 9.4h0m0.2-8.8h0m0.3-0.4h0m0.3 0.2h0m0.2-1.4h0m0.1-5.3h0m0 15.3h0m0.1-0.1h0m0.2 0.5h0m0.1 5h0m0-19.7h0m0.3 15.5h0m0.1-11.6h0m0.2 1.8h0m0.8 13.9h0m0.2-18.4h0m0.2 13.3h0m0.1-10.9h0m0.8 2h0m1.2-0.2h0m0.1 9h0m0.6-9.8h0m0.6 11.5h0m0.1-0.6h0m0.6-10.2h0m0 9h0m0.3 1.7h0m0.1-13.7h0m0.1 3.5h0m0.2-3.6h0m0.2 1.8h0m0.2 11.1h0m0.2-9.3h0m1.3-1.5h0m0.1-1.1h0m0.1 14.3h0m0.3-3.7h0m0 2h0m0.5 0.7h0m0.4-14.4h0m0.3 1.8h0m0.1 2h0m0.2-1.1h0m0.3-4.1h0m0.3 4.4h0m0 0.5h0m0.2-3h0m0.7 2.2h0m0.4 0.7h0m0.6 0h0m0.4 8.8h0m0.3-10.3h0m0 11.8h0m0.1-1.8h0m0.2-9.2h0m0.3 1h0m1.2-0.3h0m0-0.5h0m0.2 10.5h0m0.3-1.2h0m0-0.4h0m0.1-10.2h0m0 1.2h0m0.1 11.2h0m0.2-10.3h0m0.1-2.3h0m0.2 10.8h0m0.1-11.7h0m1 1.7h0m0.3 10.5h0m0.5-9.8h0m0.2 10.7h0m0 0.7h0m0.3-11.3h0m0-3.6h0m0.1 13.4h0m0-11.2h0m0.1 12.2h0m0 0.3h0m0-13.4h0m0.1 11.2h0m0.4 1.5h0m0.2 0.9h0m0.2-10.8h0m0.1 14.8h0m0.2-3.2h0m0.4-11.7h0m0.9-1h0m0.1 10.3h0m0-9.6h0m0.2-1.2h0m0.7 0.5h0m0.3-2.8h0m0.1 1.6h0m0 0.5h0m0.5 11.9h0m0.3 3.3h0m0.4-15.9h0m0.5-1.7h0m0.6 1.1h0m0.1 18h0m0.1-4.8h0m0.7-11.5h0m0 13.6h0m0.2-2.8h0m0.7-0.3h0m0.4 0.7h0m0-1.5h0m0.1 0.5h0m0.1-0.2h0m0.1 1.3h0m0.7 0.1h0m0-10.2h0m0.1 9.4h0m0.2-11.5h0m0.4 12.2h0m0.3-0.3h0m0.1 0h0m0.2-9.6h0m0 10.4h0m0.2-12.9h0m0.2 1h0m0.7-2.6h0m0.1 3h0m0.1 0.4h0m0.3-0.6h0m0 10.7h0m0.3 0.8h0m0.2-0.1h0m0.1-10.5h0m0.2 11.8h0m0-14.7h0m0.1-0.3h0m0.1 11.8h0m0.3 0.2h0m0.1 0.2h0m0.4-8.4h0m0.3-1.6h0m0.1 1.6h0m0.1-2h0m0.2 0.6h0m0-4.6h0m0 3.9h0m1.2 13.6h0m0.2-2h0m0 1.9h0m0-3.2h0m0-8.9h0m0.1 10.4h0m0.3-10h0m0-4h0m0.6 4.3h0m0-5.1h0m0.1 4.3h0m0.1 0.4h0m0 8.8h0m0.3 1.8h0m0.1-10.3h0m0.1 9.4h0m0.2-0.1h0m0.2 1.4h0m0.4-1.8h0m0.2-10.5h0m0 0.7h0m0.1 9h0m0.1 4.2h0m0.2-12.8h0m0.2-1.7h0m0.1 12.8h0m0.2-1.3h0m0.3-11.5h0m1.1 12.4h0m0.5 0.2h0m0.4-0.7h0m0.2 3.3h0m0.1-13.2h0m0.3 8.8h0m0.2-8.8h0m0.2-3.2h0m0.3 2.4h0m0.2 9.1h0m0 3.8h0m0-2.1h0m0.4 2.5h0m0-12.4h0m0.2-0.2h0m1-4.1h0m0.8 1h0m0.1 2.2h0m0 0.5h0m0.2-1.3h0m0 1.4h0m0.1-1.9h0m0.1 0h0m0 1.3h0m0.2 10.6h0m0 3.1h0m0-3.4h0m0.1-11.3h0m0 12.5h0m0.1-10.5h0m0.3-3.1h0m0 11.9h0m0-8.4h0m0.1 10h0m0.2-11.7h0m0.4 1.3h0m0.5-1.7h0m0.1 1.6h0m0.1 9.4h0m0.2 1.6h0m0.1-13.9h0m0 2.4h0m0.1 10.6h0m0-11.3h0m0.3-2.1h0m0.2 2.6h0m0.1 15.6h0m0.5-16h0m0.2-2.1h0m0.1 12.7h0m0 0.3h0m0.1-9.6h0m0 9.5h0m0.4 0.8h0m0.2-13.1h0m0.2 1.3h0m0.4 1.1h0m0-1.4h0m0 13.2h0m0.2-0.3h0m0.1-11.2h0m0.1 8.9h0m0.2 2.6h0m0.3-2.9h0m0.1 0.9h0m0.3-10.8h0m0.1 9.8h0m0-9.3h0m0.1 12.6h0m0.3-2.2h0m0.7-11.3h0m0.1 10.2h0m0-9.7h0m0.1 11.9h0m0-10.5h0m0.3 8.4h0m0.5-10.7h0m0-2h0m0.1 4h0m0-0.4h0m0.4 0.3h0m0.1-6.4h0m0.2 16.6h0m0.2 1.3h0m0.1-14.9h0m0.5 12.4h0m0.2 1.4h0m0.2 3.4h0m0.3-14.4h0m0 0.1h0m0.5 13.3h0m0.1-14.3h0m1.2-0.4h0m0.2 1.7h0m0.3 0.7h0m0.4 13.2h0m0-4.8h0m0.3 2.6h0m0.5-2.5h0m0.3-10h0m0.1 10.3h0m0.1-9h0m0.4 9.9h0m0.3 0.9h0m0.3-10.3h0m0.1 9.9h0m0.1-11h0m0.1 11.8h0m0.3 0h0m0.2-10.9h0m0.1-1.4h0m0-2.4h0m0.4 2.8h0m0.2 12.5h0m0.1-13.1h0m0 1.4h0m0-1.8h0m0.1 1.1h0m0.7-2.2h0m0.3 1.5h0m0.4 14.2h0m0.6-4.4h0m0.3-10.1h0m0.2-0.6h0m0 2.4h0m0.3-1h0m0.2-0.1h0m0.2-0.7h0m0.2 0h0m0.9-2.7h0m0.1 3.2h0m0.6-0.7h0m0.2 1.4h0m0.1 11.2h0m0.2 0.5h0m0.1-11.3h0m0-0.2h0" stroke="#000" stroke-width="3.7" stroke-linecap="round" fill="none"/>
<path d="M1154.0 88.8h0m0.2 10.6h0m0-5h0m0.1 0.5h0m0-3.8h0m0.1 4.9h0m0-8.1h0m0 5h0m0.3 2.1h0m0.2-2.9h0m0.1-0.8h0m0.1-1h0m0.1 7.9h0m0.2-4h0m0 1.7h0m0.1 0.7h0m0.2-3.5h0m0.2 1.3h0m0.1 0.2h0m0-5.4h0m0 9.5h0m0.2-14.9h0m0 9.4h0m0-0.9h0m0.1-5h0m0.1 3.3h0m0.1 0.4h0m0.3 0.3h0m0.1 0.5h0m0.1 6.3h0m0.1-12.7h0m0.1 8.5h0m0.2-6.1h0m0 3.3h0m0.1-9.2h0m0 2.2h0m0.3-3.2h0m0.1 6.6h0m0 8.2h0m0.1-13.2h0m0.1 3.8h0m0.1 2.3h0m0.1 3.2h0m0-7.4h0m0-1.6h0m0.2 1.3h0m0-2.7h0m0.1 8.3h0m0.2-4.1h0m0.1 0.7h0m0.1 1.7h0m0.1 1.1h0m0 4.2h0m0-3.9h0m0 7.7h0m0.1-5.6h0m0.2-7.7h0m0.1 10.8h0m0-11.7h0m0.2 10.6h0m0.1 1.1h0m0.2-3.3h0m0.3 0.9h0m0.1-2.5h0m0.1 4.2h0m0.1-1.8h0m0.1 0.2h0m0 2.8h0m0.1-11.7h0m0 7.4h0m0.1-1.3h0m0.3 8.8h0m0.2-9.3h0m0.2 1.9h0m0.1 0.4h0m0.2 1.7h0m0-5.1h0m0.1 0.1h0m0 0.3h0m0.1-1.1h0m0.4 2.2h0m0.2-5.1h0m0.1 1.6h0m0-3.6h0m0.1-0.1h0m0.2 3.5h0m0-4.8h0m0.1 4.2h0m0.2-7.7h0m0 2.8h0m0.4-1.1h0m0.1 0.8h0m0.4-1h0m0-5.6h0m0.3 4.3h0m0-3.7h0m0.1 5.8h0m0.1-1.3h0m0.1 2.2h0m0.1-5.3h0m0.1 4.7h0m0.2 4.9h0m0.5-0.5h0m0.2-0.5h0m0 6.3h0m0.1-7.6h0m0.3 2.9h0m0.1 0.9h0m0 0.5h0m0-2.9h0m0 3.7h0m0.3 3.4h0m0.1-4.4h0m0.1-2h0m0 1.3h0m0 2.6h0m0.1-7.9h0m0 2h0m0.1 4.7h0m0-1.8h0m0.1 0h0m0.1-0.7h0m0.1 9.3h0m0.2-11.7h0m0 0.3h0m0.1 10.1h0m0.5-6.5h0m0.1 7h0m0-10.1h0m0-0.5h0m0.1 0.3h0m0.1 2.8h0m0 1.2h0m0.1 0.1h0m0.1-2.5h0m0.1 0.4h0m0.1-8.1h0m0 7.7h0m0.1-2.1h0m0.1 6.6h0m0-3h0m0.1-4.5h0m0.1-0.1h0m0.1 1.5h0m0 3h0m0.3-6.9h0m0.3 5.3h0m0.1 0.2h0m0.1-6.2h0m0.1 8.5h0m0-1.9h0m0.1-5.8h0m0.2-1.3h0m0 6.7h0m0.1 0.3h0m0.1-3h0m0.1 5.8h0m0.1-6.4h0m0.1 0.8h0m0.1 2.8h0m0.2 0.1h0m0.7 5.5h0m0.2-4h0m0 4.3h0m0.1 0h0m0.6-2h0m0.1-0.5h0m0.1 2h0m0.1-2.1h0m0.5 2.6h0m0-4h0m0.1-1.2h0m0.5 6.5h0m0.1 0.1h0m0.1-7.4h0m0 8.4h0m0.1-6.6h0m0 6.2h0m0-8.7h0m0.3 4.3h0m0.1 1.2h0m0.1-5.7h0m0.1 6.2h0m0-6h0m0.1 7.1h0m0.2-3.8h0m0-3.4h0m0.1 4h0m0-0.7h0m0-0.5h0m0.2-2.7h0m0.2-4.9h0m0.1 2.3h0m0.3 3.1h0m0.1-2h0m0.1 7.1h0m0-8.3h0m0.4 2.8h0m0.1 4.6h0m0.2 8.2h0m0-4.9h0m0-8h0m0.1 1.7h0m0.4-1.1h0m0.3 7.6h0m0.3-3h0m0.4 0.9h0m0-3.7h0m0 13.1h0m0.1-4.1h0m0-4.9h0m0-3.2h0m0 3.9h0m0.1 10.2h0m0-9.9h0m0.2 1.7h0m0-1.5h0m0.1 7.2h0m0.1-9.6h0m0.5-6.3h0m0.2 7h0m0.1-2.2h0m0 10.1h0m0.1-13.2h0m0.5 2.8h0m0.1-0.6h0m0 1.6h0m0.2 3.5h0m0-10.4h0m0 1.8h0m0 3.2h0m0 1.8h0m0.2-1.2h0m0.1 2.2h0m0-4.9h0m0.1-3.3h0m0.1-0.4h0m0.1-1.8h0m0 7.3h0m0.1-4.5h0m0.1-5.3h0m0.1 4.3h0m0.4-3.6h0m0 1.5h0m0.1 3.7h0m0.1-2.4h0m0.1 2.4h0m0 7.5h0m0.1-12.4h0m0.2 7.4h0m0-4.8h0m0 6.3h0m0.4 0.6h0m0.1 4.4h0m0-5h0m0 0.6h0m0.2-0.1h0m0.3-1.4h0m0 3.1h0m0.2-1.7h0m0.1 2.6h0m0.1 2.1h0m0-4.6h0m0 10.9h0m0.1-15h0m0 1.6h0m0.2 4.1h0m0.2 2.8h0m0.1 2.5h0m0.1-4.7h0m0.1 1h0m0.1-2.5h0m0.1-2.3h0m0.1-0.3h0m0 6.3h0m0-3.9h0m0.2 1.5h0m0.1-0.7h0m0.1 4.6h0m0-4.7h0m0.2 0.9h0m0.1 1.9h0m0.1-2.8h0m0 5.1h0m0.3-8.7h0m0 0.4h0m0 5.7h0m0.1-7.8h0m0.1 7.8h0m0.2-2.9h0m0-5.9h0m0.4-1.6h0m0.2 5.2h0m0.1-0.4h0m0 2.3h0m0.2-7.1h0m0 0.7h0m0 2.2h0m0.1 1.1h0m0-6.1h0m0 0.4h0m0.1 2.7h0m0-2.4h0m0.1 6.9h0m0.1-10h0m0.1 7.6h0m0.1-3h0m0.2 5.1h0m0 1.3h0m0.2-1.2h0m0 0.6h0m0-2.6h0m0.1-5.6h0m0.1 2.6h0m0.1 6.7h0m0.2-4.4h0m0.5 12.8h0m0.1-10.9h0m0 6.1h0m0 1.7h0m0-0.8h0m0.1-6h0m0 3.5h0m0.1 0.6h0m0.2-0.9h0m0-0.5h0m0.2 2.6h0m0 2.2h0m0.1 3.7h0m0.1-4.5h0m0.1 2.7h0m0.1-3h0m0-4.8h0m0.1-0.4h0m0.1 3.4h0m0.1 0.9h0m0 0.7h0m0.1-3.4h0m0.2 3.4h0m0.2 2.4h0m0.1-1.3h0m0.1-4.3h0m0 2.6h0m0-4.1h0m0.1 1h0m0 2.9h0m0-2.4h0m0.1 0.6h0m0 0.2h0m0 2.3h0m0.3-5h0m0.1-1.5h0m0.2 1.1h0m0.2-0.5h0m0.1-0.5h0m0.2-3.4h0m0.4 2.1h0m0.1 2.5h0m0-0.6h0m0 1.9h0m0.1-6.8h0m0 1.9h0m0.3-0.3h0m0.1-2.8h0m0.3 5.8h0m0.1-2h0m0.1 4.2h0m0-6.4h0m0.3 4.4h0m0.1 2.6h0m0.3 2.4h0m0.1-7h0m0.1 6.3h0m0.1-4.4h0m0.4 5.5h0m0 3.4h0m0.1-7.1h0m0.3 0.4h0m0.2 7.3h0m0.1-5.4h0m0.3 3.2h0m0.1-3.2h0m0.1 3.5h0m0.1-2.7h0m0.3 7.2h0m0-10h0m0.2-0.8h0m0-0.5h0m0.2 2.3h0m0-3.3h0m0.2 2.6h0m0.4-7.6h0m0.3 4.9h0m0 0.1h0m0.4-6h0m0 2.7h0m0.2 1.1h0m0.4-5.8h0m0.2 8.4h0m0 3.7h0m0.1-7.2h0m0.1 0.5h0m0.1 2h0m0-3.2h0m0 3.8h0m0 1.6h0m0-1.9h0m0.1-2.9h0m0.1 1.8h0m0 0.9h0m0.1 0.4h0m0.1 1.4h0m0-5.1h0m0.1 5.5h0m0.1-4.1h0m0 1.8h0m0.1 7.9h0m0-10.7h0m0.1 3.7h0m0 1.6h0m0.2-1.3h0m0.2 0.3h0m0.1 3.1h0m0.2-0.5h0m0.1-3.6h0m0 2.3h0m0.1 1.4h0m0.1 4.2h0m0.4-7.4h0m0.3 2h0m0.1 5.8h0m0-8.1h0m0.2 3.2h0m0.3-1.7h0m0.1 5.3h0m0-7.2h0m0 3.1h0m0.2-3.1h0m0.1 3.9h0m0.2 0.2h0m0.1-2.3h0m0.4-4h0m0.1-7.1h0m0.3 4.1h0m0.3 5.9h0m0.1-8.4h0m0.1 8.2h0m0.4-8.3h0m0.4-6.3h0m0 14.3h0m0.1-8.4h0m0 8.9h0m0.1-3.9h0m0.3-5.2h0m0 0.9h0m0.1-4h0m0.1 9h0m0.1-3.5h0m0.1 8.8h0m0-2.4h0m0.1 0.1h0m0.3 8.5h0m0-8.2h0m0.1 0.5h0m0.1-2.8h0m0.3 4.6h0m0.1-3.1h0m0 5h0m0.1-4.1h0m0-4.8h0m0.2-1.6h0m0 7.5h0m0.1-1.1h0m0 9.8h0m0-8.5h0m0.3 3.5h0m0.1-3.8h0m0-3.3h0m0 5.6h0m0-4.2h0m0.1 3.4h0m0 2.4h0m0.1 2.3h0m0.1-3.4h0m0-8.5h0m0.1 1.1h0m0.3 2.1h0m0.1 2h0m0 0.6h0m0.1-3.6h0m0 1.8h0m0.1 3.9h0m0.3-3.6h0m0-0.2h0m0-0.3h0m0.1-5.5h0m0 11.1h0m0-11.9h0m0.2 0.3h0m0.1 3.2h0m0 1.1h0m0-1.4h0m0-1.6h0m0.1 1h0m0.3-1.3h0m0.2 4.3h0m0-1.4h0m0.2-4.4h0m0.2 0.6h0m0.2 6.2h0m0.1 1.1h0m0-5.8h0m0.1-1.3h0m0.1 8.3h0m0-5.7h0m0.1-0.2h0m0.3-3.1h0m0 3.5h0m0.1-1h0m0.1-3.3h0m0.1 1h0m0.1 4h0m0.3 1h0m0.1 0.9h0m0.1 1.3h0m0.2-0.7h0m0.1 1h0m0.4 0.2h0m0.1-2.8h0m0.2 3.7h0m0 3.5h0m0.4 0.9h0m0.2-0.9h0m0.2-0.6h0m0.1-2.4h0m0-2.4h0m0.1 0.2h0m0.1 1.1h0m0.2 1.8h0m0.1-5.2h0m0.3 2h0m0.1-1h0m0.1 0.6h0m0.1-0.6h0m0-0.1h0m0.1 0.1h0m0-2.4h0m0.1-0.1h0m0.1 2h0m0.1-1.3h0m0.1 1.7h0m0.3-1.4h0m0 2.9h0m0.1-3.6h0m0-1.6h0m0.1 1.6h0m0 2.5h0m0.1-1.2h0m0-3.1h0m0 3.6h0" stroke="#000" stroke-width="3.7" stroke-linecap="round" fill="none"/>
<path d="M1257.4 85.7h0m0 5.3h0m0-9.4h0m0.1 7.5h0m0.1 1.2h0m0-4.6h0m0.1-0.6h0m0.1-1.5h0m0.1-0.2h0m0.2-2.1h0m0.2 2.9h0m0 1.3h0m0.3-2.2h0m0.1-1.1h0m0.1 9.3h0m0.6-17h0m0 6.8h0m0.3-8.9h0m0 7.5h0m0.1-0.1h0m0-1.2h0m0.2 1.4h0m0.2-2.3h0m0.1 4.8h0m0 1.3h0m0.1-6.7h0m0.1 3.6h0m0.1 2.6h0m0-3.3h0m0.1 1.4h0m0.2-0.3h0m0.1-2h0m0.1 6.3h0m0-10.1h0m0.2 7.6h0m0.1-4.3h0m0-2h0m0 6.5h0m0.2-6.8h0m0 13h0m0.1 1.3h0m0.7-4.7h0m0.1-2.3h0m0.1 7.5h0m0.4-1.4h0m0-1.7h0m0-1.3h0m0.1 1h0m0.2 3.5h0m0.2 2.4h0m0.4-4.1h0m0.1-0.1h0m0.2-4.5h0m0 6.4h0m0.1-1.9h0m0-3.8h0m0.3 4.7h0m0.5-8.6h0m0 3.1h0m0.1-2.4h0m0.2 4.3h0m0 0.6h0m0-5.4h0m0.1 1.8h0m0.1 8.1h0m0.1-5.8h0m0.1-1.5h0m0-2.7h0m0-1.3h0m0.1 9.6h0m0-6.4h0m0.1 0.1h0m0-4.4h0m0.1 6.9h0m0-1.4h0m0-4.5h0m0.2 0.1h0m0 3.1h0m0 1.6h0m0.1-7.6h0m0 7.8h0m0.1-5.1h0m0.2-1.1h0m0.1 1.6h0m0 0.7h0m0 5.4h0m0.1 1.1h0m0-2.1h0m0.2 1.5h0m0-12.3h0m0 7.8h0m0-2.8h0m0.1 3.1h0m0.1 2.1h0m0.1 3.4h0m0-5.2h0m0.2-1.9h0m0 4.8h0m0.2-0.4h0m0 3.6h0m0.1-4.1h0m0.2 0.9h0m0-3.7h0m0.2-1h0m0.1 1.7h0m0.1 7h0m0.1-5.8h0m0 0.2h0m0 2.9h0m0.2 0.7h0m0.1 0.4h0m0.3 2h0m0-0.4h0m0.5 2h0m0-4.5h0m0.1 3.7h0m0.2-8.6h0m0.3 5.2h0m0-0.5h0m0.1 4.8h0m0.1-2.6h0m0 0.2h0m0.4-0.3h0m0.1-6.7h0m0 4.7h0m0.1 0.2h0m0-0.5h0m0.1-4.6h0m0 4.4h0m0.1-3.5h0m0.2 3h0m0.1 0.5h0m0.6-9.7h0m0 4.9h0m0.2-4.5h0m0 4.2h0m0 5.1h0m0.1-6.6h0m0.1 0.3h0m0.1-0.2h0m0.1 0h0m0 2.4h0m0 4h0m0-10.3h0m0.1 9.7h0m0.1-6.5h0m0 1.3h0m0-3.1h0m0.3-0.7h0m0.1 6.1h0m0 0.6h0m0.1-2.2h0m0-0.6h0m0.2-3h0m0 0.5h0m0.2 6h0m0 1.9h0m0.2 5.8h0m0-15.4h0m0 10.2h0m0-4.9h0m0.1 3.2h0m0.1-2.4h0m0.1 6.6h0m0.1-7.9h0m0 0.9h0m0-3.9h0m0.1 9.8h0m0.1-8h0m0 0.9h0m0.1 0.5h0m0 10.2h0m0.1-6.7h0m0-6.1h0m0 3.2h0m0.1-3.6h0m0 8h0m0-0.6h0m0.1 10.1h0m0-14h0m0.2 5h0m0-5.1h0m0.3 5.6h0m0.1-2h0m0 0.5h0m0.1 5.6h0m0.1-5.2h0m0-4h0m0.1-0.6h0m0.1-2.4h0m0.3-0.8h0m0.1 15.6h0m0-2.1h0m0-3.1h0m0.2 4.4h0m0-10.3h0m0-0.1h0m0.1 1.6h0m0.3-4.5h0m0 4.2h0m0.1 10.7h0m0-15.5h0m0.2 6.4h0m0.1-7.5h0m0.4 12.4h0m0-9.7h0m0.1 6.6h0m0.2-8h0m0.2 6.3h0m0.3-4.1h0m0 2.6h0m0.1 0.6h0m0-10.8h0m0.5-2.9h0m0 7.8h0m0.2 0h0m0.3-0.3h0m0.1-4.1h0m0.3 11.9h0m0.2-0.2h0m0 4.2h0m0.1-8.2h0m0.2-2.4h0m0.1 4h0m0.1 7.5h0m0.1 0.9h0m0.3-3.5h0m0-2.4h0m0.1 4.7h0m0.1-3.1h0m0.1 5.9h0m0-8.1h0m0.2 11.1h0m0.1-1.2h0m0-11.8h0m0 11.9h0m0.1-3.6h0m0.1 3.7h0m0-0.5h0m0.1-3.6h0m0.4-0.4h0m0.1 1.2h0m0.1-1.8h0m0.2-1.2h0m0 2.5h0m0.2 0h0m0.3-9.6h0m0.1 0.7h0m0.3 4.9h0m0-0.2h0m0.3-4.4h0m0.7 2.4h0m0.2-4.4h0m0 2.1h0m0.1 2.6h0m0.1-2.5h0m0.1 0.8h0m0-4.9h0m0.2 8.1h0m0-6.1h0m0.1-0.1h0m0.1 5.3h0m0 1.1h0m0.1 3.6h0m0.2-6.8h0m0-1.7h0m0.1 2.5h0m0-2.7h0m0.4-0.6h0m0.1-0.2h0m0-0.8h0m0.4 8.4h0m0-3.9h0m0 6h0m0.1-1.7h0m0-1.8h0m0 1.9h0m0.2-1.9h0m0.1 8.7h0m0.3-2.4h0m0-2.8h0m0.2-4h0m0 0h0m0-3.1h0m0.1 8.4h0m0.1-2.8h0m0.2-1.5h0m0.1 0.3h0m0.1-0.6h0m0 0.5h0m0.1 3.9h0m0.1-3.2h0m0.1-1.6h0m0 2h0m0 7.3h0m0.1-11h0m0 9.2h0m0.1-5.5h0m0.2-2.9h0m0-5.2h0m0.2 3.2h0m0.1 1h0m0.1 5.7h0m0-0.4h0m0-6h0m0.1-1h0m0.2 1h0m0 3.2h0m0-3.2h0m0.2 0.7h0m0 0.4h0m0.7 0.4h0m0.1-6.3h0m0.2 6.7h0m0.1-4h0m0.1 4.5h0m0-7.3h0m0.2 2.2h0m0.2-4.7h0m0.1 4.8h0m0.1-0.6h0m0-0.2h0m0.1-3.8h0m0.2 4.9h0m0.1 4.5h0m0.1-1.7h0m0-2.5h0m0.1-3.3h0m0.1 2.4h0m0 10h0m0-9.3h0m0.4 4.2h0m0.5 1.9h0m0 1.5h0m0.1-5h0m0-2.4h0m0 1.6h0m0.1 6.9h0m0.1 0.6h0m0.2 1.1h0m0 0.2h0m0.1 2.5h0m0-9h0m0.1 5.7h0m0 3h0m0.2-5h0m0.2-3.9h0m0.1 2.8h0m0-2.8h0m0.1 3.2h0m0.1-1h0m0.2-5.8h0m0.1 9.9h0m0.1-2.8h0m0.5-4h0m0.1-3.1h0m0 2.1h0m0-3.2h0m0.1-1.7h0m0.2 5.1h0m0.4 0.1h0m0.2 1.5h0m0-3.2h0m0.1-1.6h0m0-1.9h0m0.1 6.2h0m0.2-8.2h0m0 4.8h0m0.2 1.6h0m0.3-2.7h0m0.3-1.7h0m0-0.5h0m0.3-0.3h0m0.2 8.3h0m0.2-3.2h0m0.4-5.6h0m0.2 8.3h0m0.5-0.4h0m0-0.4h0m0-0.4h0m0.1 1.1h0m0-0.2h0m0.2-0.7h0m0.2 4.7h0m0-3.7h0m0-0.4h0m0.2 0.5h0m0.2 1.4h0m0 1.5h0m0.1 4.1h0m0.2-9.3h0m0 1.1h0m0 3.2h0m0.8-1.6h0m0-1.7h0m0-0.8h0m0.2-3.8h0m0.3-2.9h0m0 4.7h0m0-0.7h0m0.1 2.9h0m0.1 1.6h0m0-7.2h0m0.2 2.6h0m0.1-2.8h0m0 3.3h0m0.1-5.7h0m0.1 2.4h0m0.1 0.3h0m0.3-7.2h0m0.2 6.9h0m0-1.2h0m0 6.4h0m0.1-9.1h0m0 2.6h0m0.1-0.8h0m0.3 3.2h0m0.1 4.7h0m0.2-7.9h0m0-1.2h0" stroke="#000" stroke-width="3.7" stroke-linecap="round" fill="none"/>
</g>
<path d="M167.5 147.3h0m37-15.2h0m73.6-1.6h0m13.1 0h0m104.3-23.2h0m9.8-1.8h0m53.9 1h0m16.3 0h0m26.5 24h0m10 0h0m113.3-22.5h0m56-0.7h0m28 25.9h0m31.2 28.3h0m42.7-31h0m114.1-23.2h0m4 23.2h0m9.9 10.7h0m8-8h0m18.1-27.2h0m2.7 0h0m5.3 1.3h0m140-1.3h0m-1.3 25.3h0m75.3-26.8h0m6.1-37.1h0m1 4h0m111.2-2.4h0m2.4 0.6h0m6.4 0.8h0m-1007.2 219.6h0m466-18h0" stroke="#ffa500" stroke-width="3.7" stroke-linecap="round" fill="none"/>
<path d="M105.5 153.1H1361" stroke="#008000" stroke-width="2.1"/>
<path d="M162.0 321.5V35.5" stroke="#800080" stroke-width="2.08" stroke-dasharray="2.08 3.452"/>
<path d="M1149.0 321.5V35.5" stroke="#800080" stroke-width="2.08" stroke-dasharray="2.08 3.452"/>
<path d="M1303.0 321.5V35.5" stroke="#800080" stroke-width="2.08" stroke-dasharray="2.08 3.452"/>
<text x="654.73" y="311.90" font-size="14.50" text-anchor="middle" textLength="43.47" lengthAdjust="spacingAndGlyphs">57238</text>
<text x="1225.45" y="291.90" font-size="14.50" text-anchor="middle" textLength="43.30" lengthAdjust="spacingAndGlyphs">43385</text>
<g clip-path="url(#c2)">
<rect x="167.5" y="522.50" width="982.5" height="18.00" fill="#000"/>
<path d="M167.0 509.1h0m0.3 11.4h0m0.2-4.9h0m0.3 29.8h0m0.5-23.6h0m0.3-0.6h0m0.1-4.2h0m0.1 23.6h0m0-0.1h0m0.1-19.1h0m0.1-5.1h0m0.2 2.4h0m0 23.1h0m0-19.5h0m0.2 23h0m0-2h0m0.6-23.6h0m0.3 0.1h0m0.1-2.9h0m0.1 5.2h0m0.3-3.1h0m0.3 26.5h0m0.4 1.3h0m0.1-5.8h0m0.3-20.4h0m0 23.3h0m0 0.5h0m0.3 2.1h0m0.3-29.4h0m0 0h0m0.5 26.8h0m0.7-28.3h0m0.3 24.8h0m0.5-23.2h0m0.5 31.2h0m0.2-28.8h0m0.3 21.1h0m0.2 1h0m0.3-20.2h0m0 19h0m0.1 2h0m0.2-22.3h0m0.2 1.1h0m0.5 0.7h0m0.2-0.5h0m0.1 20.1h0m0-23.7h0m0.3-0.8h0m0.2 27.8h0m0 6.6h0m0.1-7.9h0m0.6-0.2h0m0.2-0.5h0m0.9-27.4h0m0 2.4h0m0.2 28.2h0m0.3-23.9h0m0.5-0.4h0m0.2 22.6h0m0.1-22.4h0m0-0.3h0m0.2 26.4h0m0.1-27.6h0m0 0.7h0m0.1-5.7h0m0.3 27.6h0m0.3-21.5h0m0 24.4h0m0.2-24h0m0.3-2.7h0m0.3 23.5h0m0-1.9h0m0.5 12.9h0m0.3-35.2h0m0 21.8h0m0 6.5h0m0.4-5.1h0m0.1-28.6h0m0 6.3h0m0 1.8h0m0-0.7h0m0.2 23.3h0m0-32.9h0m0 34.3h0m0.2-2.1h0m0.1-1h0m0-26.8h0m0.2-0.7h0m0 31.8h0m0.2-0.7h0m0.3-45h0m0.2 40.1h0m0.6-20.7h0m0 25.3h0m0.1 2.2h0m0.2-28.4h0m0.3 2.1h0m0 21.6h0m0 3.4h0m0.6-28.8h0m0 33h0m0.1-10h0m0 0.1h0m0.3 0.5h0m0.1 11h0m0.2-31.6h0m0 20.9h0m0.1-23h0m0.2 3h0m0.5-6.9h0m0.5 26.7h0m0.3 3h0m0.1-22.2h0m0.4 27.1h0m0.1-30.3h0m0 22.8h0m0.2-1.3h0m0.2-24.8h0m0.2 3.7h0m0.1 30h0m0.1-33.9h0m0.1 6.6h0m0-9.1h0m0.2 9h0m0-6h0m0.1 28.8h0m0.1-25h0m0.5 0.3h0m0.4 20.2h0m0 2.3h0m0.1 5.1h0m0.1-26.2h0m0.1 23.8h0m0.6-2.6h0m0.2-22.5h0m0.2-5h0m0.1 29.3h0m0 4.3h0m0.2-7h0m0.3 1.5h0m1.3-22.6h0m0.3 20.8h0m0.6-22.2h0m0.4 28.6h0m0.1-5.9h0m0.1 4.6h0m0.1-3.3h0m0-28.9h0m0.4 7.7h0m0.3 23.7h0m0.3-1.9h0m0.1 3.1h0m0.9 0.8h0m0.1-27h0m0 29.9h0m0.1-6.9h0m0.3-29.8h0m0 36.1h0m0.1-37.5h0m0.1 28.4h0m0.2 5.5h0m0.1-0.1h0m0.1-5.6h0m0-29h0m0.6 31.4h0m0.2-21.4h0m0 20.3h0m0.6-20.8h0m0.1 23.3h0m0.2-26.6h0m0.3 2.3h0m0.6 1.3h0m0.5-3.9h0m0.4 22.8h0m0-22.9h0m0.1 2.7h0m0.2-6.7h0m0.1 28.9h0m0.4-23.5h0m0-6.2h0m0.1 30.6h0m0.2-1.6h0m0-22.7h0m0.1 22.3h0m0.6-24.9h0m0.1 5.2h0m0.1-2.5h0m0.1 22.6h0m0 5.6h0m0-4.4h0m0.8-2.8h0m0.3-28.4h0m0.4 4.8h0m0 24.3h0m0.5-21.9h0m0.5-2.1h0m0.5 24.2h0m0.6-0.6h0m0.1 7.6h0m0.3-27h0m0.1-1.7h0m0.7 29.8h0m0.1-27.9h0m0.1 23.1h0m0-22.9h0m0.6 28.9h0m0.3-28.9h0m0.5 26.5h0m0.1-34.3h0m0.1 5.7h0m0.1-4.8h0m0.4 6h0m0.6-0.4h0m0.5-2.2h0m0.1-0.5h0m0.2 35.6h0m0-38.2h0m1.6 3.6h0m0.1-0.8h0m0 22.7h0m0-22h0m0.1-3.6h0m0.2 3.6h0m0.1 22.8h0m0 1.3h0m0.6-26.3h0m0.6 2.1h0m0.1 1.1h0m0.6-3.3h0m0.3-6.5h0m0.1 6.7h0m0.7 24.7h0m0.1 11.5h0m0.2-31.3h0m0.4 32.4h0m0.1-11h0m0.1-20.9h0m0.2 27.7h0m0.2-7.5h0m0.1-0.5h0m0.2 1.4h0m0.4-28.9h0m0 27.4h0m0.2 4.4h0m0.2-24.4h0m0.1 25.8h0m0-6.8h0m0.2 9.3h0m0.5-7.2h0m0.1 4.9h0m0-4.2h0m0.3 5.8h0m0.1-8.3h0m0.1 10h0m0.6-33h0m0.2-0.9h0m0.2-3.9h0m0 6h0m0.6-7.3h0m0 29.3h0m0.1 5.7h0m0.9-2.2h0m0.2-23.3h0m0.1 26.6h0m0.5 2.2h0m0.2-6.4h0m0.3 2.4h0m0.2-24.7h0m0.3 20.9h0m0 6.7h0m0.4-27.7h0m0.1 21.6h0m0.1-0.9h0m0-23.9h0m0.2 27.3h0m0.1-32.7h0m0.3 8.4h0m0.4 27.9h0m0.1-2.7h0m0.3-35.8h0m0.6 2.2h0m0.1 38.1h0m0.1-32.9h0m0.1 4.4h0m0.2 21h0m0.5-2.2h0m0.1 10.1h0m0.1-33.7h0m0.4-0.9h0m0.2-4.6h0m0.1 1.1h0m0.2-0.7h0m0.3 7.8h0m0.2-0.9h0m0.2 1.5h0m0 22.9h0m0.1-37.2h0m0.2 34.8h0m0.1-18.8h0m0.2-5.5h0m0 33.5h0m0-8.9h0m0.3-23.1h0m0.4 3h0m0.4-0.8h0m0.1-7.3h0m0 29.9h0m0.2-24.8h0m0.5 1.6h0m0-6.7h0m0.2 37.2h0m0.4-9.4h0m0.1 7.5h0m0.6-6.2h0m0-0.8h0m0.1-19.4h0m0 19.3h0m0.1-22.4h0m0.1-2.3h0m0.4-1.8h0m0.4 2.9h0m1.1 2.7h0m0.2-7.3h0m0 28h0m0.1 2.1h0m0.3 4.2h0m0.4-25.7h0m0.4-4.1h0m0.3 2.7h0m0 1.8h0m0.5-2.2h0m0 0.2h0m0.3 28.9h0m0-26.9h0m0.6 19.9h0m0.1-0.5h0m0 0.3h0m0.1-21.4h0m0.2-4h0m0.1 4.4h0m0.1 0.9h0m0.5-2.3h0m0.1 1.7h0m0.1 21.7h0m0.4-23.9h0m0.1 3.9h0m0.1-2.5h0m0.1 28.1h0m0.3-28.1h0m0.2 24.3h0m0.3-2.5h0m0-0.1h0m0.3 11.9h0m0.3-3.6h0m0.2-28.4h0m0.5 22.2h0m0.1 0.3h0m0.2-24.6h0m0.7 31.8h0m0.2-34.9h0m0 27.3h0m0.2 3.2h0m0.1-25.8h0m0 35.2h0m0.1-14.6h0m0.1 6.1h0m0.6-30.7h0m0.1 31.4h0m0.1-29.1h0m0.3-1h0m0.1 3.2h0m0.3-1.6h0m0 1.5h0m0 28.2h0m0.2-32h0m0.1 24h0m0.4 7.9h0m0.1-1.7h0m0.2-27h0m0.5 23.2h0m0.2-0.8h0m0.7-20.6h0m0.2 25.1h0m0.2-27.4h0m0 21.6h0m0.3-19.2h0m0.2 25.9h0m0.2-31.4h0m0.5 4.6h0m0.2 22h0m0.4-2.1h0m0.1 2.4h0m0.2-3.3h0m0-22.2h0m0.1 3.7h0m0.2-6.5h0m0-0.1h0m0 6.1h0m0.9 24.1h0m0.4-27.4h0m0.6 26.4h0m0.1-24h0m0-3.3h0m0.2-3.8h0m0.2 28.9h0m0.1-22.4h0m0.2-2.4h0m0.6 23.8h0m0.2 4.5h0m0.4 1.3h0m0.1 0.5h0m0.3-25.8h0m0.3 0h0m0.1 19.2h0m0.2 0.7h0m0.6-21.2h0m0 24.6h0m0.2-29.5h0m0.3 3.4h0m0.4 0.2h0m0.2 30.1h0m0.1-28.8h0m0.1 34.8h0m0.2-9.7h0m0.1-3.5h0m0.8 0.7h0m0.1-24.7h0m0.8-2.4h0m0.2 32.4h0m0.4-26.1h0m0.9 23.5h0m0.1-27.4h0m0 23.1h0m0.3-20.9h0m0.7 0.7h0m0.2 22.6h0m0.1-22h0m0 0.4h0m0.3 19h0m0 4.5h0m0.3 0.3h0m0.1-2.6h0m0-21.5h0m0.2 25.1h0m0.1-29.8h0m0.5 28.8h0m0.7-26.4h0m0 1.2h0m0.1 1h0m0.1-0.6h0m0-7.3h0m0.1 28.7h0m0.5-26.2h0m0.3-0.4h0m0.1 5.4h0m0-2.7h0m0.2 33.3h0m0.1-7h0m0.3-29.1h0m0.1-1h0m0.3 5h0m0 26.3h0m0.2 4.7h0m0-29.4h0m0.3-1.4h0m0 0.7h0m0.1 20.4h0m0.4-23.5h0m0.1 1.6h0m0.2 24.7h0m0.1-28.1h0m0.1 2.8h0m0.1-0.2h0m0.5-0.2h0m0.5 28.1h0m0.1-30.3h0m0.3 6h0m0.3 21.6h0m0.1-2.4h0m0.2 2h0m0 0.1h0m0.1 3.2h0m0.1-1.5h0m0-29.2h0m0.1 2h0m0.1-0.2h0m0 2.9h0m0.3 22h0m0.1-24.4h0m0.2 3.7h0m0 20.3h0m0-22.8h0m0.5-3.1h0m0 1.4h0m0.4 3.9h0m0.2-2.6h0m0.1 22.8h0m0.3-23.5h0m0.1 27.4h0m0.3-29.4h0m0.1 24.9h0m0.1 5.1h0m0.1-29.3h0m0 3.2h0m0.3 20.4h0m0.4 1.5h0m0.3-22.8h0m0.1-3.2h0m0.6 4.7h0m0.1 23.8h0m0.1-23.6h0m0.2-3.2h0m0.1 23.4h0m0.4 2.3h0m0.1-24.1h0m0.3 21.2h0m0.2-28.3h0m0 41.3h0m0.1-7.1h0m0.1-5.4h0m0.6 0.4h0m0.3-25.2h0m0 3.9h0m0.2 1.9h0m0.3-2.6h0m0 0.3h0m0.3-0.8h0m0.3-2.6h0m0.1 5.2h0m0.1 24.6h0m0.1-31.5h0m0.1 7.5h0m0.4-4.3h0m0.3-1.6h0m0.1 27h0m0.1-23.5h0m0.5 20.6h0m0.2 9.8h0m0.1-32.4h0m0.1 30.2h0m0-5.3h0m0.1-24.9h0m0 24.2h0m0-19.9h0m0.2 18.5h0m0.2 1.9h0m0.4 3.6h0m0.2-5.1h0m0.5-21.3h0m0 29.4h0m0.1-31.6h0m0.3 0.8h0m0 28.7h0m0-26.2h0m0.5-1.9h0m0.2 22.4h0m0.1-28.4h0m0 27.5h0m0-20.4h0m0.1 22.2h0m0.1 8h0m0.3-9.4h0m0 0.5h0m0.2-22.3h0m0 2.5h0m0.1-14.5h0m0.1 12.7h0m0 0.5h0m0.2 20.6h0m0.1 6.4h0m0-5.2h0m0.5-23.1h0m0.3-0.7h0m0.3-1h0m0.2-0.2h0m0.3 33.9h0m0.3-33h0m0.5-4.7h0m0 7.4h0m0-2.9h0m0.3 33.3h0m0.5-39.1h0m0 33.8h0m0.4-25h0m0.4 21.1h0m0-28.8h0m0.3 3.4h0m0.4 3.6h0m0 1.6h0m0.3 19.7h0m0 2.7h0m0.1-29.8h0m0.1 26h0m0.8-18.3h0m0-3.4h0m0.1 27.2h0m0.1-29.3h0m0.1 26h0m0.1 0h0m0.1 6.7h0m0.1-7.4h0m0.4-1.1h0m0.1-23.9h0m0-1.8h0m0.1 6.4h0m0.5-2.1h0m0 21.5h0m0 0.3h0m0.1 0.4h0m0.3-22.3h0m0.1 26.9h0m0.2 5.3h0m0.3-7.8h0m0.3-26.6h0m0.3 0.9h0m0.4 0.7h0m0.2 23.7h0m0.3-0.4h0m0.2 4.9h0m0.1-25.7h0m0.1-2.4h0m0.3-9.4h0m0.7 9.7h0m0.6 3h0m0.3 19.4h0m0.1-20.8h0m0.8-6.3h0m0.3 5.8h0m0.1 0.2h0m0.5 21h0m0-0.7h0m0.1-19.6h0m0.3 23.7h0m0.3-31.2h0m0.2 35.1h0m0.1-30.7h0m0.1 23.6h0m0.1 0.3h0m0.4-0.4h0m0.1 0.4h0m0.1-33.1h0m0 11.3h0m0 1.9h0m0.2-1.9h0m0 24.8h0m0.2-23.8h0m0.2-1.4h0m0.3 27.8h0m0.2-35.7h0m0.1 30.4h0m0.1-1.8h0m0.5 1.8h0m0.4-29h0m0.1 9h0m0.1-3.3h0m0.1 0.4h0m0.3 22.2h0m0.2 4.1h0m0.1-27.3h0m0.5 25.7h0m0.4 1.5h0m0-24.3h0m0.2-2h0m0.2-0.9h0m0.5 23.1h0m0.7-0.6h0m0-24h0m1-5.4h0m0.1 3.7h0m0.2 2.8h0m0.5-2.1h0m0.6 27.7h0m0.3-25.8h0m0.4 2.5h0m0.2 28.8h0m0.1-3.3h0m0.1-3.4h0m0.3 2.5h0m0.1-25.2h0m0.3-1h0m0.1 0.9h0m0 1.1h0m0.3-1.1h0m0 3h0m0-2.4h0m0.6 23.5h0m0.3-24.8h0m0.1 1.1h0m0-1.2h0m0.3-1.2h0m0.1 2.9h0m0 26.9h0m0-6h0m0.1 0.9h0m0.5 3.8h0m0-1.3h0m0.2 2.6h0m0.1-5.3h0m0 3.7h0m0.2-23.4h0m0.6 20.3h0m0.1 0.7h0m0.1 3.8h0m0.2-1.9h0m0.3-26.2h0m1.1 2.5h0m0.2 27.8h0m0.2-44.1h0m0.1 46.8h0m0.1-0.5h0m0-40.5h0m0.4 10.6h0m0-2.6h0m0.1 29.1h0m0.1-25.8h0m0.1 19.8h0m0 1.2h0m0.6 0.9h0m0.5-0.2h0m0.3-27h0m0.4 31.7h0m0.1-5h0m0.1-1.7h0m0.6-19.8h0m0.3-3.2h0m0.1 23.8h0m0.5-23h0m0-1.3h0m0.1 3h0m0.6-12.4h0m0 33.4h0m0.4-21.9h0m0.2 21h0m0-24.3h0m0.1-1h0m0.1 28.1h0m0.2 3.1h0m0.4-1.2h0m0.1-33.2h0m0.1 28.3h0m0.2-19.5h0m0.1-5.7h0m0.1 24.7h0m0.1 0.7h0m0.1-24.9h0m0.1 3.1h0m0-9.5h0m0.3 38h0m0.9-2.4h0m0.2-25.1h0m0-4.5h0m0.1 34.8h0m0.1-29.8h0m0.2 0.8h0m0.2 22.6h0m0.5-23.8h0m0.1-0.7h0m0.1 20.9h0m0-23.5h0m0.4 0.2h0m0.1 4.5h0m0.2-4h0m0.6 4h0m0 31.1h0m0.1-33.8h0m0.2 0.9h0m0-2.3h0m0-3h0m0.4 32.8h0m0.2-2.8h0m0.3-25.2h0m0.4 21.6h0m0-19.9h0m0.2 20h0m0.7 2h0m0.2-0.9h0m0.2-24.9h0m0.2 31.4h0m0.1-7.6h0m0.1 1.3h0m0.1 4.1h0m0-31.9h0m0.7 29.8h0m0.1 0.9h0m0-0.6h0m0.7-3.2h0m0.1 4.4h0m0.3-5.1h0m0 5.2h0m0.2-25.8h0m0.4-4.9h0m0 5.7h0m0.2 31.7h0m0-33.7h0m0.2 21.6h0m1 5.7h0m0-28.4h0m0.3 22.5h0m0.3 8.2h0m0-30h0m0.2 2.4h0m0.6 21.1h0m0-22.6h0m0.5 0.9h0m0.1 29.3h0m0.4 2.9h0m0-32.5h0m0.3 30.6h0m0.1-35.5h0m0 32.5h0m0.1-7.6h0m0-27.4h0m0.4 31.5h0m0.1-1.1h0m0-0.1h0m0.1 3.5h0m0.1-28.7h0m0.3-8.2h0m0.2 10.1h0m0.1 0h0m0.5 2h0m0-10h0m0.4 35.9h0m0.1-36.6h0m0.3 4.2h0m0.3-5.7h0m0.7 31.9h0m0 0.6h0m0.7-22.1h0m0.2 23.5h0m0.3-29.4h0m0.1 28.5h0m0-27.9h0m0.2 37.3h0m0.2-36.6h0m0.2 27.4h0m0.8-22.9h0m0.5 27.7h0m0.1-31.1h0m0 2h0m0.1 22.4h0m0.3-19.4h0m0.4-6.7h0m0.3 1h0m0.5 25h0m0 8.2h0m0.2-6.2h0m0.1-25.6h0m0.4 4.2h0m0.1-1.7h0m0.5 24.2h0m0.2-22.7h0m0 21.4h0m0.3-22.7h0m0.3 20.4h0m0.3-26.5h0m0.6 0.3h0m0 32.5h0m0.4-32.2h0m0.2 6.4h0m0.2-5.7h0m0.1 32.9h0m0.1-4h0m0.1-2.7h0m0-1.6h0m0.4-25h0m0 32.6h0m0.3-2.3h0m0.2 1.4h0m0.2-28.2h0m0.3-4.1h0m0.3 34.5h0m0.1 0.4h0m0-30.6h0m0.5 21.3h0m0.3 3.4h0m0-24.1h0m0.3 1.3h0m0.2 0.6h0m0.3 26.2h0m0-25.9h0m0 22.5h0m0.4-23.7h0m0.2 20.7h0m0 1.1h0m0.2-0.1h0m0.1 2.5h0m0.6-26.6h0m0.1 22.9h0m0.1-23.9h0m0-0.3h0m0.5 23.7h0m0.2 0.4h0m0 2.9h0m0.2 5.4h0m0.6-29.5h0m0.1 21.5h0m0.2-27.3h0m0.4 5.9h0m0.1-2.9h0m0 24.4h0m0.2-25.5h0m0.2-1.7h0m0.3 1.3h0m0.2 6.3h0m0.1-3.4h0m0.1 24.1h0m0 2.3h0m0.2-26.2h0m0.2-5.7h0m0.5 6.8h0m0.3-0.7h0m0.2 1h0m0 28h0m0.2-1.4h0m0.1-29.4h0m0.3-0.9h0m0-2.4h0m0.1 31.1h0m0.7-0.4h0m0.1-23.1h0m0-3.4h0m0.1 25.8h0m0.1-24.3h0m0.2-0.4h0m0.1-4.3h0m0.1 2.2h0m0.2 29.8h0m0.1-27.9h0m0.2-3.5h0m0-2.8h0m0 6.8h0m0.1 24.8h0m0-2.1h0m0.1-20.6h0m0.1-2.3h0m0-4.6h0m0 26.3h0m0.4-0.4h0m0 4.9h0m0-2.2h0m0.1 2.2h0m0.2 4.4h0m0.9-0.6h0m0.5-4h0m0.1 1.4h0m0.1-6.2h0m0 8.3h0m0.9-38.8h0m0 33.1h0m0-30.8h0m0.1 29h0m0.1 0.5h0m0.1-22.6h0m0.3 26.1h0m0.3 0.5h0m0.5-25.7h0m0.3-1h0m0.4 25h0m0.5-27.2h0m0.1 23.2h0m0.4 14.4h0m0.2-11.1h0m0-0.3h0m0.2 0.5h0m0.2 2.6h0m0-29.6h0m0 1.9h0m0.1 30.1h0m0.3-27.3h0m0.2-5.6h0m0.3 1h0m0.1 1.4h0m0 1.8h0m0.5 24.8h0m0.2-29.1h0m0 26.8h0m0 1.8h0m0 2.4h0m0 1.5h0m0.3-37.3h0m0.1 6.3h0m0.1 33.2h0m0.2-10.2h0m0-20.3h0m0.1 21.3h0m0.1-22.2h0m0.7-1h0m0 3.6h0m0.3-3.3h0m0.3 3.3h0m0.2 21.6h0m0.4-23h0m0.2 1.6h0m0.1-0.7h0m0.3 0h0m0.3 24.1h0m0.3-29.2h0m0.1 5.5h0m0-5.2h0m0.1-0.7h0m0 5.7h0m0.2-9.8h0m0.3 38.4h0m0.1-30.7h0m0.1 27h0m0.3-27.2h0m0 2.6h0m0-7.7h0m0.1 30.6h0m0.1-25.4h0m0.2 23.2h0m0-29.8h0m0.4 4.6h0m0.1 28.2h0m1 3.4h0m0-32h0m0 0.7h0m0.1 31.8h0m0.2-40.8h0m0 12.9h0m0.1 21.8h0m0.2 3.8h0m0.1-25.5h0m0-0.8h0m0.3-5h0m0.4 5h0m0.6-0.5h0m0-1.8h0m0.7 2.7h0m0.1-1.9h0m0.2 22.1h0m0-23.3h0m0.7-3.1h0m0.1 3.5h0m0.1-3.2h0m0.1 31.2h0m0.1-26.3h0m0.2 22h0m1.3 0h0m0.1-22.3h0m0.1 0.6h0m0.1-6.4h0m0.1 28.2h0m0.1-1.4h0m0.2-22.6h0m0 25.3h0m0 0.5h0m0.1 4.1h0m0.2-32.2h0m0.1 28.3h0m0.1-3.1h0m0-22.9h0m0 1.2h0m0 24.5h0m0.1-22.3h0m0.2 19.8h0m0.1-21.3h0m0.2 0.3h0m0.2 24.2h0m0-27.8h0m0.3 28.9h0m0.2-29.6h0m0.3 31.1h0m0.6-32.9h0m0.2 25.9h0m0-25.6h0m0.1 25.7h0m0.1 3.6h0m0.1-25.1h0m0.2 28.1h0m0.3-4.3h0m0.2 8.7h0m0.1-31.9h0m0.2-1.3h0m0.1 1.9h0m0.3 21.7h0m0.1-21h0m0.1 1.4h0m0.1-2.2h0m0.1 20.5h0m0-22.9h0m0.1-1.1h0m0 4.7h0m0.1 22.2h0m0.2 0.7h0m0.1 3.3h0m0.5-6.8h0m0.2-19.3h0m0.1-2h0m0.1 2.4h0m0.5 21.7h0m0-23h0m0-3.3h0m0.2 1.9h0m0 23.7h0m0.3-22.8h0m0.2 24.6h0m0.3-2.5h0m0.1 0.8h0m0.3 5.5h0m0-33.1h0m0-2h0m0.2 1.8h0m0.2 28.1h0m0.2-23.1h0m0.2 21.1h0m0.2-20.8h0m0.2-9.1h0m0.7 33.1h0m0.2 2h0m0.2-24.5h0m0.3-5.5h0m0.3 24.1h0m0.3 3.6h0m0-0.7h0m0.1-23.3h0m0.2 0.4h0m0.2-0.1h0m0.7-1.4h0m0.1-4.9h0m0.1 2.1h0m0.1 32.6h0m0.2-30.6h0m0.1-1.2h0m0.1 27.1h0m0.3-23.4h0m0.4-0.6h0m0.1 1.8h0m0-8.1h0m0.1 8.7h0m0.2-6.7h0m0.5 24.8h0m0.1-18.7h0m0.1-1.3h0m0-0.6h0m0.1 24.6h0m0-3.4h0m0.2 1.3h0m0-1.1h0m0.3-22.3h0m0.2 2.4h0m0.1-7h0m0.3 4h0m0 25.6h0m0.1 4.9h0m0.1-31.2h0m0 32.4h0m0.2-3.3h0m0.2-1.3h0m0.3-28.1h0m0.3 2.8h0m0 0.5h0m0.1 26.3h0m0.5-5.5h0m0-21h0m0 22.4h0m0.2-21.8h0m0.2 29.8h0m0.1-28.6h0m0-15.1h0m0.3 38.1h0m0.1-32.3h0m0 7.1h0m0.2 0.6h0m0.1 23.4h0m0 6.4h0m0-5.3h0m0.1-4.7h0m0.1-21.2h0m0.1-3.6h0m0.1-0.4h0m0.5 28.2h0m0 2.1h0m0.1-29.2h0m0.1 4.7h0m0.3 20h0m0.1-0.5h0m0-20.3h0m0.3 23.9h0m0.1 7.7h0m0.2-0.5h0m0.2-9.3h0m0.1 8h0m0.1-30.4h0m0.1 24.5h0m0.1-2.2h0m0.2-31.9h0m0 35.1h0m0.3-2.8h0m0-21.9h0m0.5-3.7h0m0.2 28.6h0m0.4-35.8h0m0.4 35.4h0m0.4-1.3h0m0.3-0.1h0m0.1-1.3h0m0.1 9.1h0m0.6-29.1h0m0.1 18.6h0m0.2 3h0m0.2-22.1h0m0 23.8h0m0.4 1.7h0m0-24.8h0m0.1 23h0m0.2-0.2h0m0.3-3h0m0.4 0.9h0m0.3-23.6h0m0.7-0.8h0m0.9 25.9h0m0.3-30.8h0m0.4 5.2h0m0.2-6.8h0m0.1 42h0m0-37h0m0.1 29.1h0m0-30.8h0m0 6.4h0m0 22.8h0m0.1-26.9h0m0.1 4.3h0m0.1-5.2h0m0.3-5.2h0m0.4 35h0m0.3-29.8h0m0-8.1h0m0 1h0m0.2 11.6h0m0.1 20.7h0m0.2 3.6h0m0.1-26.3h0m0.4 24.6h0m0.2-25.9h0m0 0h0m0.4 22.7h0m0.1 7.9h0m0.3-7.8h0m0.6-33.1h0m0.3 14.5h0m0.9-2.6h0m0.2 24.9h0m0.2-26.4h0m0.4 30.3h0m0.5-7.8h0m0.6-24.5h0m0 5.1h0m0.1-0.9h0m0.2-2.4h0m0.3 2h0m0.1 24.5h0m0.1 0.8h0m0.5-4.3h0m0.2-22.4h0m0 2.1h0m0.2 25.4h0m0.3-28.6h0m0.3 1.8h0m0.1 0.1h0m0.3 24.7h0m0.1-22.1h0m0 18.4h0m0.1 5.2h0m0.1-4.4h0m0.3-0.6h0m0 8.8h0m0.3-31.9h0m0.2 25.2h0m0.5 0.1h0m0.3-26.9h0m0 1.9h0m0.1 27.8h0m0.1-26.4h0m0.2 3h0m0.2-1.6h0m0.1-2h0m0 3.6h0m0.1-0.3h0m0.5 30.3h0m0-7.4h0m0.1-23.2h0m0.4 20.4h0m0 3.1h0m0.1-24.4h0m0.3 0.7h0m0.2 19.5h0m0.1 1.9h0m0 0.7h0m0.5-2.7h0m0.1-25.1h0m0.2 4.2h0m0.6-6.1h0m0.4 0.6h0m0 7.5h0m0.2 25.1h0m0.3-3.3h0m0.1-30.7h0m0.1 29h0m0.1-20.8h0m0.5 22.5h0m0 5.7h0m0.1-8.1h0m0-21.6h0m0 24.7h0m0.3-30h0m0 2.7h0m0.1 25.5h0m0.1-0.3h0m0.2-1.8h0m0.1 0.5h0m0.1-23.5h0m0.1 23.5h0m0.2-19.3h0m0.1 24.3h0m0.1-28.2h0m0.1 24.8h0m0.6-22.6h0m0.1 27.4h0m0.1-6.5h0m0.1-23.3h0m0.2 23.6h0m0-27.1h0m0.2 7.7h0m0.8 22.3h0m0 5.3h0m0.2-35h0m0.4 7.4h0m0.1 27.5h0m0.1-30.8h0m0.1 0.8h0m0.5 31.7h0m0-30.8h0m0-2.4h0m0.5 24.1h0m0.1-23.5h0m0.2-0.1h0m0-0.9h0m0 3.4h0m0.1-1.7h0m0.1-1.2h0m0.3 3.3h0m0.2-1.4h0m0.1 2h0m0.4-4.1h0m0.1 22.5h0m0.3 8.5h0m0.3-5h0m0.2 2.8h0m0.3-5.3h0m0.2 3h0m0.3 3h0m0-0.1h0m0.1-4.3h0m0.2 7.7h0m0.1-37.9h0m0.3 31.6h0m0.2-3.9h0m0-22.2h0m0.1 0.2h0m0.2-0.2h0m0.1 31.6h0m0.1-4.2h0m0.5-25.4h0m0.1 21.6h0m0.1 0.5h0m0.2-25.3h0m0.1 33.1h0m0.1-8h0m0-0.7h0m0-23.3h0m1 24.6h0m0.5-21h0m0.2 24.9h0m0.3-2.3h0m0.5-27.8h0m0.1 29h0m0.5-4.3h0m0.6-0.6h0m0.1 5.8h0m0.3-27.8h0m0.2 29.6h0m0.1-33.8h0m0 6.2h0m0.1 32.2h0m0.1-32.5h0m0.1 20.1h0m0.1 14.2h0m0.3-9.9h0m0-32.1h0m0.1 29.4h0m0.1-24.5h0m0.1 27h0m0.1-25.6h0m0 28.1h0m0.1-6.3h0m0.2-0.2h0m0.4 5.1h0m0-27.7h0m0 27.2h0m0.3-3.4h0m0.3-20.1h0m0.5 24.9h0m0.2-31.4h0m0.2 27.4h0m0.2-1.4h0m0.4-19.3h0m0.1 22.6h0m0-1.1h0m0.3 1.6h0m0.1-30.6h0m0.3 7.4h0m0.3-3.7h0m0.1 3.7h0m0.3-10h0m0.1 4.7h0m0 5.7h0m0.9 25.4h0m0-1.3h0m0.2-24.6h0m0.4 0.6h0m0-8.3h0m0.4-2.9h0m0.8 8.4h0m0.2 1.4h0m0.4 21.2h0m0.5-26.8h0m0.1 1.6h0m0.3 2.8h0m0.1 0.8h0m0.2 21.3h0m0-1.2h0m0.2-19.3h0m0-4.7h0m0 27.7h0m0.1-23.4h0m0 19.8h0m0.2 0.8h0m0.1 5.6h0m0.1-32.4h0m0-2.8h0m0 36.4h0m0.7-32h0m0.1 5.7h0m0.1-2.1h0m0 22.8h0m0.1-24.7h0m0 4.4h0m0.1-2.1h0m0.2 28.5h0m0.1-29.4h0m0-3.1h0m0.1 29.3h0m0.2-24.2h0m0.1 20.1h0m0.2 4.4h0m0.1-4.2h0m0.2-23.7h0m0.5 3.5h0m0.2 21.8h0m0.1-2.2h0m0 0.1h0m0 2.7h0m1.1-22.5h0m0.1 19.2h0m0-23.6h0m0 1.5h0m0.4 24.3h0m0.3 0.8h0m0.3-25.5h0m0 29.4h0m0.5-29h0m0 27.5h0m0.1-1.7h0m0.4 2.5h0m0-3.7h0m0.1-24h0m0.8 21.6h0m0.3 11.7h0m0.9-10.4h0m0.7-0.4h0m0.3-27.3h0m0.1 7.4h0m0-3.1h0m0.2 29h0m0.3-26.8h0m0 20h0m0.2 6.2h0m0.2-42.1h0m0.3 4.8h0m0.3 31.9h0m0 3.2h0m0.2-30.5h0m0.3 28.1h0m0.9 7h0m0.7-33.1h0m0.1 1.6h0m0.1 28.2h0m0-0.7h0m0.2 0.3h0m0.2-25.8h0m1.8 21h0m0.7 1.4h0m0-27.9h0m0.5 28.5h0m0.3 9.6h0m0.1-34.2h0m0.2 29.1h0m0.5-29.3h0m0 4.1h0m0.1-4.7h0m0.6 24.6h0m0-20.2h0m0.1 22.3h0m0.2 0.3h0m0.5-21.6h0m0.4-9.8h0m0.1 7h0m0.4 25.7h0m0.1 2.1h0m0-29.3h0m0.7 1.8h0m0.2 20.8h0m0 0.2h0m0.4 7h0m0.4-4.8h0m0.4-0.7h0m0-23.7h0m0.1 30.1h0m0.1-6.1h0m0.7 2.1h0m0-22.3h0m0-2.4h0m0.1-2.1h0m0 0.5h0m0.4 28.5h0m0.4-2h0m0.1-23.2h0m0.2 26.7h0m0-3.2h0m0.2-1.2h0m0.2-22.5h0m0 24.6h0m0.5-26.2h0m0-4.2h0m0 29.8h0m0.1-29h0m0.6 5.5h0m0.1 18.9h0m0-26h0m0.7 29.5h0m0.2-22.5h0m0.2 21.9h0m0.2-2.5h0m0.5-25.9h0m0.2-2.4h0m0.1-5.2h0m0.3 36.6h0m0-33.7h0m0 10.7h0m0.1 26.8h0m0.3-26.1h0m0.2-8.1h0m0.1 27.7h0m0.1-25.3h0m0.3 27.9h0m0.4-25.1h0m0.3 28.7h0m0.3-31.3h0m0.7 30.5h0m0.2-3.1h0m0.2-27h0m0.3 25.5h0m0.2-22.5h0m0.2-6.8h0m0.3 32.3h0m0-2.5h0m0.3-1.4h0m0 3.2h0m0.7 4h0m0.7-33h0m0.4 0.8h0m0.4 5.7h0m0.2 22.1h0m0.3-23.8h0m0.2 0.2h0m0 1.3h0m0.9-2.7h0m0 26.5h0m0.2-23.6h0m0.1-5.9h0m0 31.2h0m0.2-5.9h0m0.1-25.5h0m0 2.6h0m0.1 24.6h0m0.1-20.7h0m0.4-6h0m0.3-2.1h0m0.3 27.3h0m0.2-21.2h0m0-2.4h0m0 22.9h0m0.1 4.8h0m0.6 1.7h0m0.3-27.4h0m0 25.3h0m0.7-2.5h0m0.1-22.3h0m0.1 21.8h0m0.1 6.7h0m0.2-41.6h0m0.5 13.3h0m0.1-4.3h0m0.1 3.2h0m0.2-4.8h0m0.4 1h0m0.2 29.6h0m0.2-25.2h0m0 28.3h0m0.1-33.8h0m0.1 0.5h0m0.2 6h0m0.2 21h0m0.9-0.7h0m0.1-23.7h0m0.2 0.7h0m0.4 22.4h0m0-23.9h0m0.2-4.6h0m0.4 28h0m0.1-19.9h0m0-1.9h0m0.3 1.9h0m0.2-2.8h0m0.3 2.7h0m0.3 0.2h0m0.1-2h0m0.1 0.8h0m0.2 28h0m0.2 8.1h0m0-39.9h0m0.1 29.7h0m0.4 0.7h0m0.9-26.6h0m0.4 30h0m0-31.2h0m0.3 22.8h0m0 6.4h0m0.1-3.7h0m0.2-1.7h0m0.1-19.7h0m0-1.5h0m0.1 25.9h0m0.1-29.5h0m0.1 24.3h0m0.6-31.1h0m0.2 9h0m0.3 23.7h0m0.4 1h0m0 1.7h0m0.1-26.6h0m0.1 29.5h0m0.1-7.5h0m0-25.1h0m0.2 28h0m0.4-2.6h0m0-22.4h0m0.9-4h0m0 28.8h0m0.6-1.9h0m0.1-31.3h0m0.1 2h0m0.4 28h0m0.2 0.9h0m0.3-20.4h0m0.1 24.7h0m0.2-4.5h0m0.1-27.4h0m0.3 35.3h0m0.2-2.5h0m0 0.1h0m0.2-27.5h0m0.4-5.2h0m0.3 29.9h0m0.2-3.8h0m0.1 2.3h0m0.1 2h0m0.1-25.3h0m0.1 23.2h0m0-28.1h0m0 4.3h0m0.2 24.9h0m0.1 5.2h0m0.2-8.5h0m0.1-20.7h0m0.4 1.2h0m0 22.1h0m0 1.5h0m0.1-3.5h0m0.4-25.4h0m0.5 0.3h0m0 35.4h0m0.2 3.3h0m0.1-41.4h0m0.2 2.5h0m0.3 27.5h0m0.1-22.1h0m0.3 19.7h0m0.6 3.4h0m0.7-2.8h0m0.1 0.1h0m0-21.1h0m0.1 24.9h0m0.1-2.5h0m0.2 2.1h0m0.1-2.7h0m0.1-27.3h0m0.2 0.6h0m0.3-3.4h0m0 30.1h0m0 1.8h0m0.3-3.8h0m0.3 0.8h0m0.1-22.6h0m0.3 0.2h0m0 21.8h0m0 2.7h0m0.1-2.4h0m0 0.7h0m0.3-23.9h0m0.4 27.9h0m0.7 8.4h0m0.3-36h0m0.1 4h0m0.3-5.5h0m0.4 3.2h0m1.1 29.3h0m0.2-8.2h0m0.1 9.3h0m0.2-29.7h0m0 23.5h0m0.3-30.3h0m0.3-3.7h0m0.1 31.6h0m0.4-19.7h0m0.1-1.8h0m0-8.1h0m0.4 33.3h0m0.3-25h0m0.7 27.1h0m0-29.2h0m0 27h0m0.1-27.9h0m0.2-5.5h0m0.1 29.6h0m0.1 3.2h0m0.8-22.8h0m0 19h0m0.1 10.9h0m0-6.4h0m0.1-31.7h0m0.1-0.5h0m0.4 28h0m0.2-35.4h0m1.1 44.6h0m0-29.7h0m0.1 22.6h0m0.2 5.2h0m0-28.1h0m0 0.6h0m0.1-5.8h0m0.1 27.4h0m0.2 5.2h0m0.6-3.3h0m0.1-22.8h0m0-1.1h0m0.6-3.9h0m0.1 25.8h0m0.2 1.6h0m0.1-29.1h0m0.2 4.2h0m0.2-2.2h0m0 1.8h0m0.1-7.5h0m0.1 29.5h0m0.2 4.3h0m0.2-29.6h0m0 28.8h0m0.1-0.9h0m0.1-2h0m0-19h0m0.3-3.4h0m0 28.9h0m0-4.7h0m0-0.4h0m0.1-25.6h0m0.1 25h0m0.1-21.8h0m0.2 0.8h0m0 20.3h0m0.2-0.8h0m0 0h0m0.3-25.5h0m0.5 29.1h0m0.1-3.9h0m0.2-34.1h0m0 15h0m0.4-2.1h0m0.3 25.6h0m0-1.1h0m0.1 9.6h0m0.1-9.8h0m0.2 0.2h0m0.3-1.9h0m0 3.6h0m0.1-25.7h0m0.3 24.9h0m0.2-1.6h0m0.1-23h0m0.7-4.2h0m0 34.7h0m0.2-9h0m0.1-36.8h0m0 36.3h0m0.1 13.7h0m0-36.3h0m0.3 1.1h0m0.3-0.4h0m0.1 27.7h0m0-2.6h0m0.2 1.4h0m0.1-33.7h0m0.3 7.8h0m0.8-4.8h0m0.3 27h0m0.2 4.1h0m0-24.3h0m0.1 20.7h0m0-0.9h0m0.1 0.3h0m0.1 6.2h0m0.2-40.2h0m0.8 38.3h0m1.1-33.3h0m0.5 35.4h0m0.4-7.1h0m0.1 7.3h0m0.4 0.4h0m0.9-5.9h0m0-26.6h0m0.1 31.1h0m0.1-6.6h0m0 7.8h0m0-36.9h0m0.3 31.3h0m0.2 1.5h0m0.8-3.3h0m0.2-20.1h0m0 24h0m0.1 1h0m0.2-3.6h0m0.4 2.4h0m0.5 3h0m0.4-26h0m0.1-1h0m0.1-7.8h0m0.3 31.5h0m0.3-33.9h0m0.4 8.1h0m0.3 30.6h0m0-31.9h0m0.2 23.9h0m0.1 11.6h0m0.8-12.4h0m0.5 1.6h0m0.2-22.9h0m0.2-0.5h0m0.1 27.6h0m0 0.6h0m0-27.2h0m0.2-1.1h0m0.1 27.5h0m0.5 2h0m0.2-32.2h0m0.2 3.1h0m0.3 0.4h0m0.1 0.4h0m1 1.7h0m0-0.1h0m0.1 0.4h0m0.1 22.5h0m0.5-23.7h0m0.1 23.5h0m0.3-2.5h0m0.5 8.8h0m0-4.1h0m0.5-25.5h0m0.2-8.9h0m0 38.7h0m0.1-30h0m0.2 25.2h0m0 1.7h0m0.1-30h0m0.1 28.3h0m0.1-26.7h0m0 27.4h0m0.7-4.2h0m0.1-32.6h0m0.2 9.8h0m0.6 22.7h0m0.3-23.3h0m0.1 28.8h0m0-25.5h0m0.3 18.5h0m0.5-20.5h0m0.3 24.1h0m0.1 2h0m0-31.2h0m0.3 31.8h0m0.2-26.6h0m0 22.8h0m0.1-31.5h0m0.6 33.8h0m0.2-4.4h0m0.1-0.4h0m0 0.1h0m0.6-25.5h0m0.6 3.6h0m0 30.8h0m0.3-7h0m0.2 5.5h0m0-6.2h0m0.3-19.5h0m0-2.2h0m0.1-4.5h0m0 26.4h0m0.1 2.2h0m0.4 3h0m0.1-32.2h0m0.1 27.5h0m0.3-23h0m0.1-9.5h0m0.3 32.3h0m0.9 5.9h0m0.2-38.5h0m0.1 42.5h0m0.3-11.7h0m0 3.3h0m0.1-27.8h0m0 4.3h0m0.1-1.6h0m0 26.6h0m0.6-23.3h0m0-7.8h0m0.2 32.1h0m0.2-27.7h0m0 32h0m0-7.7h0m0.2-21h0m0.2 27.1h0m0.1-28.5h0m0.2 22.2h0m0.3 0.9h0m0.3-25.8h0m0.4-3.4h0m0.2 26.4h0m0.3 2.9h0m0-2.5h0m0 11.5h0m0.2-7.9h0m0.2-22.7h0m1.1 18.7h0m0.3 5.2h0m0.1-5.3h0m0.5-20h0m0.1-7.9h0m0.1 2.7h0m0.5 3.5h0m0.3 21.5h0m0.2-23.9h0m0.2 4.6h0m0.7-1.6h0m0.2 2.5h0m0.1-5.3h0m0.2 32h0m0.3-4.2h0m0.1-29.4h0m0.2 28.5h0m0-1.9h0m0.1 2.4h0m0.4-2.9h0m0.2-0.2h0m0.1-22.2h0m0.4 1.2h0m0 20.9h0m0 0.6h0m0.1-20.8h0m0 29.4h0m0.1-29.1h0m0 24.6h0m0.2-4.9h0m0 1.1h0m0.1 5.9h0m0.5-26.1h0m0.1-0.6h0m0 23.6h0m0.9-2.8h0m0.3 8.5h0m0.1-10h0m0.4-18.9h0m0.5 20.8h0m0.2-24.6h0m0.1-0.7h0m0.7 25.4h0m0.1-22.1h0m0.1-5.8h0m0.6 5.8h0m0.2 22.8h0m0 7h0m0.2-3.4h0m0.1-26.8h0m0-5.1h0m0.5 33.9h0m0.2-37.2h0m0.1 8.4h0m1.2 2.1h0m0.3-10.7h0m0 9h0m0.4 27.6h0m0.4-34.9h0m0 32.3h0m0-1.7h0m0.4-26.2h0m0.2 22.7h0m0-19.3h0m0.2 20.4h0m0.1-26.5h0m0.1-2.8h0m0 32.8h0m1.3-30.5h0m0.3 4.8h0m0-4.3h0m0.4 3h0m0.1 31.8h0m0.1-33.4h0m0 1.1h0m0.1 29.3h0m0-1.6h0m0.2-0.6h0m0.1 9.5h0m0.1-39.1h0m0.4 6.8h0m0.1 28.2h0m0.1-32.4h0m0.5 1.8h0m0.1 1.6h0m0.1 19.5h0m0.2 1.2h0m0-23.8h0m0.2-3.1h0m0.1 26.3h0m0.2-24.8h0m0.1-0.4h0m0.1 27.9h0m0-2.5h0m0.1-23.2h0m0.3-0.5h0m0 23.3h0m0.1-21.2h0m0.5 20.7h0m0.4-22.4h0m0.3 24.7h0m0.2-1.8h0m0.1-22.1h0m0 27.3h0m0.1-32.7h0m0.1 33.5h0m0.1-27.4h0m0.1-4h0m0.1 28.5h0m0-2.2h0m0 7h0m0.6-4.8h0m0.1-23.5h0m0.1-2.4h0m0.2-0.5h0m0.1 3.2h0m0.2 21.7h0m0-21.6h0m0.2 33.3h0m0.6-0.4h0m0.3-32.3h0m0.1-2.8h0m0.1 26.5h0m0.1-30.5h0m0.3 7h0m0.2-2.5h0m0 22.8h0m0.5-0.5h0m0.4 6h0m0-28.6h0m0.1 2.3h0m0.3-4.5h0m0.1 5.1h0m0.1-1.9h0m0 20.2h0m0.6 1.6h0m0.4-22.5h0m0 22.8h0m0.1 3.7h0m0.1-26.7h0m0.1 24.5h0m0.1-26.5h0m0.8 25h0m0.1-20.2h0m0.2-1.5h0m0.1 24.9h0m0.1 1.6h0m0-29.7h0m0.1 30.9h0m0.3-7h0m0.1 6.5h0m0.1-31.4h0m0.3 29.3h0m0-0.7h0m0.1-33.3h0m0.4 30.1h0m0.3-22h0m0.1-7.8h0m0.2 4h0m0.2 29h0m0-23.1h0m0.1 0h0m0.4 22.9h0m0.1-29.6h0m0.2 4.6h0m0 0.9h0m0-2h0m0.4 1h0m0-1.7h0m0.1 29.7h0m0.3-6.7h0m0.1-24.8h0m0.1 26.2h0m0-21.2h0m0.1-6.7h0m0 35.5h0m0.1-7.9h0m0.4-23.2h0m0.3 3h0m0.2 25h0m0.3-36.1h0m0.2 35.3h0m0.1-5.8h0m0.3-24.8h0m0.1-1h0m0 28.1h0m0.2-2.3h0m0.1-19.8h0m0-0.1h0m0.3-1.8h0m0.1 23h0m0 2.7h0m0.1-30.7h0m0.2 5.1h0m0.1-0.4h0m0.3 23.4h0m0.1 2.7h0m0.7 1.2h0m0.6 3.3h0m0.1-30.2h0m0.2-6.4h0m0.2 2.9h0m0 27.8h0m0.1-25h0m0-1.1h0m0.4 26.7h0m0 0.8h0m0.3 4h0m0.2-32.7h0m0.1 4.7h0m0.2 20.8h0m0.2-27.8h0m0.2 6.3h0m0.4-5.1h0m0.1 27.8h0m0.5 3.7h0m0.2-1.6h0m0.2-0.1h0m0.8-28.5h0m0.1 3h0m0.2 21.9h0m0.2 5.9h0m0.1-5.7h0m0.6 0.6h0m0.3-28.7h0m0 8.8h0m0-7.5h0m0.1-2.3h0m0.7 28.7h0m0.2-19.1h0m0.1 22.5h0m0.2-24.4h0m0 22.2h0m0-26.9h0m0 26.2h0m0.1 0h0m0.4 4.1h0m0-2.7h0m0.2-25.3h0m0.2 4.5h0m0.1 25.1h0m0.3-33.1h0m0.2 7.8h0m0.1 21.7h0m0.1 2.9h0m0.6-0.5h0m0.3-3.7h0m0.2 1h0m0.1-1.8h0m0 8.2h0m0.1-8.4h0m1.1-20.3h0m0.3-0.1h0m0.4-1.2h0m0.7 1.6h0m0.1 27.1h0m0.1-4h0m0-24.1h0m0.4 22.6h0m0.1-27.1h0m0.1 1.4h0m0.1 4.9h0m0-0.8h0m0.2 0.9h0m0.2-0.4h0m0.9-0.3h0m0.1 30.6h0m0.1-32.3h0m0.2 2.5h0m0.3-0.8h0m0 28h0m0.3-34.5h0m0.2 27.3h0m0.1-26.9h0m0.5 28h0m0.8-25.5h0m0.1 25.7h0m0.1-22.4h0m0.1 0h0m0.1 21.3h0m0.4-23.2h0m0-6.2h0m0.2 4.4h0m0-1.8h0m0.3 29.4h0m0-28.6h0m0.7 5.9h0m0.1 23.7h0m0.2-30.2h0m0.1-2.7h0m0.6-3.7h0m0.1 6h0m0 3.2h0m0.6 0.9h0m0.7 0.6h0m0.1 1.1h0m0 21.5h0m0.1-24.3h0m0.3 1.6h0m0.1 26.1h0m0.1 0h0m0-4.4h0m0.2 5.8h0m0.3-38.7h0m0.3 38.6h0m0.1-31.3h0m0.3 25.4h0m0.1 2h0m0.2-25.1h0m0.2-3.4h0m0 3.5h0m0.2-0.8h0m0.1 31.8h0m0.1-29.2h0m0.1 22.7h0m0.1 3.8h0m0-35.7h0m0.1 36.8h0m0-26.7h0m0.2 23.2h0m0.2-3.1h0m0.1-18.9h0m0-4.3h0m0.3 1.9h0m0.2-0.8h0m0.5-4h0m0 25.7h0m0.4-22.3h0m0 1.1h0m0 2.2h0m0.3 28.6h0m0.4-31.6h0m0.2-0.4h0m0.3 27.5h0m0.6-26.6h0m0.2 1.1h0m0 24.1h0m0.1-2.9h0m0.1-19.4h0m0.8 30h0m0.1-35.9h0m0 30.2h0m0.2-25.1h0m0.3 24.7h0m0.1-4.3h0m0-20h0m0.4 20.6h0m0.1 8.7h0m0.1-9.5h0m0.1-24.4h0m0.1 25.1h0m0.1-23.5h0m0.1 25.2h0m0.1-34.9h0m0 2.4h0m0 7.5h0m0.2 32.8h0m0.1-5.5h0m0-34.9h0m0.1 2.8h0m0.1-3.5h0m0.6 30.7h0m0.2 7.3h0m0.5 1.7h0m0.2-8.7h0m0 7h0m0.6-30.5h0m0.8-1h0m0.4 23.9h0m0.7 0.9h0m0-22h0m0.2 26.1h0m0-3.8h0m0 9.8h0m0.1-10.5h0m0.2 0.1h0m0.4-21.1h0m0.1 24.6h0m0.5 8.6h0m0-32.8h0m0.2 25.2h0m0.7-1h0m0.3 2.5h0m0.3-3.9h0m0.2-28.3h0m0 27.2h0m0.2 6.8h0m0.1-1.5h0m0.2 0.8h0m0.2-7.7h0m0.7 11.8h0m0.1-30.6h0m0-7.9h0m0.1-0.7h0m0.5 5.3h0m0.1 28.6h0m0.1-6.6h0m0 6.6h0m0.2 1.2h0m0.4-27.3h0m0.4 28.1h0m0-27.6h0m0-2.7h0m0.2-1.1h0m0.2 25h0m0.2 5.5h0m0.2-28.5h0m0.1 0.7h0m0.5 22h0m0.4-20.2h0m0.2-1.4h0m0.1-2.6h0m0.1 3.4h0m0.5-2.7h0m0.2 1.2h0m0 1h0m0.4-2.9h0m0 3.5h0m0.5-1.4h0m0.1 21.4h0m0-0.6h0m0.2-19.1h0m0-2.8h0m0-2.1h0m0.2 1.4h0m0 23.9h0m0-28.9h0m0.4 30.6h0m0-30h0m0.2 4.9h0m0.1 26.2h0m0.5-28.5h0m0 24.5h0m0.1-20h0m0.2 24.5h0m0.4-31.2h0m0 7.6h0m0.2 35.8h0m0.1-36h0m0 0h0m0.1-0.2h0m0 22.5h0m0-26.8h0m0.1 3.9h0m0.4 31.4h0m0.4-36.1h0m0.1-2.3h0m0.1 4.1h0m0.1 3.1h0m0.2 22.2h0m0.1-28.7h0m0.2 2.7h0m0 28h0m0.1-32.9h0m0.1 29.7h0m0.3-27.6h0m0.1 1.3h0m0.5 0.4h0m0.3 2.5h0m1.1-1.3h0m0 3.6h0m0.3 21.2h0m0-2h0m0.2 2.8h0m0.4-24.4h0m0-0.2h0m0.2-2.1h0m0.3-0.1h0m0.1-2.3h0m0.5 28.9h0m0.2-24.3h0m0.1 22.5h0m1.1-25.9h0m0.1 28.4h0m0-23.3h0m0.4 0.3h0m0.3 20.6h0m0.1-21.3h0m0 27.4h0m0-3.3h0m0 1.2h0m0-1.8h0m0.1-21.8h0m0 26.4h0m0.2-28.3h0m0.4 1.4h0m0.2 19.7h0m0.2-0.7h0m0.3-19.2h0m0.2 0.7h0m0 19.5h0m0.2 2.5h0m0.3 1.8h0m0.5-25.2h0m0.1-1.3h0m0.1 29.7h0m0.1-29.3h0m0.2-9.5h0m0.1 39.4h0m0.4-41.4h0m0.1 14.1h0m0.2 18.1h0m0.1-24.4h0m0-0.7h0m0.3 2.9h0m0.1 25.1h0m0 2.5h0m0.4 0.3h0m0-29.7h0m0 26.8h0m0.4-21.6h0m0-9.9h0m0.1 0.5h0m0 33.9h0m0.2-1.1h0m0.5-0.1h0m0.1-28.7h0m0.3 25.1h0m0 8h0m0.9-28.6h0m0.4-4h0m0-0.2h0m0.7 1.1h0m0.2 25.5h0m0.7-24.1h0m0.3 22.5h0m0-27.7h0m0.4-2.4h0m0.5 30.4h0m0.4 6.9h0m0.2 2.1h0m0.2-34.8h0m0-2h0m0.9 30.2h0m0.5-1.9h0m0.2-20.5h0m0.3 21.4h0m0.1-1.4h0m0.4-20.4h0m0.3 0.3h0m0.6-0.7h0m0 1h0m0.1 18.6h0m0.1-20.6h0m0.1-0.6h0m0.3 23.2h0m0-21.5h0m0.3 23.1h0m0.2-26.4h0m0.6 27.1h0m0-34.9h0m0.7 12.1h0m0 19.9h0m0 3.7h0m0.1-3h0m0.1 2.6h0m0.1 0.8h0m0-28.3h0m0-5.2h0m0.1 33.2h0m0.2-28.4h0m0.3 3.3h0m0.4 1.2h0m0 20.7h0m0.2-24.2h0m0.2-1.3h0m0.6 31.5h0m1.2-27h0m0.5 20.9h0m0.1-28h0m0-2.2h0m0 34.5h0m0-31.3h0m0.4 0.8h0m0.1 3.2h0m0.4 1.4h0m0.3 19.6h0m0.2-24.9h0m0.5 3.3h0m0.3 25.5h0m0.4-31.8h0m0.4 3h0m0.2 2.9h0m0 2.7h0m0.1 26.3h0m0.5-6.7h0m0.1 2.4h0m0.1 0.1h0m0.2-25.7h0m0 3.9h0m0.4-9.2h0m0.1 28.6h0m0.1 9h0m0.3-2.5h0m0-27.5h0m0.4 30.1h0m0.4-3.1h0m0.1-4.2h0m0.2 1.4h0m0.2 4.6h0m0.1-7.2h0m0.6-26.4h0m0.1 7h0m0.5 24h0m0-31.5h0m0.3 36h0m0.1-29h0m0-8.3h0m0.4 3.8h0m0.1 24h0m0.1-28.1h0m0 28.6h0m0.9-27.4h0m0.2 4.5h0m0.2 22.1h0m0.2-22.1h0m0-3.8h0m0.5 26.4h0m0 5.4h0m0-27.3h0m0-3.9h0m0.1 26.2h0m0-22.5h0m0.3 0.1h0m0.1-2.8h0m0.2 4.5h0m0.1-7.4h0m0.1 28.4h0m0.1-23.9h0m0 22.6h0m0.3-26.4h0m0.4 34.9h0m0-30.8h0m0.1 23.6h0m0.2 0.7h0m0.5-0.8h0m0.1-22.6h0m0.2 0.5h0m0.1 25.9h0m0.6-27.3h0m0-4.3h0m0.2 30.7h0m0-1.6h0m0.1-28.9h0m0.1 26.5h0m0.1-0.3h0m0.1 15.6h0m0.1-12.6h0m0 3h0m0.2-30.2h0m0.1 3.3h0m0 22.2h0m0.1-22.3h0m0.5-7.5h0m0.2 33.9h0m0.1-3.2h0m0 4.1h0m0-24.8h0m0.1 22.3h0m0-24.7h0m0.3 23.9h0m0.1-26.9h0m0 5.2h0m0.1-10.4h0m0.5 2.6h0m0.2 2h0m0.1 2.4h0m0.1 2.9h0m0 22.5h0m0.1-30h0m0.1 4.1h0m0.1 28.8h0m0-31.5h0m0 5.6h0m0.2 20.4h0m0.3-25.7h0m0.1 26.8h0m0.8-24.3h0m0.2 25.9h0m0.1-26.2h0m0 4.3h0m0.2 18.7h0m0.1 3.1h0m0.8-26h0m0.1 24.7h0m0-23.7h0m0.1 25.8h0m0.1-22.1h0m0.1-1.4h0m0 21.9h0m0-2.3h0m0.1-25.1h0m0.2 6.1h0m0.4 24.9h0m0-5.2h0m0.3-25.1h0m0 27.8h0m0-23.8h0m0.1 21.1h0m0.1 1h0m0-0.6h0m0.4 2.3h0m0.1-28.6h0m0.1 29.9h0m0.4-30.3h0m0.1 6.8h0m0.1 19.9h0m0.2-22.9h0m0.3 23.6h0m0.1-20.6h0m0-3.2h0m0.1-3.2h0m0.1 27.5h0m0.3-23.3h0m0.2-0.3h0m1.1 0.7h0m0.1 20.8h0m0.1-29.1h0m0 30.9h0m0.1-27.9h0m0.3 33.1h0m0.9-4h0m0-25.2h0m0 3.3h0m0 20.7h0m0.3 3.2h0m0-4.6h0m0 4.2h0m0.2-28h0m0.2-3.3h0m0.1 37.3h0m0.3 2.5h0m0-9.7h0m0.1-0.9h0m0.8-30.5h0m0.2 9.3h0m0.3-8.8h0m0.1 7.8h0m0-0.4h0m0.1 34.8h0m0.1-42h0m0.1 29.1h0m0.2-24.3h0m0.1 29.9h0m0.3-25.3h0m0.1-9.2h0m0 0.3h0m0.1 30.9h0m0.2-31.5h0m0.2 5.4h0m0 24.5h0m0.1-2.2h0m0.3 9.9h0m0.6-35.5h0m0.2 5.4h0m0-0.1h0m0.5 1h0m0-1.6h0m0.6 30.1h0m0.1-5.5h0m0.1-25h0m0.2 21.7h0m0.4-28h0m0 0.4h0m0.2 32.7h0m0.1-30.9h0m0 31.5h0m0.4-6h0m0.1-20.9h0m0.1 30.1h0m0.2-8h0m0.1-25.7h0m0.1-1.1h0m0.1 30.7h0m0 1.4h0m0.2-3.6h0m0-24.5h0m0.1 2.5h0m0.6 25.9h0m1.1-0.3h0m0.3-27.1h0m0-0.8h0m0.1 27.2h0m0.2-24h0m0 26.7h0m0.2 0.4h0m0.2-31.9h0m0.1-1.4h0m0.2 29.8h0m0.1-24.6h0m0 21.6h0m0.1-2h0m0.2-21.1h0m0.1-2.8h0m0.4-2.5h0m0.2 1.3h0m0.1 28.5h0m0-24.4h0m0 23.7h0m0.3-25h0m0.3 0.3h0m0.3 23.8h0m0.4 0.8h0m0.5-29.8h0m0.1 27.8h0m0 6.2h0m0-4.4h0m0.2-0.2h0m0.1-27.9h0m0 1.7h0m0.3 4.7h0m0.2 20h0m0.1-0.7h0m0.4-29h0m0.1 31.9h0m0.5-33.2h0m0 33.8h0m0.1-22.6h0m0.6-2h0m0.7 26.4h0m0.2-3h0m0.2-23.7h0m0.1-5.4h0m0.4 26.4h0m0.1 7.1h0m0.1-25.3h0m0.6 18.9h0m0.3 1.3h0m0.1-22.2h0m0.1-2.7h0m0 2.7h0m0.1 27.4h0m0.1-31.5h0m0 26.3h0m0.1-24.8h0m0.4-2.9h0m0.2 2.4h0m0.6-2.4h0m0.3 30.4h0m0.7-4.5h0m0.1 2.8h0m0.1-2.5h0m0.4-19.5h0m0-0.5h0m0.5 27.1h0m0-1.1h0m0.1 0.5h0m0.2-5.5h0m0.3-21.6h0m0.1-1.4h0m0.2 24.7h0m0.6-26.1h0m0.3-3.3h0m0.1 27.9h0m0.3-29h0m0.1 27.7h0m0.1 2.5h0m0-26.6h0m0.2 4.1h0m0.1-0.3h0m0.1 24.1h0m0.3-27.1h0m0.2 3.6h0m0 19.5h0m0.1-19.1h0m0-5.2h0m0.2-0.1h0m0.2-1.2h0m0.1 28.4h0m0.4 5.2h0m0.1-2.3h0m0-1.2h0m0.2-25.7h0m0 24.6h0m0.1-0.9h0m0.2 2.1h0m0.3-28.8h0m0.2 2.1h0m0.1-9.7h0m0 34.3h0m0.2-30.8h0m0.5 28.1h0m0.4-23.7h0m0.5-0.6h0m0 29.6h0m0-30.1h0m0 6.5h0m0.3-3.1h0m0-1h0m0.4 0.2h0m0 27.8h0m0.1-28.7h0m0.5-14.3h0m0.2 17.4h0m0.3-0.2h0m0.2-9h0m0.2 32.1h0m0.1 1.9h0m0.1-29.4h0m0 3.7h0m0.2 23.1h0m0.2-29.1h0m0-2.9h0m0.3 42h0m0-9h0m0.5-23.8h0m0-1.2h0m0.2 24.7h0m0.3-23.4h0m0-0.4h0m0.4-5.6h0m0.2-0.2h0m0.2 6.9h0m0.2-3.5h0m0.2 23.1h0m0.1-23h0m0.3 3.6h0m0 20.4h0m0.2 0.4h0m0.5-0.3h0m0.1-27.1h0m0.9 29.1h0m0.6-21.4h0m0.2 18.6h0m0.2-21.7h0m0.4 22.1h0m0.6 2.8h0m0.6 0.1h0m0.1-26.3h0m0.1 23.4h0m0.1 0.7h0m0.1 4.9h0m0.1-29.6h0m0.3-4.9h0m0.1 6.5h0m0.3 21.8h0m0 7.8h0m0.1-7.3h0m0.1 7h0m0.1-26.3h0m0.4-8.2h0m0.7 37.6h0m0.3-7.8h0m0.1 3.8h0m0.5-27.6h0m0.1 21.9h0m0.4 4h0m0-24.5h0m0 19.8h0m0.2-19.9h0m0.1 23.9h0m0.4-23.2h0m0.4-5.1h0m0.2 1.3h0m0-5.7h0m0.3 8.4h0m0.1-3.1h0m0.1 25h0m0.4-22.9h0m0.1-2.2h0m0.4 0.9h0m0 24.6h0m0.2-24.1h0m0.1 30.7h0m0.1-31.7h0m0.1 25h0m0.5 1.6h0m0.1-32h0m0.1 28h0m0.2-21.7h0m0 21.9h0m0.3 9.2h0m0-9h0m0.1-27.1h0m0.2 4.8h0m0 23.5h0m0-22.6h0m0.1 24.5h0m0-23.2h0m0-8h0m0.4 6.1h0m0.1 21.7h0m0-27.2h0m0.1 27.8h0m0.3-29.7h0m0.2 5.2h0m0.5 23.8h0m0-23.3h0m0.4-0.9h0m0.2 4h0m0.3-6.5h0m0 7.1h0m0.2 22.8h0m0.1-24.8h0m0 3.1h0m0.1-2.1h0m0.1 1.2h0m0.1 19.1h0m0.3-18.6h0m0.2-6.9h0m0 29.9h0m0.2-4.1h0m0.1-20.4h0m0.1-1.9h0m0.1 0.3h0m0.3-1.2h0m0.2-3.2h0m0.2 26.1h0m0.2-22.2h0m0 2h0m0.1 20.6h0m0.1-18.5h0m1.2 20.4h0m0.1-22.6h0m0.5 22.4h0m0.3-21.3h0m0.1 0.8h0m0.5 20.7h0m0.1-0.5h0m0.1-26.2h0m0.3 25h0m0.1-0.4h0m0-25.5h0m0.1 27.4h0m0.1-22.4h0m0.3 22h0m0 1.7h0m0.2-3.3h0m0.1-20.4h0m0.2 20.5h0m0.1-19.6h0m0.4 22.3h0m0.4-22.5h0m0.2-6.5h0m0.2 26.8h0m0.2 3.7h0m0.1-31.3h0m0.3 27.3h0m0.4-19.9h0m0.7 23.1h0m0.3-26.5h0m0.3 24.4h0m0.1 0.9h0m0.3-26.8h0m0.1 30.7h0m0-35.9h0m0.1 7.8h0m0.2 29.3h0m0.2-30.8h0m0.1 1.7h0m0 1h0m0 25.7h0m1.4-30.7h0m0.1 2.4h0m0.1-2.5h0m0.1 26.1h0m0.2-23.1h0m0.4-0.7h0m0.1 2.8h0m0.3 23.2h0m0.5-30.4h0m0.7 9h0m0.1-1.8h0m0.5 27.5h0m0.3-30.2h0m0.4 2.3h0m0.2 21.5h0m0.2 4.2h0m0-37.3h0m0.3 36.9h0m0.4-3.6h0m0.6-18.8h0m0.2 28.9h0m0 4.2h0m0.4-11.6h0m0.3 2.9h0m0.1-5.8h0m0.4-21.5h0m0.2 30.9h0m0.4-30.3h0m0.2-0.5h0m0.1 23.1h0m0.3-20.4h0m0.1 22.5h0m0.3-4.1h0m0.1-18.5h0m0.3-2.7h0m0.1 0.1h0m0 22.7h0m0.2-1.7h0m0.5-26.9h0m0 30h0m0.1-25.4h0m0.6 2.5h0m0.2 25.1h0m0.4-4.7h0m0.3-29.1h0m0.2 38.8h0m0-9.7h0m0.5-23.9h0m0.1 2.7h0m0.1 21.8h0m0.3 3.6h0m0.1 1.2h0m0.5-29.5h0m0 1.6h0m0.3 26.5h0m0.2-28.1h0m0.1 4.9h0m0 21.5h0m0.1 1.7h0m0.5-24.6h0m0.4-2.3h0m0.1 0.5h0m0.2-0.2h0m0.5-2.5h0m0 25.2h0m0.3-25.9h0m0.3 5.4h0m0.3-3.6h0m0.3 27.9h0m0-2.1h0m0.3-23.1h0m0 32.3h0m0.5 2.3h0m0.1-32.3h0m0.6 18.4h0m0.3 2.2h0m0.5-20.3h0m0.4-6.9h0m0.2 3.7h0m0.1-3.8h0m0.1 37h0m0-6.5h0m0.3-31.3h0m1.5-4h0m0.1 30.7h0m0.9-21.8h0m0 21.4h0m0.3 0.8h0m0.4-24.8h0m0.5 25.9h0m0.3-0.5h0m0.2-20.5h0m0.2 40.4h0m0-43.2h0m0.1 27.6h0m0-5.5h0m0.1-22.1h0m0.1 23.7h0m0.4-20.2h0m0.5-6.6h0m0.3 5.3h0m0.5 20.4h0m0.3-28.5h0m0.2 28.1h0m0 7.8h0m0.6-27.6h0m0.2 22.8h0m0.2 0.7h0m0.2-1.7h0m0.1 2.4h0m0.1-34.9h0m0.3 6.5h0m0-1h0m0.1 26.2h0m0.3-21.3h0m0.1-1h0m0.3 25.4h0m0-24.9h0m0.2-2.6h0m0.7 25.7h0m0.5-28.2h0m0 5h0m0.4 23.6h0m0.1-26.3h0m0.2 23.4h0m0.1 5.9h0m0.1-2.4h0m0.4-27.9h0m0.9 31.1h0m0.5-5.2h0m0.6-1.1h0m0.3 1h0m0.1-0.4h0m0.1-28.1h0m0.1 7.7h0m0 0.4h0m0.2-11h0m0.2 32.9h0m0.2-3.1h0m0.2 8.2h0m0-33.3h0m0.2 30.5h0m0.1-5.7h0m0 9.5h0m0.2-36.4h0m0.1 29h0m0.1 0.7h0m0.1-21.3h0m0 24.2h0m0.1-24.8h0m0.7 23.3h0m0-29.2h0m0.3 26h0m0-0.2h0m0.1-26.4h0m0.4-2.1h0m0.1 2h0m0.1 30.8h0m0-27.8h0m0.9 23.1h0m0-19.3h0m0.2 27.7h0m0.1-7.6h0m0.6 10.5h0m0.3-41.3h0m0.1 30.6h0m0.1 2.1h0m1.7 7.1h0m0.1-30h0m0 24.1h0m0.1 3h0m1.8-31.5h0m0.4 0.5h0m0.1 27.8h0m0.2 2.1h0m0.2-2.5h0m0.1-0.4h0m0.3 3.4h0m0.3-4.6h0m0.1-21.4h0m0 21h0m0.3 10h0m0.5-9.8h0m0.2-2h0m0.1 2.9h0m0.2-26.2h0m0.1 1.9h0m0-4.3h0m0.2 4.6h0m0.1 2.5h0m0.2-5.5h0m0.1 31.5h0m0.2-5.5h0m0.1-28.1h0m0 29.1h0m0.2 4.9h0m0.4-30.9h0m0.6 36.4h0m0.5-12h0m0-27.4h0m0.7 31.9h0m0.3 0h0m0.1-1.7h0m0-27.4h0m0.5 2.3h0m0.2 0.4h0m0.3 23.9h0m0.1 2.9h0m0-3.6h0m0.6 0h0m0-1.4h0m0.6-20h0m0.4-2.6h0m0.2-2.2h0m0.8 4.6h0m0.1 25.7h0m0.3 4h0m0-8.3h0m0.2-23.7h0m0.3-8.6h0m0.2 6.1h0m0-3.6h0m0.2 4h0m0 26.3h0m0.1-26.2h0m0.4 2h0m0.7 21.3h0m0.2-23.6h0m0 28.9h0m0.3-1.5h0m0.1-27.2h0m0.1 30.9h0m0.2-26.4h0m0.2-7.9h0m0.3 3.3h0m0.2-3.6h0m0-1.3h0m0.1 7.4h0m0.1 2h0m0.2 0h0m0 20.6h0m0.1-23.4h0m0.4 0.4h0m0.3 24.8h0m0.1-3.5h0m0.1-32.6h0m0.3 7.2h0m0.1 26.1h0m0.1-22.3h0m0.1-3.4h0m0.1 5.9h0m0.3-0.7h0m0.4 21h0m0.3-25.4h0m0.4 5.4h0m0.3 22h0m1-1.8h0m0 0.7h0m0.1-21.4h0m0 19.4h0m0.1 4.9h0m0.9-27.2h0m0.2 1.5h0m0.2-3.2h0m0.6 3.1h0m0.1-1.4h0m0.1 29h0m0-34.6h0m0 28.5h0m0.4 2.8h0m0 6.2h0m0-9.4h0m0 3.9h0m0-2h0m0.3-23.3h0m0.1-3.2h0m1 24.5h0m0 0.3h0m0-23.9h0m0.1 26.3h0m0-23.1h0m0.3-10.1h0m0.2 11.4h0m0-1.4h0m0 26.6h0m0.6-27.7h0m0.2-1.4h0m0.2 22.9h0m0 0.6h0m0.3-21.1h0m0.4-6.9h0m0.5 8.3h0m0.2 19h0m0.2-27.6h0m0.2 2.5h0m0.2-1.6h0m0 7.1h0m0.3 26.9h0m0.1-30.9h0m0.1 31.7h0m0.3 1.1h0m0-31.9h0m0.1 22h0m0.1-20.2h0m0.1-2.6h0m0.3 22.9h0m0.1-20.6h0m0.1-2.7h0m0.8-2.5h0m0.1 33h0m0.2-4.3h0m0.2-25h0m0.1 3.4h0m0.2-3.4h0m0 31h0m0.1-27.2h0m0.5-2h0m0.1-2.4h0m0-4.4h0m0.2 2.8h0m0 25.1h0m0.3-26.3h0m0.1 30.6h0m0.2-27.9h0m0 31.3h0m0.1-28.8h0m0.2 25.8h0m0.1-4.3h0m0.1-28.8h0m0.5 31h0m0.4-25.5h0m0.4 1.6h0m0.6 22.2h0m0.2 0.1h0m0.1-20.9h0m0.4-10.5h0m0.8 8.6h0m0.1-1h0m0.1 26h0m0.5-25.5h0m0.1 28.1h0m0.1-33h0m0.3 28.6h0m0.1-35.2h0m0.1 6.1h0m0.4 1.1h0m0.2 29.7h0m0.1 0h0m0.1-26.2h0m0.4-1.8h0m1.4 2.9h0m0.2 1.6h0m0.5-6h0m0.2 26.9h0m0-0.2h0m0.1-19.8h0m0.1-5.9h0m0.1 30.9h0m0.1-3h0m0.1 3.1h0m0.2-29h0m0.3 24h0m0.4 5.3h0m0-3.1h0m0.2 1.2h0m0.7-27.9h0m0.4 1.2h0m0.2 22.3h0m0-20.6h0m0.1 1.6h0m0.2-3.5h0m0-2h0m0.1 27.4h0m0.2-30.7h0m0.1 6.7h0m0.1 22.6h0m0.6 2.5h0m0.1-2h0m0.4 2.6h0m0.3-24h0m0 25.7h0m0.1-30.2h0m0.2 25.6h0m0-23.7h0m0.3 24.4h0m0.1-23.1h0m0.4 23h0m0.2-0.1h0m0-21.2h0m0.7 21.6h0m0.1-28.4h0m0.2 25.8h0m0.1 3.3h0m0.1-2.6h0m0.3-21.5h0m0.3 20.9h0m0 5.6h0m0.3-35.7h0m0.1 7.5h0m0.1-4.4h0m0.4 3.7h0m0.2 26.8h0m0-1.6h0m0.2-22.4h0m0.1-0.1h0m0 23.6h0m0.1 7.6h0m0.4-32.7h0m0.3 23.7h0m0.5-20.8h0m0 24.8h0m0.2-27.6h0m0.1 3.2h0m0.4 22.4h0m0.1-2.4h0m0.2-26.9h0m0.1 6.6h0m0.1 26h0m0.7-4.7h0m0.1-33.2h0m0.2 4.3h0m0 7.6h0m0.1-0.7h0m0.2 0.4h0m0.3-2h0m0.7 25h0m0.3-25.6h0m0.2-3.9h0m0.1 7h0m0.1-7.9h0m0.1 7.7h0m0 19.5h0m0.1-26.7h0m0.1 30h0m0.2-27.8h0m0.3 28h0m0.5 7h0m0-30.7h0m0-4.8h0m0.1-3.9h0m0.2 33.7h0m0.1-31.9h0m0 7.8h0m0.8 22.4h0m0.1-24.6h0m0.2 25.8h0m0.1 4.3h0m0.7-1.9h0m0-27.6h0m0.1 25.1h0m0.2-0.1h0m0.2-3.6h0m0.3 10.6h0m0.3-10.3h0m0.4 5.6h0m0.1-6.2h0m0.2-25.1h0m0.2 3h0m0.5 1.6h0m0.2-7.6h0m0.1 8.2h0m0.2 30.4h0m0.1-6.9h0m0-3.5h0m0.2 2.4h0m0 1.7h0m0-31.1h0m0.1 35.3h0m0-0.3h0m0.5-29h0m0.1 22.2h0m0-25h0m0.5 4.6h0m0.3 20.7h0m0.1-23.3h0m0-1.9h0m0.2 2.1h0m0.3-4.6h0m0.1 1.2h0m0.4 25.4h0m0-23.9h0m0.3 25.4h0m0.1-2.2h0m0.1 1.9h0m0-32h0m0.2 37.2h0m0-32.8h0m0.2 34.2h0m0.4-3.7h0m0.1-4.4h0m0.1 0.9h0m0-20.1h0m0.3-2.2h0m0 24.7h0m0.1-24.5h0m0.2 24.5h0m0.4-25h0m0.2 22.6h0m0.1-27.4h0m0.3 29.6h0m0-24.5h0m0.3 22.2h0m0-26.6h0m0 30.4h0m0.1-31h0m0 3.7h0m0.1 22.2h0m0.1 10.7h0m0.3-29.3h0m0.1 18.7h0m0.4-22.8h0m0.1 23.1h0m0.1-20.7h0m0 0.4h0m0.2 20.3h0m0.2 0.6h0m0-25.2h0m0.5 26.8h0m0.5-1.7h0m0-26h0m0.7 31.2h0m0.5-3.3h0m0.1-1.6h0m0.3 0.9h0m0-1.6h0m0.3-25.3h0m0.2-0.3h0m0.3 4h0m0.1 21.7h0m0.5 4.2h0m0.5-3.7h0m0.2-0.1h0m0.1 7.7h0m0-8.3h0m0.3 4.4h0m0.1-5.1h0m0.1 0.9h0m0.4-0.3h0m0-25.9h0m0.1-1.2h0m0.2 26.9h0m0 5.4h0m0-5.4h0m0-25.4h0m0.3 5h0m0.1 23.4h0m0-35.9h0m0.1 11.1h0m0.1 1.3h0m0 29.9h0m0.1-8h0m0.2-22.6h0m0.6-1.2h0m0.3 2.6h0m0.1 25.6h0m0.1-31.1h0m0 5.1h0m0-4h0m0.2 5.2h0m0.7-5.8h0m0-2.6h0m0-3.2h0m0.1 9.1h0m0 22.7h0m0.1 9.5h0m0-4.9h0m0.1-26.7h0m0.3 26.6h0m0.3-27h0m0.2 23h0m0.2-20.3h0m0.2 19.3h0m0.1-20.2h0m0 22.5h0m0.4-23.3h0m0.1-7.8h0m0 30.2h0m0.1-24.1h0m0 23.6h0m0.1 1.5h0m0.2-22.7h0m0.1 22.9h0m0.2-0.1h0m0.2-27.6h0m0.1 37.7h0m0-36.9h0m0.1-2.8h0m0.3 27h0m0.2 6.2h0m0.1-5.8h0m0.4 1.4h0m0.1-22.4h0m0.4 25.4h0m0.1 5.4h0m0.2-30.8h0m0-1.1h0m0-2.1h0m0.2 24.6h0m0.1-22h0m0.3-6.1h0m0 31h0m0.2 1.9h0m0.2-25.4h0m0-3.2h0m0.6-5.7h0m0.1 5.8h0m0.1 22.4h0m0-18.9h0m0 21h0m0.1-24.3h0m0.1 22.7h0m0.2 9h0m0.1-29h0m0.7 30.8h0m0.1-5.6h0m0-27.5h0m0.1 1.6h0m0 30.4h0m0.2-8.3h0m0.1-21.3h0m0.5 21.8h0m0.6-22.3h0m0.1 24.7h0m0.2-1.4h0m0-2h0m0.5-27.2h0m0.3 25.9h0m0.2 7.5h0m0-31.1h0m1.1 1.3h0m1.1-7.2h0m0.3 8.6h0m0.2 2.1h0m0.1-0.2h0m0 23.1h0m0.1-27.7h0m0.1 3.6h0m0.1 25.6h0m0.3-28.4h0m0.3 3.1h0m0.1-0.2h0m0.2 28.8h0m0.3-28.1h0m0-3h0m0.1-1.9h0m0.1 3.9h0m0.6-8.4h0m0.2 37.2h0m0.2-40.6h0m0 0h0m0.1 12.3h0m0-2.5h0m0.4-1h0m0.1-5.5h0m0 7.2h0m0.3 23.1h0m0.1-28h0m0.2 4.5h0m0.1-4h0m0.2 31.5h0m0.1-30.8h0m0.1-1.9h0m0.1-0.8h0m0.4 30.9h0m0-2.6h0m0-20.7h0m0.1-3.7h0m1.1 2.9h0m0.5 22.6h0m0.2-0.1h0m0.4-25.9h0m0.3 5.5h0m0.1-3.1h0m0.4-5.6h0m0.1 8.1h0m0.2-5.6h0m0.1 25.8h0m0.1-27.2h0m0.1 27h0m0-24h0m0.2 31h0m0.3-28.9h0m0.1 0.5h0m0.3 1.1h0m0.5 23.3h0m0.3-0.3h0m0-3.6h0m0.1-19h0m0-1.5h0m0.2-0.8h0m0-2.2h0m0.1 31.1h0m0.3-35.5h0m0.1 31.5h0m0.3-24.3h0m0 1.7h0m0.2 24.2h0m0-3.7h0m0.2-27h0m0.1 31.1h0m0.3-32.7h0m0.1 27.3h0m0.1 4h0m0.2 0h0m0.5-24.5h0m0.5 25.4h0m0.1 2h0m0.3-33.8h0m0.2 29.9h0m0.4-2.8h0m0.2 9.7h0m0-8.1h0m0.3 0.1h0m0.4-24.9h0m0.3-2.2h0m0 0.3h0m0.1 28.9h0m0.5-32.5h0m0.1 28.8h0m1.3-23.4h0m0.7 27.1h0m0-29.2h0m0.1 1.1h0m0.4 25.4h0m0.1 0h0m0.1-21.8h0m0.1 32h0m0.4-32.7h0m0 25.6h0m0.1-3.8h0m0.1 0.7h0m0.2 5.8h0m0.6-5.1h0m0.1-32.2h0m0.1 31.5h0m0.4 5.5h0m0.1-28.8h0m0.2 21.6h0m0.1-25.6h0m0.1 33.7h0m0-28.5h0m0.3-0.6h0m0.4 23.5h0m0.1-28.1h0m0.3 5.5h0m0.2 0.3h0m0.1 26h0m0.5-4.5h0m0.1-1h0m0.1-0.5h0m0.1-23.7h0m0 25.8h0m0.3-23h0m0.3 35.3h0m0.2-8.8h0m0.2-24.7h0m0.2 24.2h0m0.1-25.9h0m0.3 33.8h0m0-12.6h0m0 0h0m0.2-0.2h0m0.1-21.5h0m0-2.4h0m0.4 27h0m0.2-29.2h0m0.1 0.7h0m0 0.6h0m0.6-2.9h0m0.3 37.2h0m0.1-34.1h0m0 1.7h0m0.6 25.1h0m0.1-23h0m0.1 1.2h0m0.6 20h0m0.6-25.5h0m0.3 2.2h0m0.2 2.3h0m0.1 23.1h0m0.1-24.5h0m0.1 25.8h0m0.3 1.5h0m0 0.5h0m0-24.8h0m0.2 29h0m1.5-9.5h0m0.4 1.2h0m0.2 0.5h0m0.1 5.2h0m0.2-29.7h0m0.1 0h0m0.3 3h0m0.3-4h0m0.1 24h0m0.3-19.2h0m0.1-2.7h0m0 28.3h0m0.1-29.8h0m0.4 1.6h0m0.4 25.3h0m0-1.7h0m0.6-0.9h0m0.2-26.3h0m1 31.4h0m0.2 4.7h0m0-32.7h0m0.1 26.5h0m0.2-26.3h0m0-1.8h0m0 28.3h0m0-29.6h0m0.1 29.7h0m0-1.7h0m0.2-25.9h0m0.6-1h0m0.8-3.3h0m0.2 6.3h0m0 31.8h0m0.2-34.1h0m0 25h0m0.5-29.1h0m0.2 3.8h0m0.1 27.2h0m0-23.6h0m0.2 19.9h0m0.1-0.3h0m0 8.3h0m0.4 2.6h0m0-10.4h0m0.1-23.9h0m0.4-2.9h0m0.1 6.6h0m0.2 31.5h0m0.6-11.8h0m0.1-20.5h0m0-5.6h0m0.1 25.9h0m0.1 16.4h0m0.2-15.2h0m0.2-25.4h0m0.2 29.5h0m0.1-29.2h0m0.3 38.3h0m0-11h0m0.1 0h0m0.2-1h0m0.4-0.7h0m0.2-21.2h0m0-0.2h0m0.1 21h0m0-27.7h0m0.6 31.7h0m0-27.3h0m0.3-4.2h0m0.1 2.1h0m0 24.4h0m0.1 5.2h0m0.2-23.9h0m0-0.7h0m0.1 26.5h0m0.2-29.8h0m0.7 25.5h0m0.2-30.9h0m0.1 5.6h0m0.1-7.7h0m0.4 9.1h0m0.5 22.7h0m0-21.4h0m0.1 23.3h0m0-2.9h0m0.2-23.6h0m0.1 3h0m0.1-4.6h0m0 25.6h0m0.6-25.3h0m0.1 2.6h0m1 28.7h0m0.6-26.3h0m0.4-2.7h0m0.4 23.6h0m0.1 4.3h0m0.4 2.2h0m0.3-8h0m0 0.6h0m0.6 3h0m0.2 4.5h0m0.2-31.6h0m0 26.2h0m0.1 1.1h0m0-23.3h0m0-6.4h0m0.1 34.4h0m0.1-37.5h0m0.1 35.6h0m0.1-32.3h0m0 31.6h0m0.1-32.3h0m0 1.7h0m0.5 0.2h0m0.1 32.4h0m0.1-4.5h0m0.1-22.3h0m0 18.6h0m0.7-20.1h0m0.8-3.7h0m0.1 27.5h0m0.8-1.2h0m0.4 4h0m0.1-4.4h0m0.4-23.8h0m0.2 0.3h0m0 2.7h0m0.1 25.3h0m0.1-26.7h0m0.1 0.9h0m0 0.6h0m0.1 21.6h0m0-30.5h0m0.2 31.5h0m0-23.1h0m0.3 24.1h0m0.1-33.4h0m1.1 29.8h0m0 3.5h0m0.1-23.1h0m0.1 20.9h0m0.9-1.4h0m0.3-20.8h0m0.3-5.8h0m0.1 6.7h0m0.3 18.5h0m0.3-22.6h0m0 25.4h0m0-1h0m0.1-32.7h0m1 35.3h0m0 2.7h0m0.1-26.7h0m0.6 21h0m0 2.2h0m0.3-31.3h0m0.1 7.4h0m0 22.2h0m0.2 4.4h0m0.1-3.5h0m0.2 4.7h0m0.2-25.8h0m0.8-4.2h0m0.1 3.8h0m0.4-4.3h0m0 28.4h0m0.1-26.5h0m0.3-1.9h0m0 3.6h0m0.2 19.9h0m0.1-22.7h0m0.2-1.5h0m0 4.2h0m0.1 0.3h0m0.3 28.6h0m0-34.3h0m0 28.8h0m0.4-2.1h0m0.2-0.4h0m0.3 1h0m0.4-24.9h0m0.7 25.2h0m0.1 0.3h0m0-22.2h0m0.4 0.2h0m0.5 20.2h0m0.2-27.8h0m0 27.9h0m0.2 8h0m0-33.9h0m0.2 27.1h0m0.2-30.3h0m0.3 2.4h0m0.3 29.7h0m0.8-24.7h0m0.4 1.5h0m0-2.3h0m0.4 26h0m0.4-3.5h0m0.1 5.7h0m0.1-30.8h0m0.1 1.1h0m0.5 24.3h0m0.1 0.3h0m0.1-25.6h0m0 28h0m0.5-27.1h0m0.3-0.1h0m0.2-5.1h0m0.2 5.8h0m0.2 36.4h0m0.2-32.8h0m0.1 20.2h0m0.1 3.9h0m0.1-4.6h0m0.3-23.6h0m0.1 23.4h0m0.1 1.2h0m0-22.8h0m0.2 27.5h0m0.7-28.1h0m0.1-4.7h0m0.4 6.5h0m0.1-0.1h0m0.6 20.2h0m0.2-21.4h0m0.3 1.5h0m0 25.6h0m0.3-25.5h0m0.3-3.7h0m0.6 3h0m0.3 20.4h0m0.1-24.6h0m0.1 30.7h0m0-0.5h0m0.7-27.6h0m0.1 21.5h0m0-22.6h0m0.6-5.3h0m0.3 27.7h0m0.1-27.2h0m0.1 6.4h0m0.3 26.6h0m0.1-1.5h0m0 2.8h0m0.1-0.3h0m0-27.3h0m0.1-2.3h0m0.1 3.8h0m0.1-5.3h0m0.3 30.6h0m0-25h0m0.1 27.6h0m0-33.8h0m0.2 25.7h0m0.1-25.5h0m0.6 29.7h0m0.1-4.7h0m0.6-28.5h0m0.2 6.7h0m0.6 21.4h0m0.1 4.8h0m0.2-25.1h0m0 23.5h0m0 2.7h0m0.2-30.6h0m0.2 28.5h0m0.5 3h0m0.2-29h0m0 2.5h0m0.7-1.1h0m0 23.8h0m0.2 6.7h0m0-6.4h0m0.1-0.6h0m0.4 0h0m0.1 4.7h0m0.2-30.5h0m0.3 2.2h0m0.1-0.7h0m0.2 24.1h0m0.2 0.3h0m0-1.2h0m0.1-21.8h0m0.2-4.2h0m0.5 28.1h0m0.4-32.2h0m0.2 30.1h0m0.1-20.7h0m0.2-9h0m0.2 8.7h0m0 24h0m0-25.6h0m0.2-3.7h0m0.2 28.7h0m0.4-23.7h0m0.1 20.7h0m0.1-0.7h0m0 0.8h0m0.1 1.4h0m0-1.7h0m0.1-19.4h0m0.3 25.6h0m0.1-35.7h0m0 35.3h0m0.2-26.6h0m0.1 27h0m0.2-6.3h0m0.4 4.7h0m0.1-4.6h0m0.5-26.5h0m0.5 4.2h0m0.1 21.5h0m0.1-21h0m0.4 21.1h0m0.1 3.9h0m0.1-1.2h0m0.2-22.8h0m0.1-2h0m0.2-1h0m0.2 28.4h0m1.1 2.1h0m0.2-3.2h0m0.3-23.1h0m0 20.9h0m0.7 2.5h0m0-1.7h0m0.5-21.6h0m0-0.7h0m0-3.2h0m0.1 0.6h0m0.2 0.5h0m0.3 23h0m0.1-21.5h0m0.2 21.8h0m0.1-21.4h0m0 31.8h0m0.2-11.9h0m0.8 0.3h0m0.2 1.8h0m0.3 8.7h0m0.5-29.6h0m0.4-9.7h0m0 4h0m0.2-1.2h0m0.3 7h0m0.1-1h0m0.1 27h0m0.3-31.8h0m0.3-2.5h0m0.2 2.9h0m0 4.2h0m0.2-3.3h0m0.2 25.9h0m0.1-2.3h0m0.5 3.9h0m0.4-24.2h0m0.1 27.6h0m0-28.4h0m0.4-1.1h0m0.6 22.3h0m0.1-22.2h0m0 21.2h0m0.3-20.2h0m0.8 27.5h0m0.2-0.6h0m0.1-6.2h0m0.1-0.2h0m0.2-31.3h0m0.2 10.7h0m0.1-0.6h0m0.2 23.1h0m0.3-25.2h0m0.2 23.9h0m0.3-27.7h0m0.4 32h0m0.4 0.1h0m0.5-25.5h0m0.1 1.4h0m0.2 19.7h0m0.6-22.9h0m0.4 0.3h0m0.2 22.6h0m0.8-26h0m0.1-1h0m0 30.2h0m0.1-25.3h0m0.2 1.8h0m0.2 19.9h0m0 10.1h0m0.2-31.9h0m0.1-0.8h0m0.2 25h0m0.2 6.7h0m0.2-9h0m0.1-19.4h0m0.2 20.8h0m0.6 0.7h0m0.6-1.3h0m0.9 7.4h0m0.2-4.8h0m0.1-25h0m2.2 23.6h0m0.1-23.4h0m0 2.6h0m0.5-2.4h0m0.5 0.6h0m0.3-1.6h0m0.3 32.5h0m0.3-9.3h0m0.2-26.8h0m0 1.2h0m0.3 1.9h0m0.2 24.3h0m0.6-20.9h0m0.1 19.1h0m0.7 2.3h0m0.5-23.1h0m0 1.6h0m0.1 24h0m0.5 0.4h0m0.1-32.2h0m0.1 6.7h0m0.1-5.7h0m0.1 2.5h0m0.2 23.2h0m0.1-21h0m0.1 21.8h0m0.3-20.4h0m0.2 23.5h0m0.2-23.7h0m0.2 1.1h0m0-3.3h0m0 3.5h0m0.6 20.7h0m0.1-1.1h0m0.2 4.1h0m0-5h0m0 2.4h0m0.3-20.8h0m0.3-3.5h0m0 30.8h0m0.3-38.8h0m0.4 35.8h0m0.8-2.8h0m0.9-29.4h0m0 4h0m0.2 30.2h0m0.1-0.6h0m0 1.2h0m0.2-8.4h0m0.1-28.2h0m0.2 29h0m0.1-29.3h0m0.4 29h0m0.1 6.7h0m0.3-25.7h0m0.2 20.9h0m0.2-25.2h0m0 27.1h0m0.2-28.5h0m0 1.2h0m0 27.7h0m0.4-4.4h0m0-21.8h0m0.1 25.5h0m0-23.7h0m0.2 0.7h0m0-3.6h0m0.1 23.3h0m0 3.8h0m0.2-24.4h0m0.2-1.3h0m0.2 27.3h0m0.2-26.6h0m0.1 22.9h0m0.1-21.3h0m0.1 19.8h0m0.5-21h0m0-2.3h0m0.7 3.7h0m0.2-3.5h0m0.5-1.6h0m0 34h0m0.4-32.5h0m0.5 1.6h0m0.3 21h0m0-22.4h0m0 28.8h0m0.4-3.2h0m0.4-26.3h0m0.6 0h0m0.1 24.1h0m0 9.2h0m0.2 4.9h0m0.2-8h0m0-6.6h0m0.1 2.6h0m0 4.6h0m0.2-4.7h0m0.5 3.8h0m0.2-32.3h0m0 32.2h0m0.3-6h0m0.3-23.4h0m0.2-3.7h0m0.1 27.2h0m0.4-29.3h0m0.2 9.6h0m0.2-3.2h0m0.1 25.9h0m0.1-1.9h0m0-2.3h0m0.3 0.5h0m0.6-0.4h0m0.1 3.9h0m0.2-26.5h0m0 2.8h0m0-1.5h0m0.2 30.3h0m0.6-1.6h0m0.1-26.8h0m0.1 22.1h0m0.2-22.7h0m0.5-11.7h0m0.2 34.8h0m0.3-21.9h0m0 26.5h0m0-32.3h0m0.1-1.8h0m0.1 5.7h0m0.1 23.1h0m0.2-22.7h0m0.4 21.7h0m0.2-20.3h0m0.3-0.9h0m0.3 0.4h0m0.2-3.3h0m0.1-12h0m0 35h0m0.1-0.2h0m0.2 1.1h0m0.1 11.6h0m0-45.3h0m0.3 35.6h0m0.1-26.5h0m0.2 3.9h0m0.8 32h0m0.2-42.2h0m0.2 30.6h0m0.1-25.1h0m0.8 4.6h0m1.2-0.4h0m0.1 20.5h0m0.6-22.4h0m0.6 26.3h0m0.1-1.3h0m0.6-23.3h0m0 20.6h0m0.3 3.8h0m0.1-31.4h0m0.1 7.9h0m0.2-8h0m0.2 4.1h0m0.2 25.4h0m0.2-21.4h0m1.3-3.4h0m0.1-2.6h0m0.1 32.8h0m0.3-8.3h0m0 4.6h0m0.5 1.5h0m0.4-33.1h0m0.3 4.3h0m0.1 4.5h0m0.2-2.6h0m0.3-9.3h0m0.3 10.1h0m0 1h0m0.2-6.7h0m0.7 5.1h0m0.4 1.5h0m0.6 0h0m0.4 20.1h0m0.3-23.5h0m0 26.9h0m0.1-4.1h0m0.2-21.1h0m0.3 2.3h0m1.2-0.7h0m0-1.1h0m0.2 24h0m0.3-2.6h0m0-1.1h0m0.1-23.2h0m0 2.7h0m0.1 25.6h0m0.2-23.6h0m0.1-5.2h0m0.2 24.7h0m0.1-26.7h0m1 3.8h0m0.3 24.2h0m0.5-22.5h0m0.2 24.4h0m0 1.7h0m0.3-26h0m0-8.3h0m0.1 30.9h0m0-25.7h0m0.1 28h0m0 0.7h0m0-30.8h0m0.1 25.7h0m0.4 3.4h0m0.2 1.9h0m0.2-24.6h0m0.1 34h0m0.2-7.4h0m0.4-26.7h0m0.9-2.5h0m0.1 23.7h0m0-22.1h0m0.2-2.6h0m0.7 1h0m0.3-6.3h0m0.1 3.7h0m0 1.1h0m0.5 27.3h0m0.3 7.5h0m0.4-36.4h0m0.5-4h0m0.6 2.7h0m0.1 41.1h0m0.1-11h0m0.7-26.3h0m0 31.3h0m0.2-6.6h0m0.7-0.7h0m0.4 1.7h0m0-3.4h0m0.1 1.1h0m0.1-0.5h0m0.1 3h0m0.7 0.2h0m0-23.4h0m0.1 21.7h0m0.2-26.6h0m0.4 28h0m0.3-0.6h0m0.1 0h0m0.2-21.9h0m0 23.7h0m0.2-29.6h0m0.2 2.4h0m0.7-6h0m0.1 6.8h0m0.1 1.1h0m0.3-1.5h0m0 24.6h0m0.3 1.9h0m0.2-0.4h0m0.1-24.1h0m0.2 27.2h0m0-33.7h0m0.1-0.6h0m0.1 26.8h0m0.3 0.6h0m0.1 0.3h0m0.4-19.3h0m0.3-3.5h0m0.1 3.6h0m0.1-4.6h0m0.2 1.3h0m0-10.3h0m0 8.8h0m1.2 31.2h0m0.2-4.6h0m0 4.5h0m0-7.4h0m0-20.4h0m0.1 23.8h0m0.3-23h0m0-9h0m0.6 9.7h0m0-11.7h0m0.1 10h0m0.1 0.8h0m0 20.2h0m0.3 4.2h0m0.1-23.7h0m0.1 21.5h0m0.2-0.1h0m0.2 3.1h0m0.4-4h0m0.2-24.1h0m0 1.6h0m0.1 20.6h0m0.1 9.6h0m0.2-29.3h0m0.2-3.9h0m0.1 29.4h0m0.2-3.1h0m0.3-26.2h0m1.1 28.2h0m0.5 0.6h0m0.4-1.6h0m0.2 7.4h0m0.1-30.1h0m0.3 20.2h0m0.2-20.2h0m0.2-7.4h0m0.3 5.5h0m0.2 20.8h0m0 8.9h0m0-5h0m0.4 5.7h0m0-28.4h0m0.2-0.3h0m1-9.5h0m0.8 2.3h0m0.1 5.1h0m0 1.1h0m0.2-2.9h0m0 3.2h0m0.1-4.4h0m0.1 0h0m0 3h0m0.2 24.3h0m0 7.1h0m0-7.9h0m0.1-25.9h0m0 28.7h0m0.1-23.9h0m0.3-7.3h0m0 27.4h0m0-19.3h0m0.1 23h0m0.2-26.9h0m0.4 2.9h0m0.5-3.9h0m0.1 3.7h0m0.1 21.7h0m0.2 3.6h0m0.1-31.8h0m0 5.5h0m0.1 24.2h0m0-25.9h0m0.3-4.8h0m0.2 5.9h0m0.1 35.8h0m0.5-36.6h0m0.2-5h0m0.1 29.3h0m0 0.5h0m0.1-22h0m0 21.8h0m0.4 2h0m0.2-30.2h0m0.2 3.1h0m0.4 2.5h0m0-3.2h0m0 30.2h0m0.2-0.6h0m0.1-25.7h0m0.1 20.3h0m0.2 6.1h0m0.3-6.8h0m0.1 2.1h0m0.3-24.7h0m0.1 22.5h0m0-21.3h0m0.1 28.7h0m0.3-4.9h0m0.7-26h0m0.1 23.6h0m0-22.4h0m0.1 27.3h0m0-24.1h0m0.3 19.3h0m0.5-24.6h0m0-4.4h0m0.1 9.1h0m0-1.1h0m0.4 0.7h0m0.1-14.5h0m0.2 38.1h0m0.2 2.9h0m0.1-34.3h0m0.5 28.5h0m0.2 3.3h0m0.2 7.8h0m0.3-33h0m0 0.1h0m0.5 30.5h0m0.1-32.8h0m1.2-0.8h0m0.2 4h0m0.3 1.5h0m0.4 30.2h0m0-10.9h0m0.3 5.9h0m0.5-5.8h0m0.3-22.8h0m0.1 23.6h0m0.1-20.7h0m0.4 22.7h0m0.3 1.9h0m0.3-23.5h0m0.1 22.7h0m0.1-25.1h0m0.1 27h0m0.3 0h0m0.2-24.9h0m0.1-3.4h0m0-5.4h0m0.4 6.3h0m0.2 28.8h0m0.1-30.1h0m0 3.3h0m0-4.3h0m0.1 2.5h0m0.7-5h0m0.3 3.5h0m0.4 32.6h0m0.6-10.2h0m0.3-23h0m0.2-1.6h0m0 5.7h0m0.3-2.3h0m0.2-0.2h0m0.2-1.7h0m0.2 0h0m0.9-6h0m0.1 7.1h0m0.6-1.4h0m0.2 3.1h0m0.1 25.7h0m0.2 1.1h0m0.1-25.8h0m0-0.6h0" stroke="#000" stroke-width="3.7" stroke-linecap="round" fill="none"/>
<path d="M1154.0 462.7h0m0.2 24.2h0m0-11.3h0m0.1 1.1h0m0-8.8h0m0.1 11.3h0m0-18.6h0m0 11.4h0m0.3 4.9h0m0.2-6.6h0m0.1-2h0m0.1-2.3h0m0.1 18.2h0m0.2-9.2h0m0 3.8h0m0.1 1.8h0m0.2-8.2h0m0.2 3.2h0m0.1 0.3h0m0-12.3h0m0 21.8h0m0.2-34.1h0m0 21.4h0m0-1.9h0m0.1-11.6h0m0.1 7.7h0m0.1 0.7h0m0.3 0.8h0m0.1 1h0m0.1 14.6h0m0.1-29.2h0m0.1 19.5h0m0.2-13.9h0m0 7.4h0m0.1-20.9h0m0 4.9h0m0.3-7.2h0m0.1 15.1h0m0 18.8h0m0.1-30.2h0m0.1 8.6h0m0.1 5.3h0m0.1 7.3h0m0-17h0m0-3.6h0m0.2 2.9h0m0-6.1h0m0.1 19h0m0.2-9.5h0m0.1 1.7h0m0.1 3.8h0m0.1 2.6h0m0 9.7h0m0-9h0m0 17.6h0m0.1-12.7h0m0.2-17.7h0m0.1 24.8h0m0-26.8h0m0.2 24.2h0m0.1 2.4h0m0.2-7.5h0m0.3 2.2h0m0.1-5.8h0m0.1 9.6h0m0.1-4h0m0.1 0.4h0m0 6.3h0m0.1-26.8h0m0 17h0m0.1-3.1h0m0.3 20.4h0m0.2-21.4h0m0.2 4.3h0m0.1 0.9h0m0.2 4h0m0-11.6h0m0.1 0h0m0 0.8h0m0.1-2.5h0m0.4 5.1h0m0.2-11.7h0m0.1 3.5h0m0-8.1h0m0.1-0.2h0m0.2 7.9h0m0-11h0m0.1 9.6h0m0.2-17.6h0m0 6.4h0m0.4-2.4h0m0.1 1.8h0m0.4-2.3h0m0-13h0m0.3 9.9h0m0-8.5h0m0.1 13.4h0m0.1-2.9h0m0.1 5h0m0.1-12.2h0m0.1 10.8h0m0.2 11.3h0m0.5-1.2h0m0.2-1.3h0m0 14.6h0m0.1-17.5h0m0.3 6.8h0m0.1 1.8h0m0 1.4h0m0-6.8h0m0 8.5h0m0.3 7.8h0m0.1-10.1h0m0.1-4.5h0m0 2.9h0m0 6h0m0.1-18.1h0m0 4.7h0m0.1 10.6h0m0-4h0m0.1 0h0m0.1-1.8h0m0.1 21.4h0m0.2-26.8h0m0 0.6h0m0.1 23.2h0m0.5-15h0m0.1 16.1h0m0-23h0m0-1.1h0m0.1 0.6h0m0.1 6.4h0m0 2.8h0m0.1 0.2h0m0.1-5.7h0m0.1 1h0m0.1-18.7h0m0 17.6h0m0.1-4.9h0m0.1 15.2h0m0-6.9h0m0.1-10.3h0m0.1-0.2h0m0.1 3.5h0m0 6.9h0m0.3-15.8h0m0.3 12.1h0m0.1 0.4h0m0.1-14.2h0m0.1 19.5h0m0-4.3h0m0.1-13.3h0m0.2-3h0m0 15.4h0m0.1 0.7h0m0.1-6.9h0m0.1 13.2h0m0.1-14.6h0m0.1 1.8h0m0.1 6.5h0m0.2 0h0m0.7 12.9h0m0.2-9.4h0m0 9.9h0m0.1 0.1h0m0.6-4.6h0m0.1-1.1h0m0.1 4.6h0m0.1-4.9h0m0.5 6h0m0-9.2h0m0.1-2.8h0m0.5 14.9h0m0.1 0.3h0m0.1-17.1h0m0 19.4h0m0.1-15.2h0m0 14.1h0m0-19.8h0m0.3 9.9h0m0.1 2.8h0m0.1-13.1h0m0.1 14h0m0-13.5h0m0.1 16.2h0m0.2-8.7h0m0-7.9h0m0.1 9.1h0m0-1.6h0m0-1.1h0m0.2-6.1h0m0.2-11.3h0m0.1 5.3h0m0.3 7.2h0m0.1-4.8h0m0.1 16.4h0m0-19.1h0m0.4 6.5h0m0.1 10.6h0m0.2 18.7h0m0-11.1h0m0-18.5h0m0.1 4.1h0m0.4-2.6h0m0.3 17.3h0m0.3-6.7h0m0.4 2h0m0-8.4h0m0 29.9h0m0.1-9.4h0m0-11.2h0m0-7.3h0m0 8.8h0m0.1 23.5h0m0-22.6h0m0.2 3.7h0m0-3.4h0m0.1 16.6h0m0.1-22.1h0m0.5-14.4h0m0.2 16h0m0.1-4.9h0m0 23h0m0.1-30.3h0m0.5 6.4h0m0.1-1.3h0m0 3.7h0m0.2 7.9h0m0-23.6h0m0 4.1h0m0 7.3h0m0 4h0m0.2-2.7h0m0.1 5.1h0m0-11.3h0m0.1-7.6h0m0.1-0.8h0m0.1-4.2h0m0 16.7h0m0.1-10.2h0m0.1-12.2h0m0.1 9.9h0m0.4-8.3h0m0 3.4h0m0.1 8.6h0m0.1-5.6h0m0.1 5.6h0m0 17.2h0m0.1-28.5h0m0.2 16.9h0m0-11h0m0 14.6h0m0.4 1.3h0m0.1 10.1h0m0-11.5h0m0 1.3h0m0.2-0.2h0m0.3-3.1h0m0 7.1h0m0.2-3.9h0m0.1 6h0m0.1 4.7h0m0-10.6h0m0 25h0m0.1-34.3h0m0 3.7h0m0.2 9.4h0m0.2 6.2h0m0.1 5.9h0m0.1-10.9h0m0.1 2.5h0m0.1-5.9h0m0.1-5.2h0m0.1-0.7h0m0 14.5h0m0-9h0m0.2 3.4h0m0.1-1.7h0m0.1 10.7h0m0-10.7h0m0.2 1.9h0m0.1 4.3h0m0.1-6.3h0m0 11.7h0m0.3-20h0m0 1h0m0 13.1h0m0.1-17.9h0m0.1 17.7h0m0.2-6.6h0m0-13.5h0m0.4-3.6h0m0.2 11.9h0m0.1-0.9h0m0 5.3h0m0.2-16.2h0m0 1.4h0m0 5.3h0m0.1 2.3h0m0-13.8h0m0 0.9h0m0.1 6h0m0-5.4h0m0.1 15.8h0m0.1-22.9h0m0.1 17.4h0m0.1-6.8h0m0.2 11.6h0m0 2.9h0m0.2-2.7h0m0 1.4h0m0-6h0m0.1-12.7h0m0.1 6h0m0.1 15.3h0m0.2-10h0m0.5 29.2h0m0.1-24.9h0m0 13.9h0m0 3.9h0m0-1.8h0m0.1-13.7h0m0 7.9h0m0.1 1.5h0m0.2-2.1h0m0-1.3h0m0.2 6.1h0m0 5.1h0m0.1 8.4h0m0.1-10.4h0m0.1 6.2h0m0.1-6.8h0m0-11h0m0.1-0.9h0m0.1 7.7h0m0.1 2h0m0 1.7h0m0.1-7.8h0m0.2 7.7h0m0.2 5.7h0m0.1-3.1h0m0.1-9.7h0m0 5.8h0m0-9.3h0m0.1 2.1h0m0 6.8h0m0-5.5h0m0.1 1.3h0m0 0.6h0m0 5.2h0m0.3-11.4h0m0.1-3.6h0m0.2 2.5h0m0.2-1.1h0m0.1-1.2h0m0.2-7.6h0m0.4 4.7h0m0.1 5.7h0m0-1.3h0m0 4.3h0m0.1-15.5h0m0 4.4h0m0.3-0.7h0m0.1-6.4h0m0.3 13.3h0m0.1-4.7h0m0.1 9.6h0m0-14.6h0m0.3 10h0m0.1 6.1h0m0.3 5.4h0m0.1-16h0m0.1 14.5h0m0.1-10.3h0m0.4 12.8h0m0 7.7h0m0.1-16.2h0m0.3 1h0m0.2 16.6h0m0.1-12.4h0m0.3 7.4h0m0.1-7.5h0m0.1 8.2h0m0.1-6.3h0m0.3 16.7h0m0-23.1h0m0.2-1.7h0m0-1.3h0m0.2 5.4h0m0-7.6h0m0.2 5.9h0m0.4-17.4h0m0.3 11.2h0m0 0.2h0m0.4-13.7h0m0 6.2h0m0.2 2.6h0m0.4-13.4h0m0.2 19.4h0m0 8.4h0m0.1-16.5h0m0.1 1.1h0m0.1 4.7h0m0-7.5h0m0 8.8h0m0 3.7h0m0-4.4h0m0.1-6.7h0m0.1 4.1h0m0 2.1h0m0.1 1h0m0.1 3.2h0m0-11.8h0m0.1 12.8h0m0.1-9.6h0m0 4.3h0m0.1 18.1h0m0-24.6h0m0.1 8.6h0m0 3.6h0m0.2-3.1h0m0.2 0.6h0m0.1 7.3h0m0.2-1.3h0m0.1-8.2h0m0 5.2h0m0.1 3.4h0m0.1 9.6h0m0.4-17.1h0m0.3 4.6h0m0.1 13.4h0m0-18.6h0m0.2 7.4h0m0.3-3.9h0m0.1 12.2h0m0-16.6h0m0 7.1h0m0.2-7h0m0.1 8.9h0m0.2 0.4h0m0.1-5.4h0m0.4-9.1h0m0.1-16.2h0m0.3 9.5h0m0.3 13.3h0m0.1-19.2h0m0.1 18.9h0m0.4-19.1h0m0.4-14.3h0m0 32.6h0m0.1-19.2h0m0 20.3h0m0.1-8.7h0m0.3-12.1h0m0 2.2h0m0.1-9.2h0m0.1 20.5h0m0.1-8h0m0.1 20.2h0m0-5.5h0m0.1 0.2h0m0.3 19.5h0m0-18.7h0m0.1 1.1h0m0.1-6.4h0m0.3 10.5h0m0.1-7.2h0m0 11.6h0m0.1-9.4h0m0-11h0m0.2-3.7h0m0 17.1h0m0.1-2.3h0m0 22.3h0m0-19.5h0m0.3 8.1h0m0.1-8.6h0m0-7.7h0m0 12.8h0m0-9.7h0m0.1 8h0m0 5.4h0m0.1 5.3h0m0.1-7.8h0m0-19.6h0m0.1 2.6h0m0.3 4.8h0m0.1 4.6h0m0 1.3h0m0.1-8.1h0m0 4.1h0m0.1 8.9h0m0.3-8.4h0m0-0.4h0m0-0.5h0m0.1-12.6h0m0 25.4h0m0-27.3h0m0.2 0.6h0m0.1 7.5h0m0 2.5h0m0-3.3h0m0-3.6h0m0.1 2.2h0m0.3-3h0m0.2 9.9h0m0-3.2h0m0.2-10.1h0m0.2 1.5h0m0.2 14.1h0m0.1 2.6h0m0-13.3h0m0.1-3.1h0m0.1 18.9h0m0-12.8h0m0.1-0.6h0m0.3-7h0m0 8h0m0.1-2.3h0m0.1-7.7h0m0.1 2.4h0m0.1 9.2h0m0.3 2.2h0m0.1 2.2h0m0.1 2.9h0m0.2-1.6h0m0.1 2.4h0m0.4 0.3h0m0.1-6.4h0m0.2 8.6h0m0 7.9h0m0.4 2h0m0.2-2.1h0m0.2-1.2h0m0.1-5.7h0m0-5.4h0m0.1 0.6h0m0.1 2.5h0m0.2 4.1h0m0.1-11.9h0m0.3 4.4h0m0.1-2.2h0m0.1 1.4h0m0.1-1.3h0m0-0.4h0m0.1 0.4h0m0-5.7h0m0.1-0.1h0m0.1 4.6h0m0.1-3.1h0m0.1 4.1h0m0.3-3.3h0m0 6.6h0m0.1-8.2h0m0-3.6h0m0.1 3.6h0m0 5.8h0m0.1-2.9h0m0-7h0m0 8.3h0" stroke="#000" stroke-width="3.7" stroke-linecap="round" fill="none"/>
<path d="M1257.4 455.5h0m0 12.3h0m0-21.7h0m0.1 17.3h0m0.1 2.6h0m0-10.6h0m0.1-1.2h0m0.1-3.5h0m0.1-0.5h0m0.2-4.8h0m0.2 6.6h0m0 3.1h0m0.3-5.2h0m0.1-2.4h0m0.1 21.3h0m0.6-39h0m0 15.6h0m0.3-20.4h0m0 17.3h0m0.1-0.4h0m0-2.6h0m0.2 3.2h0m0.2-5.2h0m0.1 10.8h0m0 3h0m0.1-15.4h0m0.1 8.3h0m0.1 6.1h0m0-7.5h0m0.1 3h0m0.2-0.6h0m0.1-4.6h0m0.1 14.4h0m0-23.2h0m0.2 17.4h0m0.1-9.8h0m0-4.4h0m0 14.7h0m0.2-15.4h0m0 29.6h0m0.1 3h0m0.7-10.8h0m0.1-5.1h0m0.1 17.2h0m0.4-3.2h0m0-3.9h0m0-3.2h0m0.1 2.5h0m0.2 7.9h0m0.2 5.4h0m0.4-9.3h0m0.1-0.2h0m0.2-10.3h0m0 14.7h0m0.1-4.4h0m0-8.7h0m0.3 10.8h0m0.5-19.8h0m0 7.1h0m0.1-5.5h0m0.2 10h0m0 1.3h0m0-12.4h0m0.1 4.2h0m0.1 18.5h0m0.1-13.3h0m0.1-3.4h0m0-6.3h0m0-2.8h0m0.1 21.8h0m0-14.5h0m0.1 0.1h0m0-9.9h0m0.1 15.7h0m0-3.2h0m0-10.3h0m0.2 0.3h0m0 7h0m0 3.8h0m0.1-17.4h0m0 17.8h0m0.1-11.8h0m0.2-2.5h0m0.1 3.6h0m0 1.7h0m0 12.3h0m0.1 2.6h0m0-4.8h0m0.2 3.5h0m0-28.3h0m0 17.8h0m0-6.4h0m0.1 7.2h0m0.1 4.9h0m0.1 7.8h0m0-12.1h0m0.2-4.3h0m0 11.1h0m0.2-0.9h0m0 8.1h0m0.1-9.3h0m0.2 2.1h0m0-8.6h0m0.2-2.1h0m0.1 3.6h0m0.1 16.3h0m0.1-13.4h0m0 0.5h0m0 6.6h0m0.2 1.7h0m0.1 0.8h0m0.3 4.5h0m0-0.8h0m0.5 4.7h0m0-10.5h0m0.1 8.4h0m0.2-19.6h0m0.3 12h0m0-1.1h0m0.1 10.8h0m0.1-5.8h0m0 0.4h0m0.4-0.7h0m0.1-15.4h0m0 10.9h0m0.1 0.4h0m0-1.1h0m0.1-10.6h0m0 10.1h0m0.1-8h0m0.2 6.8h0m0.1 1.2h0m0.6-22.3h0m0 11.3h0m0.2-10.4h0m0 9.6h0m0 11.7h0m0.1-15h0m0.1 0.7h0m0.1-0.4h0m0.1-0.1h0m0 5.5h0m0 9.2h0m0-23.6h0m0.1 22.3h0m0.1-15h0m0 3h0m0-7.2h0m0.3-1.4h0m0.1 13.8h0m0 1.3h0m0.1-4.9h0m0-1.3h0m0.2-6.9h0m0 1h0m0.2 13.9h0m0 4.2h0m0.2 13.3h0m0-35.3h0m0 23.5h0m0-11.3h0m0.1 7.4h0m0.1-5.5h0m0.1 15h0m0.1-18.1h0m0 2.2h0m0-9.1h0m0.1 22.5h0m0.1-18.3h0m0 2.1h0m0.1 1h0m0 23.6h0m0.1-15.5h0m0-13.9h0m0 7.2h0m0.1-8.1h0m0 18.4h0m0-1.4h0m0.1 23h0m0-31.9h0m0.2 11.3h0m0-11.5h0m0.3 12.8h0m0.1-4.6h0m0 1h0m0.1 12.9h0m0.1-12h0m0-9.2h0m0.1-1.2h0m0.1-5.7h0m0.3-1.7h0m0.1 35.8h0m0-4.8h0m0-7.2h0m0.2 10.1h0m0-23.6h0m0-0.2h0m0.1 3.7h0m0.3-10.3h0m0 9.6h0m0.1 24.4h0m0-35.4h0m0.2 14.5h0m0.1-17h0m0.4 28.4h0m0-22.2h0m0.1 15.1h0m0.2-18.3h0m0.2 14.3h0m0.3-9.4h0m0 6h0m0.1 1.5h0m0-24.9h0m0.5-6.6h0m0 17.8h0m0.2 0.1h0m0.3-0.8h0m0.1-9.2h0m0.3 27.1h0m0.2-0.4h0m0 9.7h0m0.1-18.9h0m0.2-5.5h0m0.1 9.2h0m0.1 17.3h0m0.1 2h0m0.3-8.1h0m0-5.4h0m0.1 10.6h0m0.1-7h0m0.1 13.4h0m0-18.5h0m0.2 25.4h0m0.1-2.6h0m0-27.1h0m0 27.2h0m0.1-8.1h0m0.1 8.5h0m0-1.2h0m0.1-8.4h0m0.4-0.9h0m0.1 2.8h0m0.1-4.1h0m0.2-2.7h0m0 5.7h0m0.2-0.1h0m0.3-22h0m0.1 1.6h0m0.3 11.2h0m0-0.3h0m0.3-10.2h0m0.7 5.5h0m0.2-10h0m0 4.8h0m0.1 5.9h0m0.1-5.6h0m0.1 1.7h0m0-11.3h0m0.2 18.6h0m0-13.9h0m0.1-0.1h0m0.1 12h0m0 2.5h0m0.1 8.3h0m0.2-15.6h0m0-3.8h0m0.1 5.7h0m0-6.2h0m0.4-1.4h0m0.1-0.4h0m0-1.9h0m0.4 19.2h0m0-8.9h0m0 13.9h0m0.1-4h0m0-4.1h0m0 4.3h0m0.2-4.3h0m0.1 19.9h0m0.3-5.6h0m0-6.4h0m0.2-9.2h0m0 0h0m0-6.9h0m0.1 19.1h0m0.1-6.4h0m0.2-3.3h0m0.1 0.7h0m0.1-1.6h0m0 1.2h0m0.1 9h0m0.1-7.4h0m0.1-3.6h0m0 4.6h0m0 16.6h0m0.1-25h0m0 21h0m0.1-12.5h0m0.2-6.8h0m0-11.9h0m0.2 7.4h0m0.1 2.1h0m0.1 13.2h0m0-1h0m0-13.6h0m0.1-2.4h0m0.2 2.2h0m0 7.5h0m0-7.4h0m0.2 1.6h0m0 0.9h0m0.7 1h0m0.1-14.6h0m0.2 15.5h0m0.1-9.3h0m0.1 10.4h0m0-16.7h0m0.2 5.1h0m0.2-10.9h0m0.1 11.2h0m0.1-1.4h0m0-0.6h0m0.1-8.7h0m0.2 11.2h0m0.1 10.5h0m0.1-3.9h0m0-5.8h0m0.1-7.5h0m0.1 5.3h0m0 23.1h0m0-21.3h0m0.4 9.5h0m0.5 4.4h0m0 3.5h0m0.1-11.6h0m0-5.5h0m0 3.6h0m0.1 16h0m0.1 1.3h0m0.2 2.4h0m0 0.5h0m0.1 5.9h0m0-20.6h0m0.1 13h0m0 6.7h0m0.2-11.4h0m0.2-8.8h0m0.1 6.3h0m0-6.4h0m0.1 7.3h0m0.1-2.3h0m0.2-13.3h0m0.1 22.8h0m0.1-6.5h0m0.5-9h0m0.1-7.2h0m0 4.8h0m0-7.4h0m0.1-3.8h0m0.2 11.7h0m0.4 0.2h0m0.2 3.5h0m0-7.3h0m0.1-3.7h0m0-4.5h0m0.1 14.3h0m0.2-18.8h0m0 11h0m0.2 3.7h0m0.3-6.3h0m0.3-3.9h0m0-1h0m0.3-0.7h0m0.2 18.9h0m0.2-7.4h0m0.4-12.8h0m0.2 19.2h0m0.5-1h0m0-1h0m0-1h0m0.1 2.8h0m0-0.7h0m0.2-1.5h0m0.2 10.8h0m0-8.5h0m0-0.8h0m0.2 1h0m0.2 3.2h0m0 3.5h0m0.1 9.4h0m0.2-21.3h0m0 2.4h0m0 7.3h0m0.8-3.5h0m0-4.1h0m0-1.7h0m0.2-8.6h0m0.3-6.8h0m0 10.9h0m0-1.7h0m0.1 6.6h0m0.1 3.8h0m0-16.5h0m0.2 5.8h0m0.1-6.3h0m0 7.5h0m0.1-13.1h0m0.1 5.6h0m0.1 0.6h0m0.3-16.4h0m0.2 15.9h0m0-2.8h0m0 14.5h0m0.1-20.8h0m0 6h0m0.1-1.8h0m0.3 7.3h0m0.1 10.7h0m0.2-18h0m0-2.7h0" stroke="#000" stroke-width="3.7" stroke-linecap="round" fill="none"/>
</g>
<path d="M167.5 594.1h0m37-32.8h0m73.6-4h0m13.1 0h0m104.3-52.8h0m9.8-5.3h0m53.9 1.1h0m16.3 1.6h0m0 3.1h0m26.5 51.5h0m10 0h0m113.3-51.2h0m56-0.8h0m28 58.7h0m31.2 64.8h0m42.7-71.5h0m114.3-52.1h0m4 53.1h0m9.9 24.8h0m7.8-19.8h0m18.7-61h0m2.2 0h0m5.2 2.8h0m140-2.8h0m-0.9 56.9h0m75-61h0m5.9-85h0m1 8.1h0m110.7-4.1h0m2.6 1.8h0m-3.6-1.2h0m10.3 3.5h0" stroke="#ffa500" stroke-width="3.7" stroke-linecap="round" fill="none"/>
<path d="M276.2 660.6H282.2L279.2 666.4Z" fill="#ffa500"/>
<path d="M742.3 660.6H748.3L745.3 666.4Z" fill="#ffa500"/>
<rect x="105.5" y="499.1" width="1255.5" height="48.5" fill="#ff0000" fill-opacity="0.11"/>
<rect x="161" y="521.3" width="989.4" height="19.4" fill="#ffa500" fill-opacity="0.12"/>
<rect x="1148.2" y="442.9" width="156.2" height="27.1" fill="#ffa500" fill-opacity="0.12"/>
<path d="M105.5 522.9H1361" stroke="#ff0000" stroke-width="2.1"/>
<path d="M161 530.3H1150.4M1148.2 456.3H1304.4" stroke="#ffa500" stroke-width="2.6"/>
<path d="M162.0 666.5V380.5" stroke="#800080" stroke-width="2.08" stroke-dasharray="2.08 3.452"/>
<path d="M1149.0 666.5V380.5" stroke="#800080" stroke-width="2.08" stroke-dasharray="2.08 3.452"/>
<path d="M1303.0 666.5V380.5" stroke="#800080" stroke-width="2.08" stroke-dasharray="2.08 3.452"/>
<text x="654.73" y="656.50" font-size="14.50" text-anchor="middle" textLength="43.47" lengthAdjust="spacingAndGlyphs">57238</text>
<text x="1225.45" y="636.50" font-size="14.50" text-anchor="middle" textLength="43.30" lengthAdjust="spacingAndGlyphs">43385</text>
<path d="M162.0 954.5V725.5" stroke="#800080" stroke-width="2.08" stroke-dasharray="2.08 3.452"/>
<path d="M162.0 1011.5V954.5" stroke="#800080" stroke-width="2.08" stroke-dasharray="2.08 3.452"/>
<path d="M1149.0 954.5V725.5" stroke="#800080" stroke-width="2.08" stroke-dasharray="2.08 3.452"/>
<path d="M1149.0 1011.5V954.5" stroke="#800080" stroke-width="2.08" stroke-dasharray="2.08 3.452"/>
<path d="M1303.0 954.5V725.5" stroke="#800080" stroke-width="2.08" stroke-dasharray="2.08 3.452"/>
<path d="M1303.0 1011.5V954.5" stroke="#800080" stroke-width="2.08" stroke-dasharray="2.08 3.452"/>
<g fill="#000">
<rect x="161.3" y="761.8" width="7.399999999999977" height="3.4" rx="1.2"/>
<rect x="1148" y="761.8" width="9" height="3.4" rx="1.2"/>
<rect x="1215" y="761.8" width="45" height="3.4" rx="1.2"/>
<path d="M185.5 840.5L189.1 838.5V842.5ZM185.5 878.5L189.1 876.5V880.5Z"/>
</g>
<g clip-path="url(#c4)">
<g fill="#000">
<rect x="166" y="1006.9" width="984" height="3.4"/>
<rect x="1154.4" y="1005.3" width="63" height="4.6"/>
<rect x="1257.3" y="1004.6" width="47.3" height="4.8"/>
<path d="M172.1 1007.1h0m0.9 0.1h0m9.7-0.5h0m2.2 0.5h0m2.4-0.4h0m0.2 0.3h0m0.4 0h0m5.3-0.1h0m0.6-0.2h0m8 0.2h0m0.4 0h0m1.3 0.2h0m5.1-0.3h0m1.8-0.2h0m1 0h0m25.5 0.8h0m1.8-0.2h0m0.6-0.2h0m1.3 0.5h0m0.6-0.8h0m0.7 0.8h0m19.5-0.4h0m0.3-0.6h0m4.1 0.5h0m0.1-0.3h0m2.9 0.5h0m5.9 0.2h0m5.7-0.1h0m1.5 0.4h0m0.4-0.6h0m2.3-0.6h0m5.6 0.6h0m0.4 0.3h0m0.3-0.3h0m3.2 0.6h0m2.5-0.8h0m11.2 0.4h0m3.8 0.1h0m1.3-0.5h0m4.9-0.1h0m0.2-0.3h0m7.1 1.1h0m0.3-0.4h0m0.1 0h0m1.8-0.4h0m11 0.3h0m11.6-0.2h0m2.1 0.1h0m0.5 0h0m0.5 0.3h0m0.5-0.5h0m2.1 0.4h0m8.1-0.1h0m2-0.4h0m2.3 0.3h0m0.7 0h0m0.5 0.3h0m4.5-0.5h0m5.3 0.6h0m1 0.1h0m5.4 0.1h0m1.8-0.1h0m6.9-0.1h0m3.4-0.7h0m4.6-0.1h0m6.2 0.3h0m1.5-0.3h0m10 0.1h0m0.3 0.2h0m11.6 0.7h0m2.8-0.7h0m3.1 0.8h0m8.1-0.7h0m4.6-0.5h0m0.9 0.9h0m4.5-0.3h0m5 0.2h0m1.7 0h0m3.9 0.2h0m3.9 0.1h0m0.3 0h0m0.7-1.1h0m2.4 0.6h0m3.3-0.5h0m0.4 0.8h0m0 0.1h0m1.5 0.1h0m3.2 0.1h0m2.2-0.9h0m6.6 0h0m9.5 0.4h0m3.6 0.4h0m2.2-0.9h0m5.9 0.9h0m8.5-0.7h0m3.6 0.8h0m0.4-0.5h0m0.9 0h0m1.9-0.1h0m0 0.5h0m2.3-1h0m2 0h0m1.3 0.9h0m1.6-0.6h0m7.7 0.5h0m1.3 0h0m5.9-0.4h0m3.4-0.3h0m1.2-0.1h0m1.2 0.5h0m1.3 0.2h0m3.9-0.7h0m7.2 0.5h0m1.6-0.5h0m3.1 1h0m1.4-0.9h0m2.3 0.1h0m0.7-0.2h0m4 0.2h0m4.5 0.1h0m0.4 0.1h0m5.6 0.4h0m14.2-0.8h0m3.9 0.5h0m1.3 0.3h0m3.1-0.7h0m16.2 0.5h0m2-0.3h0m4.8 0.1h0m7.6 0.4h0m1.1 0.3h0m2.8-0.6h0m2.7 0.1h0m18.4-0.4h0m1.2 0.6h0m5.2-0.2h0m0.1 0.2h0m6.3-0.3h0m1.6-0.3h0m2.7-0.3h0m1.7 0.1h0m1.6 0h0m9.9 0.9h0m0.1 0h0m4.4-0.5h0m1.7-0.1h0m8 0.5h0m3.6-0.3h0m5.5-0.5h0m1 0.2h0m4.9 0.6h0m0.5-0.7h0m3.5 0.9h0m3.8-0.3h0m2.4 0.1h0m0.1-0.5h0m1.2 0.2h0m0.4-0.4h0m6.4-0.1h0m5 0.9h0m1.2-1h0m0.8 0.7h0m0.3-0.7h0m9.1 1.1h0m1.7-1h0m7.8 1h0m5-0.5h0m0.2 0.1h0m8.5 0.4h0m9.6 0h0m8.8-0.2h0m2.4-0.3h0m4.2 0.2h0m2.9-0.4h0m1.6 0.3h0m2 0.5h0m1.6-1.2h0m3.4 0.8h0m5.4-0.2h0m3.9-0.5h0m6.2 0.2h0m1.1 0.6h0m10.9-0.1h0m0.7 0.3h0m4.8 0h0m2.4-1.1h0m3.1 0.9h0m13.2-0.6h0m2.3 0.2h0m0.3-0.1h0m4.3 0.4h0m2.1-0.6h0m9 0.7h0m16.7-0.5h0m2.4 0.3h0m1.6 0h0m10.4-0.5h0m2.1 0h0m5.1 0.1h0m2.5-0.1h0m0.9 0.2h0m3.7-0.1h0m0.1 0.4h0m5.9-0.2h0m0.8-0.4h0m1.9 0.2h0m5.4-0.1h0m1.4 0h0m5.8 0.6h0m0.3 0h0m5.7 0.3h0m2.4-0.9h0m2.4 0.2h0m26.1 0.1h0m6.3-0.4h0m6.5 0.1h0m2.5 0.7h0m0.5 0.2h0m0.9-0.1h0m1.2 0.2h0m5-0.9h0m3.3 0.8h0m5.2 0.1h0m0.1-0.1h0m1.9-0.4h0m0.9-0.6h0m4.9 0.1h0m0.2 0.5h0m1.6-0.6h0m0.6 0.3h0m0.3-0.1h0m2.8-0.1h0m3.5 0.5h0m4.2 0.3h0m0.1 0h0m1.5-0.1h0m6.1-0.4h0m0.3 0.2h0m3-0.3h0m2.8 0.4h0m5.9 0.1h0m0.6-0.3h0m0.6-0.2h0m8.4 0.2h0m7.9-0.6h0m1.5 0.7h0m0.4-0.2h0m0.5-0.1h0m0.2 0.4h0m6.5-0.2h0m3.1-0.1h0m7.9 0h0m2.9-0.4h0m2.4 0.8h0m8.6 0.3h0m2.8 0h0m4.5-1h0m0.3 0.1h0m7.9 0.2h0m0.4 0.6h0" stroke="#000" stroke-width="2.6" stroke-linecap="round" fill="none"/>
<path d="M1155.2 1005.4h0m5.3-0.1h0m2.4 0.8h0m0.1 0.1h0m1.5-0.3h0m4.6 0h0m1 0.4h0m1.2-0.7h0m4.3-0.1h0m3.7 0.4h0m1.4-0.5h0m0.2 0.1h0m2 0.2h0m6.9-0.4h0m1.3 0h0m1.3 0.1h0m1.3 0.9h0m2.6-0.8h0m3 0h0m1.8 0.4h0m2.7 0.5h0m1-0.2h0m0-0.3h0m1.3-0.5h0m0.1 0.6h0m0.7-0.2h0m2.7-0.5h0m0.7 0.1h0m3.4 0.2h0m1 0.4h0" stroke="#000" stroke-width="2.6" stroke-linecap="round" fill="none"/>
<path d="M1260.5 1004.8h0m4.4 0.4h0m2.2-0.1h0m0.4-0.4h0m0.4-0.6h0m3.1-0.1h0m1.3 0.4h0m0.7 0h0m2.3 0.8h0m0.2-0.4h0m0.4-0.2h0m1.8-0.1h0m1.6 0h0m1.2-0.1h0m0.2 0.1h0m2.5 0.7h0m1.4-0.3h0m1.4-0.2h0m1.4-0.6h0m0.4 1.2h0m8.9-0.4h0m0.2-0.7h0m1.8 0.7h0m0.4-0.3h0m0 0.5h0m0.1-0.4h0m1.2 0.1h0m0.3-0.5h0m1.8 0.4h0m1.4-0.5h0" stroke="#000" stroke-width="2.6" stroke-linecap="round" fill="none"/>
<circle cx="279.5" cy="996.5" r="1.6"/><circle cx="779.2" cy="1001.6" r="1.4"/>
</g>
<g fill="#ff0000">
<rect x="160.5" y="955.5" width="9.0" height="4.5" rx="1.5"/>
<rect x="1147.3" y="955.5" width="10.0" height="4.5" rx="1.5"/>
<rect x="1214.7" y="955.5" width="46.0" height="4.5" rx="1.5"/>
<path d="M184.5 959.5H189.5L187 955.5Z"/>
</g></g>
<path d="M105.5 763.5H1485.5" stroke="#b0b0b0" stroke-width="1.11" stroke-dasharray="1.11 1.83"/>
<path d="M105.5 802.5H1485.5" stroke="#b0b0b0" stroke-width="1.11" stroke-dasharray="1.11 1.83"/>
<path d="M105.5 840.5H1485.5" stroke="#b0b0b0" stroke-width="1.11" stroke-dasharray="1.11 1.83"/>
<path d="M105.5 878.5H1485.5" stroke="#b0b0b0" stroke-width="1.11" stroke-dasharray="1.11 1.83"/>
<path d="M105.5 916.5H1485.5" stroke="#b0b0b0" stroke-width="1.11" stroke-dasharray="1.11 1.83"/>
<path d="M105.5 957.5H1485.5" stroke="#b0b0b0" stroke-width="1.11" stroke-dasharray="1.11 1.83"/>
<path d="M105.5 983.5H1485.5" stroke="#b0b0b0" stroke-width="1.11" stroke-dasharray="1.11 1.83"/>
<path d="M105.5 1009.5H1485.5" stroke="#b0b0b0" stroke-width="1.11" stroke-dasharray="1.11 1.83"/>
<rect x="105.5" y="35.5" width="1380" height="286.0" fill="none" stroke="#000" stroke-width="1.11"/>
<path d="M162.50 321.5v5.2M364.50 321.5v5.2M566.50 321.5v5.2M768.50 321.5v5.2M970.50 321.5v5.2M1172.50 321.5v5.2M1374.50 321.5v5.2" stroke="#000" stroke-width="1.11"/>
<text x="162.90" y="342.10" font-size="14.50" text-anchor="middle" textLength="8.14" lengthAdjust="spacingAndGlyphs">0</text>
<text x="364.81" y="342.10" font-size="14.50" text-anchor="middle" textLength="34.80" lengthAdjust="spacingAndGlyphs">2000</text>
<text x="567.03" y="342.10" font-size="14.50" text-anchor="middle" textLength="34.71" lengthAdjust="spacingAndGlyphs">4000</text>
<text x="768.81" y="342.10" font-size="14.50" text-anchor="middle" textLength="34.86" lengthAdjust="spacingAndGlyphs">6000</text>
<text x="970.87" y="342.10" font-size="14.50" text-anchor="middle" textLength="34.77" lengthAdjust="spacingAndGlyphs">8000</text>
<text x="1172.61" y="342.10" font-size="14.50" text-anchor="middle" textLength="43.54" lengthAdjust="spacingAndGlyphs">10000</text>
<text x="1374.61" y="342.10" font-size="14.50" text-anchor="middle" textLength="43.54" lengthAdjust="spacingAndGlyphs">12000</text>
<path d="M105.5 86.5h-5.1M105.5 139.5h-5.1M105.5 192.5h-5.1M105.5 245.5h-5.1M105.5 297.5h-5.1" stroke="#000" stroke-width="1.11"/>
<text x="95.95" y="92.20" font-size="14.50" text-anchor="end" textLength="30.18" lengthAdjust="spacingAndGlyphs">6.65</text>
<text x="95.91" y="145.20" font-size="14.50" text-anchor="end" textLength="30.44" lengthAdjust="spacingAndGlyphs">6.60</text>
<text x="95.95" y="198.20" font-size="14.50" text-anchor="end" textLength="30.18" lengthAdjust="spacingAndGlyphs">6.55</text>
<text x="95.91" y="251.20" font-size="14.50" text-anchor="end" textLength="30.44" lengthAdjust="spacingAndGlyphs">6.50</text>
<text x="95.95" y="303.20" font-size="14.50" text-anchor="end" textLength="30.18" lengthAdjust="spacingAndGlyphs">6.45</text>
<rect x="105.5" y="380.5" width="1380" height="286.0" fill="none" stroke="#000" stroke-width="1.11"/>
<path d="M162.50 666.5v5.2M364.50 666.5v5.2M566.50 666.5v5.2M768.50 666.5v5.2M970.50 666.5v5.2M1172.50 666.5v5.2M1374.50 666.5v5.2" stroke="#000" stroke-width="1.11"/>
<text x="162.90" y="687.10" font-size="14.50" text-anchor="middle" textLength="8.14" lengthAdjust="spacingAndGlyphs">0</text>
<text x="364.81" y="687.10" font-size="14.50" text-anchor="middle" textLength="34.80" lengthAdjust="spacingAndGlyphs">2000</text>
<text x="567.03" y="687.10" font-size="14.50" text-anchor="middle" textLength="34.71" lengthAdjust="spacingAndGlyphs">4000</text>
<text x="768.81" y="687.10" font-size="14.50" text-anchor="middle" textLength="34.86" lengthAdjust="spacingAndGlyphs">6000</text>
<text x="970.87" y="687.10" font-size="14.50" text-anchor="middle" textLength="34.77" lengthAdjust="spacingAndGlyphs">8000</text>
<text x="1172.61" y="687.10" font-size="14.50" text-anchor="middle" textLength="43.54" lengthAdjust="spacingAndGlyphs">10000</text>
<text x="1374.61" y="687.10" font-size="14.50" text-anchor="middle" textLength="43.54" lengthAdjust="spacingAndGlyphs">12000</text>
<path d="M105.5 384.5h-5.1M105.5 433.5h-5.1M105.5 481.5h-5.1M105.5 529.5h-5.1M105.5 577.5h-5.1M105.5 626.5h-5.1" stroke="#000" stroke-width="1.11"/>
<text x="95.98" y="389.20" font-size="14.50" text-anchor="end" textLength="30.48" lengthAdjust="spacingAndGlyphs">6.68</text>
<text x="95.99" y="438.20" font-size="14.50" text-anchor="end" textLength="30.57" lengthAdjust="spacingAndGlyphs">6.66</text>
<text x="95.76" y="486.20" font-size="14.50" text-anchor="end" textLength="30.43" lengthAdjust="spacingAndGlyphs">6.64</text>
<text x="96.08" y="534.20" font-size="14.50" text-anchor="end" textLength="30.13" lengthAdjust="spacingAndGlyphs">6.62</text>
<text x="95.91" y="582.20" font-size="14.50" text-anchor="end" textLength="30.44" lengthAdjust="spacingAndGlyphs">6.60</text>
<text x="95.98" y="631.20" font-size="14.50" text-anchor="end" textLength="30.48" lengthAdjust="spacingAndGlyphs">6.58</text>
<rect x="105.5" y="725.5" width="1380" height="229.0" fill="none" stroke="#000" stroke-width="1.11"/>
<path d="M105.5 763.5h-5.1M105.5 802.5h-5.1M105.5 840.5h-5.1M105.5 878.5h-5.1M105.5 916.5h-5.1" stroke="#000" stroke-width="1.11"/>
<text x="95.83" y="769.20" font-size="14.50" text-anchor="end" textLength="80.28" lengthAdjust="spacingAndGlyphs">not Kalman</text>
<text x="95.28" y="807.20" font-size="14.50" text-anchor="end" textLength="62.26" lengthAdjust="spacingAndGlyphs">not track</text>
<text x="95.97" y="845.20" font-size="14.50" text-anchor="end" textLength="59.27" lengthAdjust="spacingAndGlyphs">Ion. rad.</text>
<text x="95.60" y="882.90" font-size="14.50" text-anchor="end" textLength="43.26" lengthAdjust="spacingAndGlyphs">dr > 5</text>
<text x="95.47" y="920.80" font-size="14.50" text-anchor="end" textLength="81.27" lengthAdjust="spacingAndGlyphs">OBS not OK</text>
<rect x="105.5" y="954.5" width="1380" height="57.0" fill="none" stroke="#000" stroke-width="1.11"/>
<path d="M162.50 1011.5v5.2M364.50 1011.5v5.2M566.50 1011.5v5.2M768.50 1011.5v5.2M970.50 1011.5v5.2M1172.50 1011.5v5.2M1374.50 1011.5v5.2" stroke="#000" stroke-width="1.11"/>
<text x="162.90" y="1032.10" font-size="14.50" text-anchor="middle" textLength="8.14" lengthAdjust="spacingAndGlyphs">0</text>
<text x="364.81" y="1032.10" font-size="14.50" text-anchor="middle" textLength="34.80" lengthAdjust="spacingAndGlyphs">2000</text>
<text x="567.03" y="1032.10" font-size="14.50" text-anchor="middle" textLength="34.71" lengthAdjust="spacingAndGlyphs">4000</text>
<text x="768.81" y="1032.10" font-size="14.50" text-anchor="middle" textLength="34.86" lengthAdjust="spacingAndGlyphs">6000</text>
<text x="970.87" y="1032.10" font-size="14.50" text-anchor="middle" textLength="34.77" lengthAdjust="spacingAndGlyphs">8000</text>
<text x="1172.61" y="1032.10" font-size="14.50" text-anchor="middle" textLength="43.54" lengthAdjust="spacingAndGlyphs">10000</text>
<text x="1374.61" y="1032.10" font-size="14.50" text-anchor="middle" textLength="43.54" lengthAdjust="spacingAndGlyphs">12000</text>
<path d="M105.5 957.5h-5.1M105.5 983.5h-5.1M105.5 1009.5h-5.1" stroke="#000" stroke-width="1.11"/>
<text x="94.70" y="962.20" font-size="14.50" text-anchor="end" textLength="16.98" lengthAdjust="spacingAndGlyphs">10</text>
<text x="95.28" y="988.20" font-size="14.50" text-anchor="end" textLength="7.68" lengthAdjust="spacingAndGlyphs">5</text>
<text x="96.57" y="1014.20" font-size="14.50" text-anchor="end" textLength="8.14" lengthAdjust="spacingAndGlyphs">0</text>
<path d="M105.5 970.5h-2.78M105.5 996.5h-2.78" stroke="#000" stroke-width="0.83"/>
<text x="0" y="0" font-size="14.5" text-anchor="middle" textLength="14.53" lengthAdjust="spacingAndGlyphs" transform="translate(68.5 983.5) rotate(-90)">dr</text>
<rect x="1361.3" y="42.3" width="117.40000000000009" height="27.200000000000003" rx="2.8" fill="#fff" fill-opacity="0.8" stroke="#cccccc" stroke-width="1.11"/>
<path d="M1366 54.2H1396" stroke="#008000" stroke-width="2.1"/>
<text x="1406.66" y="58.80" font-size="14.50" text-anchor="start" textLength="30.38" lengthAdjust="spacingAndGlyphs">mag</text>
<text x="1437.48" y="61.30" font-size="10.15" text-anchor="start" textLength="33.75" lengthAdjust="spacingAndGlyphs" font-style="italic">AGASC</text>
<rect x="1348.5" y="247.5" width="130.0" height="67.0" rx="2.8" fill="#fff" fill-opacity="0.8" stroke="#cccccc" stroke-width="1.11"/>
<circle cx="1367.5" cy="260.5" r="1.75" fill="#ff0000"/><circle cx="1367.5" cy="281.5" r="1.75" fill="#ffa500"/><circle cx="1367.5" cy="302.5" r="1.75" fill="#000"/>
<text x="1391.79" y="264.00" font-size="14.50" text-anchor="start" textLength="47.41" lengthAdjust="spacingAndGlyphs">not OK</text>
<text x="1392.19" y="285.00" font-size="14.50" text-anchor="start" textLength="79.78" lengthAdjust="spacingAndGlyphs">Highlighted</text>
<text x="1392.63" y="306.00" font-size="14.50" text-anchor="start" textLength="20.38" lengthAdjust="spacingAndGlyphs">OK</text>
<rect x="1365.5" y="387.5" width="113.0" height="48.0" rx="2.8" fill="#fff" fill-opacity="0.8" stroke="#cccccc" stroke-width="1.11"/>
<path d="M1369 399.5H1400" stroke="#ffa500" stroke-width="2.8"/><path d="M1369 421.8H1399" stroke="#ff0000" stroke-width="2.1"/>
<text x="1409.46" y="404.00" font-size="14.50" text-anchor="start" textLength="30.38" lengthAdjust="spacingAndGlyphs">mag</text>
<text x="1439.46" y="405.80" font-size="10.15" text-anchor="start" textLength="30.85" lengthAdjust="spacingAndGlyphs" font-style="italic">OBSID</text>
<text x="1408.76" y="426.50" font-size="14.50" text-anchor="start" textLength="30.38" lengthAdjust="spacingAndGlyphs">mag</text>
<rect x="1348.5" y="613.5" width="130.0" height="46.0" rx="2.8" fill="#fff" fill-opacity="0.8" stroke="#cccccc" stroke-width="1.11"/>
<circle cx="1367.5" cy="626.5" r="1.75" fill="#ffa500"/><circle cx="1367.5" cy="647.5" r="1.75" fill="#000"/>
<text x="1392.19" y="629.80" font-size="14.50" text-anchor="start" textLength="79.78" lengthAdjust="spacingAndGlyphs">Highlighted</text>
<text x="1392.63" y="650.80" font-size="14.50" text-anchor="start" textLength="20.38" lengthAdjust="spacingAndGlyphs">OK</text>
</svg></body></html>
